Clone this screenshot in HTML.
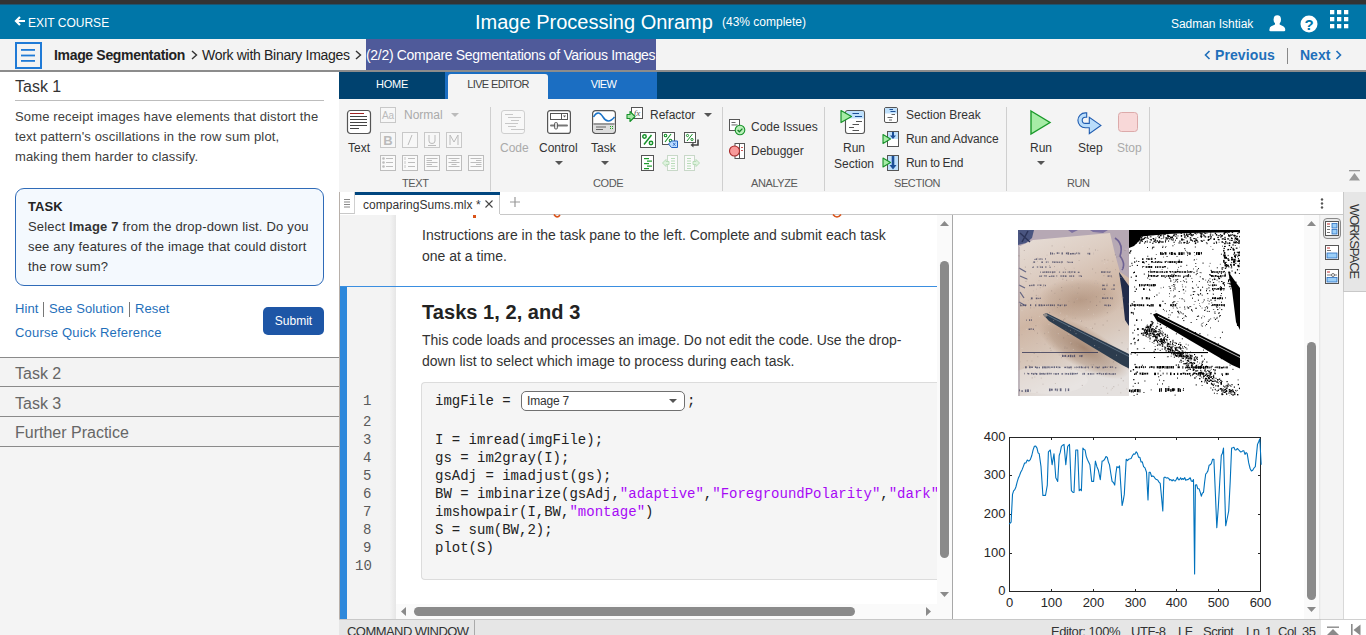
<!DOCTYPE html>
<html><head><meta charset="utf-8"><title>MATLAB Onramp</title><style>*{box-sizing:border-box;margin:0;padding:0}
html,body{width:1366px;height:635px;overflow:hidden;background:#f4f4f4;font-family:"Liberation Sans",sans-serif;color:#333}
.a{position:absolute;white-space:nowrap}
svg.a{overflow:visible}
</style></head><body>
<div class="a" style="left:0px;top:0px;width:1366px;height:4px;background:#333"></div>
<div class="a" style="left:0px;top:4px;width:1366px;height:1px;background:#1d5470"></div>
<div class="a" style="left:0px;top:5px;width:1366px;height:34px;background:#0076a8"></div>
<svg class="a" style="left:15px;top:16px;" width="11" height="10" viewBox="0 0 11 10"><path d="M5 1 L1 5 L5 9 M1.5 5 H10" stroke="#fff" stroke-width="2.2" fill="none"/></svg>
<div class="a" style="left:28px;top:16px;font-size:12px;line-height:15px;color:#fff;font-weight:normal;">EXIT COURSE</div>
<div class="a" style="left:475px;top:10px;font-size:20px;line-height:25px;color:#fff;font-weight:normal;">Image Processing Onramp</div>
<div class="a" style="left:722px;top:15px;font-size:12px;line-height:15px;color:#fff;font-weight:normal;">(43% complete)</div>
<div class="a" style="left:1171px;top:17px;font-size:12px;line-height:15px;color:#fff;font-weight:normal;letter-spacing:-0.03px;">Sadman Ishtiak</div>
<svg class="a" style="left:1269px;top:15px;" width="17" height="17" viewBox="0 0 17 17"><ellipse cx="8.3" cy="4.6" rx="3.7" ry="4.4" fill="#fff"/><path d="M0.3 15 Q0.3 11.5 4 10.5 L6 9.5 H10.6 L12.6 10.5 Q16.3 11.5 16.3 15 Q16.3 16.2 15 16.2 H1.6 Q0.3 16.2 0.3 15Z" fill="#fff"/><rect x="6" y="7" width="4.6" height="3.5" fill="#fff"/></svg>
<svg class="a" style="left:1300px;top:15px;" width="18" height="18" viewBox="0 0 18 18"><circle cx="9" cy="9" r="8.5" fill="#fff"/><text x="9" y="14.5" text-anchor="middle" font-family="Liberation Sans" font-weight="bold" font-size="15" fill="#0076a8">?</text></svg>
<svg class="a" style="left:1330px;top:10px;" width="19" height="19" viewBox="0 0 19 19"><rect x="0" y="0" width="4.3" height="4.3" fill="#fff"/><rect x="7" y="0" width="4.3" height="4.3" fill="#fff"/><rect x="14" y="0" width="4.3" height="4.3" fill="#fff"/><rect x="0" y="7" width="4.3" height="4.3" fill="#fff"/><rect x="7" y="7" width="4.3" height="4.3" fill="#fff"/><rect x="14" y="7" width="4.3" height="4.3" fill="#fff"/><rect x="0" y="14" width="4.3" height="4.3" fill="#fff"/><rect x="7" y="14" width="4.3" height="4.3" fill="#fff"/><rect x="14" y="14" width="4.3" height="4.3" fill="#fff"/></svg>
<div class="a" style="left:0px;top:39px;width:1366px;height:31px;background:#f3f3f3"></div>
<div class="a" style="left:0px;top:70px;width:1366px;height:2px;background:#8c8c8c"></div>
<div class="a" style="left:15px;top:42px;width:27px;height:27px;border:2px solid #1f7ad6;background:#fff0"></div>
<svg class="a" style="left:21px;top:49px;" width="15" height="13" viewBox="0 0 15 13"><rect x="0" y="0" width="14" height="1.8" fill="#1f7ad6"/><rect x="0" y="5.6" width="14" height="1.8" fill="#1f7ad6"/><rect x="0" y="11" width="14" height="1.8" fill="#1f7ad6"/></svg>
<div class="a" style="left:54px;top:46px;font-size:14px;line-height:18px;color:#222;font-weight:bold;letter-spacing:-0.33px;">Image Segmentation</div>
<svg class="a" style="left:191px;top:50px;" width="7" height="10" viewBox="0 0 7 10"><path d="M1 1 L5.5 5 L1 9" stroke="#333" stroke-width="1.4" fill="none"/></svg>
<div class="a" style="left:202px;top:46px;font-size:14px;line-height:18px;color:#222;font-weight:normal;letter-spacing:-0.3px;">Work with Binary Images</div>
<svg class="a" style="left:355px;top:50px;" width="7" height="10" viewBox="0 0 7 10"><path d="M1 1 L5.5 5 L1 9" stroke="#333" stroke-width="1.4" fill="none"/></svg>
<div class="a" style="left:366px;top:39px;width:290px;height:31px;background:#4f5a9a"></div>
<div class="a" style="left:366px;top:46px;font-size:14px;line-height:18px;color:#fff;font-weight:normal;letter-spacing:-0.31px;">(2/2) Compare Segmentations of Various Images</div>
<svg class="a" style="left:1204px;top:50px;" width="7" height="10" viewBox="0 0 7 10"><path d="M5.5 1 L1.5 5 L5.5 9" stroke="#1f6fba" stroke-width="1.6" fill="none"/></svg>
<div class="a" style="left:1215px;top:46px;font-size:14px;line-height:18px;color:#1f6fba;font-weight:bold;letter-spacing:0.1px;">Previous</div>
<div class="a" style="left:1287px;top:48px;width:1px;height:16px;background:#888"></div>
<div class="a" style="left:1300px;top:46px;font-size:14px;line-height:18px;color:#1f6fba;font-weight:bold;">Next</div>
<svg class="a" style="left:1335px;top:50px;" width="7" height="10" viewBox="0 0 7 10"><path d="M1.5 1 L5.5 5 L1.5 9" stroke="#1f6fba" stroke-width="1.6" fill="none"/></svg>
<div class="a" style="left:0px;top:72px;width:339px;height:563px;background:#f4f4f4"></div>
<div class="a" style="left:0px;top:72px;width:339px;height:285px;background:#fff"></div>
<div class="a" style="left:15px;top:77px;font-size:16px;line-height:20px;color:#333;font-weight:normal;">Task 1</div>
<div class="a" style="left:15px;top:100px;width:309px;height:1px;background:#bdbdbd"></div>
<div class="a" style="left:15px;top:109px;font-size:13px;line-height:16px;color:#404040;font-weight:normal;letter-spacing:0.14px;">Some receipt images have elements that distort the</div>
<div class="a" style="left:15px;top:129px;font-size:13px;line-height:16px;color:#404040;font-weight:normal;letter-spacing:0.14px;">text pattern&#x27;s oscillations in the row sum plot,</div>
<div class="a" style="left:15px;top:149px;font-size:13px;line-height:16px;color:#404040;font-weight:normal;letter-spacing:0.14px;">making them harder to classify.</div>
<div class="a" style="left:15px;top:188px;width:309px;height:98px;border:1px solid #2f6bb8;border-radius:9px;background:#f4f9fe"></div>
<div class="a" style="left:28px;top:199px;font-size:13px;line-height:16px;color:#222;font-weight:bold;letter-spacing:0.1px;">TASK</div>
<div class="a" style="left:28px;top:219px;font-size:13px;line-height:16px;color:#333;font-weight:normal;letter-spacing:0.18px;">Select <b>Image 7</b> from the drop-down list. Do you</div>
<div class="a" style="left:28px;top:239px;font-size:13px;line-height:16px;color:#333;font-weight:normal;letter-spacing:0.17px;">see any features of the image that could distort</div>
<div class="a" style="left:28px;top:259px;font-size:13px;line-height:16px;color:#333;font-weight:normal;letter-spacing:0.17px;">the row sum?</div>
<div class="a" style="left:15px;top:301px;font-size:13px;line-height:16px;color:#1f6fba;font-weight:normal;letter-spacing:0.1px;">Hint</div>
<div class="a" style="left:43px;top:302px;width:1px;height:15px;background:#777"></div>
<div class="a" style="left:49px;top:301px;font-size:13px;line-height:16px;color:#1f6fba;font-weight:normal;letter-spacing:0.1px;">See Solution</div>
<div class="a" style="left:129px;top:302px;width:1px;height:15px;background:#777"></div>
<div class="a" style="left:135px;top:301px;font-size:13px;line-height:16px;color:#1f6fba;font-weight:normal;letter-spacing:0.1px;">Reset</div>
<div class="a" style="left:15px;top:325px;font-size:13px;line-height:16px;color:#1f6fba;font-weight:normal;letter-spacing:0.2px;">Course Quick Reference</div>
<div class="a" style="left:263px;top:307px;width:61px;height:28px;background:#1e56a6;border-radius:5px"></div>
<div class="a" style="left:263px;top:314px;font-size:12px;line-height:15px;color:#fff;font-weight:normal;width:61px;text-align:center;">Submit</div>
<div class="a" style="left:0px;top:357px;width:339px;height:30px;background:#f3f3f3;border-top:1px solid #8a8a8a"></div>
<div class="a" style="left:15px;top:364px;font-size:16px;line-height:20px;color:#666;font-weight:normal;">Task 2</div>
<div class="a" style="left:0px;top:386px;width:339px;height:30px;background:#f3f3f3;border-top:1px solid #8a8a8a"></div>
<div class="a" style="left:15px;top:394px;font-size:16px;line-height:20px;color:#666;font-weight:normal;">Task 3</div>
<div class="a" style="left:0px;top:416px;width:339px;height:30px;background:#f3f3f3;border-top:1px solid #8a8a8a"></div>
<div class="a" style="left:15px;top:423px;font-size:16px;line-height:20px;color:#666;font-weight:normal;">Further Practice</div>
<div class="a" style="left:0px;top:446px;width:339px;height:1px;background:#8a8a8a"></div>
<div class="a" style="left:339px;top:72px;width:1027px;height:27px;background:#00426f"></div>
<div class="a" style="left:445px;top:72px;width:212px;height:27px;background:#1b6ec2"></div>
<div class="a" style="left:448px;top:74px;width:100px;height:25px;background:#f4f4f4;border-radius:3px 3px 0 0"></div>
<div class="a" style="left:339px;top:77px;font-size:11px;line-height:14px;color:#fff;font-weight:normal;letter-spacing:-0.2px;width:106px;text-align:center;">HOME</div>
<div class="a" style="left:448px;top:77px;font-size:11px;line-height:14px;color:#404040;font-weight:normal;letter-spacing:-0.6px;width:100px;text-align:center;">LIVE EDITOR</div>
<div class="a" style="left:549px;top:77px;font-size:11px;line-height:14px;color:#fff;font-weight:normal;letter-spacing:-0.6px;width:109px;text-align:center;">VIEW</div>
<div class="a" style="left:339px;top:99px;width:1027px;height:93px;background:#f4f4f4"></div>
<div class="a" style="left:490px;top:107px;width:1px;height:84px;background:#cfcfcf"></div>
<div class="a" style="left:722px;top:107px;width:1px;height:84px;background:#cfcfcf"></div>
<div class="a" style="left:824px;top:107px;width:1px;height:84px;background:#cfcfcf"></div>
<div class="a" style="left:1006px;top:107px;width:1px;height:84px;background:#cfcfcf"></div>
<div class="a" style="left:1149px;top:107px;width:1px;height:84px;background:#cfcfcf"></div>
<div class="a" style="left:402px;top:176px;font-size:11px;line-height:14px;color:#5a5a5a;font-weight:normal;letter-spacing:-0.4px;">TEXT</div>
<div class="a" style="left:593px;top:176px;font-size:11px;line-height:14px;color:#5a5a5a;font-weight:normal;letter-spacing:-0.4px;">CODE</div>
<div class="a" style="left:751px;top:176px;font-size:11px;line-height:14px;color:#5a5a5a;font-weight:normal;letter-spacing:-0.4px;">ANALYZE</div>
<div class="a" style="left:894px;top:176px;font-size:11px;line-height:14px;color:#5a5a5a;font-weight:normal;letter-spacing:-0.4px;">SECTION</div>
<div class="a" style="left:1067px;top:176px;font-size:11px;line-height:14px;color:#5a5a5a;font-weight:normal;letter-spacing:-0.4px;">RUN</div>
<svg class="a" style="left:347px;top:110px;" width="24" height="24" viewBox="0 0 24 24"><rect x="0.5" y="0.5" width="23" height="23" rx="3" fill="#fff" stroke="#555" stroke-width="1.2"/><rect x="3" y="3" width="14" height="1" fill="#a02424"/><rect x="3" y="6" width="17" height="1" fill="#444"/><rect x="3" y="9" width="17" height="1" fill="#444"/><rect x="3" y="12" width="17" height="1" fill="#444"/><rect x="3" y="15" width="17" height="1" fill="#444"/><rect x="3" y="18" width="9" height="1" fill="#444"/></svg>
<div class="a" style="left:348px;top:141px;font-size:12px;line-height:15px;color:#333;font-weight:normal;">Text</div>
<svg class="a" style="left:380px;top:107px;" width="16" height="16" viewBox="0 0 16 16"><rect x="0.5" y="0.5" width="15" height="15" fill="#f7f7f7" stroke="#c8c8c8"/><text x="8" y="12" text-anchor="middle" font-family="Liberation Sans" font-size="10" fill="#bbb">Aa</text></svg>
<div class="a" style="left:404px;top:108px;font-size:12px;line-height:15px;color:#aaa;font-weight:normal;">Normal</div>
<svg class="a" style="left:451px;top:113px;" width="8" height="4" viewBox="0 0 8 4"><path d="M0 0 H8 L4 4Z" fill="#bbb"/></svg>
<svg class="a" style="left:380px;top:132px;" width="16" height="16" viewBox="0 0 16 16"><rect x="0.5" y="0.5" width="15" height="15" fill="#f7f7f7" stroke="#c8c8c8"/><text x="8" y="13" text-anchor="middle" font-family="Liberation Sans" font-weight="bold" font-size="13" fill="#bbb">B</text></svg>
<svg class="a" style="left:402px;top:132px;" width="16" height="16" viewBox="0 0 16 16"><rect x="0.5" y="0.5" width="15" height="15" fill="#f7f7f7" stroke="#c8c8c8"/><path d="M10 3 L6 13" stroke="#bbb" stroke-width="1"/></svg>
<svg class="a" style="left:424px;top:132px;" width="16" height="16" viewBox="0 0 16 16"><rect x="0.5" y="0.5" width="15" height="15" fill="#f7f7f7" stroke="#c8c8c8"/><path d="M5 3 V9 Q5 11.5 8 11.5 Q11 11.5 11 9 V3 M4 13.5 H12" stroke="#bbb" stroke-width="1" fill="none"/></svg>
<svg class="a" style="left:446px;top:132px;" width="16" height="16" viewBox="0 0 16 16"><rect x="0.5" y="0.5" width="15" height="15" fill="#f7f7f7" stroke="#c8c8c8"/><path d="M4 13 V3 L8 10 L12 3 V13" stroke="#bbb" stroke-width="1" fill="none"/></svg>
<svg class="a" style="left:380px;top:155px;" width="16" height="16" viewBox="0 0 16 16"><rect x="0.5" y="0.5" width="15" height="15" fill="#fafafa" stroke="#bdbdbd"/><circle cx="3.5" cy="3.5" r="1.3" fill="#bdbdbd"/><path d="M6 3.5 H13" stroke="#bdbdbd"/><circle cx="3.5" cy="7.5" r="1.3" fill="#bdbdbd"/><path d="M6 7.5 H13" stroke="#bdbdbd"/><circle cx="3.5" cy="11.5" r="1.3" fill="#bdbdbd"/><path d="M6 11.5 H13" stroke="#bdbdbd"/></svg>
<svg class="a" style="left:402px;top:155px;" width="16" height="16" viewBox="0 0 16 16"><rect x="0.5" y="0.5" width="15" height="15" fill="#fafafa" stroke="#bdbdbd"/><path d="M3 2.0 V5.0" stroke="#bdbdbd" stroke-width="0.8"/><path d="M6 3.5 H13" stroke="#bdbdbd"/><path d="M3 6.0 V9.0" stroke="#bdbdbd" stroke-width="0.8"/><path d="M6 7.5 H13" stroke="#bdbdbd"/><path d="M3 10.0 V13.0" stroke="#bdbdbd" stroke-width="0.8"/><path d="M6 11.5 H13" stroke="#bdbdbd"/></svg>
<svg class="a" style="left:424px;top:155px;" width="16" height="16" viewBox="0 0 16 16"><rect x="0.5" y="0.5" width="15" height="15" fill="#fafafa" stroke="#bdbdbd"/><path d="M2.5 3.5 H13.5" stroke="#bdbdbd"/><path d="M2.5 5.5 H8" stroke="#bdbdbd"/><path d="M2.5 7.5 H13.5" stroke="#bdbdbd"/><path d="M2.5 9.5 H8" stroke="#bdbdbd"/><path d="M2.5 11.5 H13.5" stroke="#bdbdbd"/></svg>
<svg class="a" style="left:446px;top:155px;" width="16" height="16" viewBox="0 0 16 16"><rect x="0.5" y="0.5" width="15" height="15" fill="#fafafa" stroke="#bdbdbd"/><path d="M2.5 3.5 H13.5" stroke="#bdbdbd"/><path d="M5.5 5.5 H10.5" stroke="#bdbdbd"/><path d="M2.5 7.5 H13.5" stroke="#bdbdbd"/><path d="M5.5 9.5 H10.5" stroke="#bdbdbd"/><path d="M2.5 11.5 H13.5" stroke="#bdbdbd"/></svg>
<svg class="a" style="left:468px;top:155px;" width="16" height="16" viewBox="0 0 16 16"><rect x="0.5" y="0.5" width="15" height="15" fill="#fafafa" stroke="#bdbdbd"/><path d="M2.5 3.5 H13.5" stroke="#bdbdbd"/><path d="M8 5.5 H13.5" stroke="#bdbdbd"/><path d="M2.5 7.5 H13.5" stroke="#bdbdbd"/><path d="M8 9.5 H13.5" stroke="#bdbdbd"/><path d="M2.5 11.5 H13.5" stroke="#bdbdbd"/></svg>
<svg class="a" style="left:501px;top:110px;" width="24" height="24" viewBox="0 0 24 24"><rect x="0.5" y="0.5" width="23" height="23" rx="2.5" fill="#f8f8f8" stroke="#cfcfcf"/><rect x="4" y="4" width="8" height="1" fill="#c8c8c8"/><rect x="7" y="7" width="13" height="1" fill="#c8c8c8"/><rect x="10" y="10" width="8" height="1" fill="#c8c8c8"/><rect x="4" y="13" width="13" height="1" fill="#c8c8c8"/><rect x="7" y="16" width="8" height="1" fill="#c8c8c8"/><rect x="10" y="19" width="13" height="1" fill="#c8c8c8"/></svg>
<div class="a" style="left:500px;top:141px;font-size:12px;line-height:15px;color:#aaa;font-weight:normal;">Code</div>
<svg class="a" style="left:547px;top:110px;" width="24" height="24" viewBox="0 0 24 24"><rect x="0.6" y="0.6" width="22.8" height="22.8" rx="2.5" fill="#fff" stroke="#555" stroke-width="1.2"/><rect x="3.5" y="3.5" width="17" height="6" fill="#fff" stroke="#555"/><path d="M14.5 3.5 V9.5" stroke="#555"/><path d="M16 5.5 H19 L17.5 7.5Z" fill="#555"/><rect x="3" y="14.5" width="18" height="2" rx="1" fill="#777"/><rect x="7.5" y="12.5" width="3" height="6.5" rx="1.2" fill="#ddd" stroke="#555" stroke-width="0.9"/></svg>
<div class="a" style="left:539px;top:141px;font-size:12px;line-height:15px;color:#333;font-weight:normal;">Control</div>
<svg class="a" style="left:555px;top:161px;" width="8" height="4" viewBox="0 0 8 4"><path d="M0 0 H8 L4 4Z" fill="#555"/></svg>
<svg class="a" style="left:592px;top:110px;" width="24" height="24" viewBox="0 0 24 24"><rect x="0.6" y="0.6" width="22.8" height="22.8" rx="3" fill="#fff" stroke="#555" stroke-width="1.2"/><path d="M1.5 15 H22.5 V20 Q22.5 22.5 20 22.5 H4 Q1.5 22.5 1.5 20Z" fill="#ddd"/><path d="M1.5 14 H22.5" stroke="#555" stroke-width="1.2"/><path d="M1.5 7 Q6 -1 11 7 T22.5 7" stroke="#1a73c8" stroke-width="1.5" fill="none"/><rect x="4" y="16.5" width="10" height="1" fill="#666"/><rect x="4" y="19" width="7" height="1" fill="#666"/><rect x="18" y="16" width="1" height="1" fill="#2a2"/><rect x="20" y="16" width="1" height="1" fill="#2a2"/><rect x="18" y="18" width="1" height="1" fill="#2a2"/><rect x="20" y="18" width="1" height="1" fill="#2a2"/></svg>
<div class="a" style="left:591px;top:141px;font-size:12px;line-height:15px;color:#333;font-weight:normal;">Task</div>
<svg class="a" style="left:601px;top:161px;" width="8" height="4" viewBox="0 0 8 4"><path d="M0 0 H8 L4 4Z" fill="#555"/></svg>
<svg class="a" style="left:626px;top:106px;" width="19" height="17" viewBox="0 0 19 17"><rect x="5.5" y="1.5" width="11" height="11" fill="#fff" stroke="#555"/><text x="11" y="9.5" text-anchor="middle" font-family="Liberation Serif" font-style="italic" font-size="9" fill="#555">fx</text><path d="M1 8.5 H4 V5.5 L9 10.5 L4 15.5 V12.5 H1Z" fill="#a8e6a8" stroke="#17922a" stroke-width="1.1" stroke-linejoin="round"/></svg>
<div class="a" style="left:650px;top:108px;font-size:12px;line-height:15px;color:#333;font-weight:normal;">Refactor</div>
<svg class="a" style="left:704px;top:113px;" width="8" height="4" viewBox="0 0 8 4"><path d="M0 0 H8 L4 4Z" fill="#555"/></svg>
<svg class="a" style="left:640px;top:132px;" width="16" height="16" viewBox="0 0 16 16"><rect x="0.5" y="0.5" width="15" height="15" fill="#fff" stroke="#555"/><circle cx="4.5" cy="4.5" r="1.7" fill="none" stroke="#17922a" stroke-width="1.5"/><circle cx="11" cy="11" r="1.7" fill="none" stroke="#17922a" stroke-width="1.5"/><path d="M11.5 3.0 L4.0 12.5" stroke="#17922a" stroke-width="1.5"/></svg>
<svg class="a" style="left:662px;top:132px;" width="16" height="16" viewBox="0 0 16 16"><rect x="0.5" y="0.5" width="12" height="12" fill="#fff" stroke="#555"/><circle cx="3.5" cy="3.5" r="1.3" fill="none" stroke="#17922a" stroke-width="1.1"/><circle cx="8.5" cy="8.5" r="1.3" fill="none" stroke="#17922a" stroke-width="1.1"/><path d="M9.0 2.0 L3.0 10.0" stroke="#17922a" stroke-width="1.1"/><path d="M6.5 12 L9.5 9 H15.5 V15.5 H9.5Z" fill="#bcdcff" stroke="#2060c0"/><path d="M11 10.8 L13.5 13.8 M13.5 10.8 L11 13.8" stroke="#2060c0" stroke-width="0.8"/></svg>
<svg class="a" style="left:684px;top:132px;" width="16" height="16" viewBox="0 0 16 16"><rect x="0.5" y="0.5" width="11" height="10" fill="#fff" stroke="#555"/><circle cx="3.5" cy="3.5" r="1.1" fill="none" stroke="#17922a" stroke-width="1"/><circle cx="8" cy="7.5" r="1.1" fill="none" stroke="#17922a" stroke-width="1"/><path d="M8.5 2.0 L3.0 9.0" stroke="#17922a" stroke-width="1"/><path d="M14 7.5 V13 H9" stroke="#444" stroke-width="1.6" fill="none"/><path d="M9.5 10.5 L6.5 13 L9.5 15.5Z" fill="#444"/></svg>
<svg class="a" style="left:641px;top:155px;" width="14" height="16" viewBox="0 0 14 16"><rect x="0.5" y="0.5" width="12" height="15" fill="#fff" stroke="#555"/><rect x="3" y="3.0" width="5" height="1.2" fill="#1a9a2a"/><rect x="6" y="5.5" width="5" height="1.2" fill="#1a9a2a"/><rect x="3" y="8.0" width="5" height="1.2" fill="#1a9a2a"/><rect x="6" y="10.5" width="5" height="1.2" fill="#1a9a2a"/><rect x="3" y="13.0" width="5" height="1.2" fill="#1a9a2a"/></svg>
<svg class="a" style="left:662px;top:155px;" width="16" height="16" viewBox="0 0 16 16"><rect x="5.5" y="0.5" width="10" height="15" fill="#fafafa" stroke="#c8d8c8"/><rect x="9" y="3.0" width="4" height="1" fill="#b8dcb8"/><rect x="9" y="5.5" width="4" height="1" fill="#b8dcb8"/><rect x="9" y="8.0" width="4" height="1" fill="#b8dcb8"/><rect x="9" y="10.5" width="4" height="1" fill="#b8dcb8"/><rect x="9" y="13.0" width="4" height="1" fill="#b8dcb8"/><path d="M0.5 8 L4 4.5 V6.5 H7 V9.5 H4 V11.5Z" fill="#dff3df" stroke="#b8dcb8"/></svg>
<svg class="a" style="left:684px;top:155px;" width="16" height="16" viewBox="0 0 16 16"><rect x="0.5" y="0.5" width="10" height="15" fill="#fafafa" stroke="#c8d8c8"/><rect x="3" y="3.0" width="4" height="1" fill="#b8dcb8"/><rect x="3" y="5.5" width="4" height="1" fill="#b8dcb8"/><rect x="3" y="8.0" width="4" height="1" fill="#b8dcb8"/><rect x="3" y="10.5" width="4" height="1" fill="#b8dcb8"/><rect x="3" y="13.0" width="4" height="1" fill="#b8dcb8"/><path d="M15.5 8 L12 4.5 V6.5 H9 V9.5 H12 V11.5Z" fill="#dff3df" stroke="#b8dcb8"/></svg>
<svg class="a" style="left:729px;top:119px;" width="16" height="16" viewBox="0 0 16 16"><rect x="0.5" y="0.5" width="10" height="11" fill="#fff" stroke="#555"/><rect x="2.5" y="3" width="4" height="0.9" fill="#555"/><rect x="2.5" y="5.5" width="6" height="0.9" fill="#555"/><circle cx="11" cy="11" r="4.8" fill="#b8efb8" stroke="#17922a" stroke-width="1.1"/><path d="M8.6 11 L10.4 12.8 L13.4 9.6" stroke="#17822a" stroke-width="1.3" fill="none"/></svg>
<div class="a" style="left:751px;top:120px;font-size:12px;line-height:15px;color:#333;font-weight:normal;">Code Issues</div>
<svg class="a" style="left:729px;top:143px;" width="16" height="16" viewBox="0 0 16 16"><rect x="6" y="0.5" width="9.5" height="15" fill="#fff" stroke="#555"/><path d="M10.5 0.5 V15.5" stroke="#555"/><circle cx="5.5" cy="8" r="5" fill="#f89a9a" stroke="#a82828" stroke-width="1.1"/><rect x="12" y="4" width="2" height="0.8" fill="#c03030"/><rect x="12" y="7" width="2" height="0.8" fill="#c03030"/></svg>
<div class="a" style="left:751px;top:144px;font-size:12px;line-height:15px;color:#333;font-weight:normal;">Debugger</div>
<svg class="a" style="left:840px;top:110px;" width="25" height="24" viewBox="0 0 25 24"><rect x="5.5" y="0.5" width="19" height="23" rx="2.5" fill="#fff" stroke="#555" stroke-width="1.1"/><path d="M6 3 Q6 1 8 1 H22 Q24 1 24 3 V8.5 H6Z" fill="#bfe0fb"/><path d="M12.5 3.5 H19 M15 6.5 H22" stroke="#1b4f98" stroke-width="1.2"/><path d="M16 11.5 H22 M12.5 14.5 H19 M9 17.5 H14 M12.5 20.5 H19" stroke="#555" stroke-width="1"/><path d="M1 0.5 L11.5 6.5 L1 12.5Z" fill="#a6eca6" stroke="#17922a" stroke-width="1.2" stroke-linejoin="round"/></svg>
<div class="a" style="left:843px;top:141px;font-size:12px;line-height:15px;color:#333;font-weight:normal;">Run</div>
<div class="a" style="left:834px;top:157px;font-size:12px;line-height:15px;color:#333;font-weight:normal;">Section</div>
<svg class="a" style="left:884px;top:107px;" width="14" height="16" viewBox="0 0 14 16"><rect x="0.5" y="0.5" width="13" height="15" rx="1.5" fill="#fff" stroke="#555"/><rect x="1" y="1" width="12" height="5.5" fill="#bfe0fb"/><path d="M5.5 2.5 H9 M6.5 4.5 H11.5" stroke="#1b4f98" stroke-width="1"/><path d="M7.5 7.5 H11 M3.5 10.5 H8.5 M5 13 H8" stroke="#555" stroke-width="0.9"/></svg>
<div class="a" style="left:906px;top:108px;font-size:12px;line-height:15px;color:#333;font-weight:normal;">Section Break</div>
<svg class="a" style="left:882px;top:131px;" width="17" height="16" viewBox="0 0 17 16"><rect x="5.5" y="0.5" width="11" height="15" fill="#fff" stroke="#555"/><rect x="6" y="1" width="10" height="7" fill="#bfe0fb"/><path d="M11 1 V5" stroke="#1b4f98" stroke-width="2"/><path d="M8 4.5 H14 L11 8Z" fill="#1b4f98"/><path d="M1 3.5 L8.5 8 L1 12.5Z" fill="#a6eca6" stroke="#17922a" stroke-width="1.1" stroke-linejoin="round"/></svg>
<div class="a" style="left:906px;top:132px;font-size:12px;line-height:15px;color:#333;font-weight:normal;letter-spacing:-0.15px;">Run and Advance</div>
<svg class="a" style="left:882px;top:155px;" width="17" height="16" viewBox="0 0 17 16"><rect x="5.5" y="0.5" width="11" height="15" fill="#bfe0fb" stroke="#555"/><path d="M11 1 V11" stroke="#1b4f98" stroke-width="2.6"/><path d="M7.5 10 H14.5 L11 14.5Z" fill="#1b4f98"/><path d="M1 3 L8.5 7.5 L1 12Z" fill="#a6eca6" stroke="#17922a" stroke-width="1.1" stroke-linejoin="round"/></svg>
<div class="a" style="left:906px;top:156px;font-size:12px;line-height:15px;color:#333;font-weight:normal;letter-spacing:-0.3px;">Run to End</div>
<svg class="a" style="left:1030px;top:110px;" width="21" height="25" viewBox="0 0 21 25"><path d="M1 1 L20 12.5 L1 24Z" fill="#a6eca6" stroke="#1a9a2a" stroke-width="1.4"/></svg>
<div class="a" style="left:1030px;top:141px;font-size:12px;line-height:15px;color:#333;font-weight:normal;">Run</div>
<svg class="a" style="left:1037px;top:161px;" width="8" height="4" viewBox="0 0 8 4"><path d="M0 0 H8 L4 4Z" fill="#555"/></svg>
<svg class="a" style="left:1077px;top:112px;" width="25" height="23" viewBox="0 0 25 23"><path d="M9.7 0.9 L8.3 0.9 A7.4 7.4 0 0 0 8.3 15.7 L12.3 15.7 L12.3 21.6 L23.9 13.4 L12.3 5.2 L12.3 11.4 L8.3 11.4 A3.1 3.1 0 0 1 8.3 5.2 L9.7 5.2 Z" fill="#b9ddfb" stroke="#1f5cb0" stroke-width="1.1" stroke-linejoin="miter"/></svg>
<div class="a" style="left:1078px;top:141px;font-size:12px;line-height:15px;color:#333;font-weight:normal;">Step</div>
<svg class="a" style="left:1118px;top:112px;" width="20" height="20" viewBox="0 0 20 20"><rect x="0.5" y="0.5" width="19" height="19" rx="3" fill="#f8d8d8" stroke="#dcaaaa"/></svg>
<div class="a" style="left:1117px;top:141px;font-size:12px;line-height:15px;color:#aaa;font-weight:normal;">Stop</div>
<svg class="a" style="left:1349px;top:170px;" width="11" height="11" viewBox="0 0 11 11"><rect x="0" y="0" width="11" height="1.3" fill="#999"/><path d="M0 10.5 L5.5 3 L11 10.5Z" fill="#999"/></svg>
<div class="a" style="left:339px;top:192px;width:1004px;height:22px;background:#fff"></div>
<div class="a" style="left:339px;top:192px;width:1px;height:443px;background:#b8b0aa"></div>
<div class="a" style="left:340px;top:192px;width:15px;height:22px;background:#fff;border-right:1px solid #d0d0d0;border-bottom:1px solid #c8c8c8"></div>
<svg class="a" style="left:344px;top:199px;" width="6" height="9" viewBox="0 0 6 9"><rect x="0" y="0" width="6" height="1" fill="#888"/><rect x="0" y="2.5" width="6" height="1" fill="#888"/><rect x="0" y="5" width="6" height="1" fill="#888"/><rect x="0" y="7.5" width="6" height="1" fill="#888"/></svg>
<div class="a" style="left:355px;top:192px;width:145px;height:23px;background:#fff;border-right:1px solid #c8c8c8"></div>
<div class="a" style="left:355px;top:192px;width:145px;height:3px;background:#00467f"></div>
<div class="a" style="left:363px;top:198px;font-size:12px;line-height:15px;color:#333;font-weight:normal;letter-spacing:0.05px;">comparingSums.mlx *</div>
<svg class="a" style="left:485px;top:200px;" width="8" height="8" viewBox="0 0 8 8"><path d="M0.5 0.5 L7.5 7.5 M7.5 0.5 L0.5 7.5" stroke="#444" stroke-width="1.1"/></svg>
<svg class="a" style="left:510px;top:197px;" width="10" height="10" viewBox="0 0 10 10"><path d="M5 0 V10 M0 5 H10" stroke="#999" stroke-width="1.2"/></svg>
<div class="a" style="left:500px;top:214px;width:843px;height:1px;background:#c8c8c8"></div>
<div class="a" style="left:340px;top:214px;width:160px;height:1px;background:#fff"></div>
<svg class="a" style="left:1320px;top:198px;" width="4" height="11" viewBox="0 0 4 11"><circle cx="2" cy="1.5" r="1.2" fill="#555"/><circle cx="2" cy="5.5" r="1.2" fill="#555"/><circle cx="2" cy="9.5" r="1.2" fill="#555"/></svg>
<div class="a" style="left:340px;top:215px;width:56px;height:404px;background:linear-gradient(to right,#f3f3f3 0,#f3f3f3 50px,#e6e6e6 56px)"></div>
<div class="a" style="left:396px;top:215px;width:541px;height:404px;background:#fff"></div>
<div class="a" style="left:340px;top:286px;width:597px;height:1px;background:#3a8ee0"></div>
<div class="a" style="left:340px;top:287px;width:7px;height:332px;background:#2d88db"></div>
<div class="a" style="left:473px;top:215px;width:3px;height:3px;background:#d95319"></div>
<svg class="a" style="left:553px;top:213px;" width="8" height="6" viewBox="0 0 8 6"><path d="M1 1.5 Q4 6 7 2" stroke="#d95319" stroke-width="1.6" fill="none"/></svg>
<svg class="a" style="left:832px;top:213px;" width="10" height="6" viewBox="0 0 10 6"><path d="M1 1.5 Q5 6.5 9 1.5" stroke="#d95319" stroke-width="1.6" fill="none"/></svg>
<div class="a" style="left:422px;top:226px;font-size:14px;line-height:18px;color:#333;font-weight:normal;">Instructions are in the task pane to the left. Complete and submit each task</div>
<div class="a" style="left:422px;top:247px;font-size:14px;line-height:18px;color:#333;font-weight:normal;">one at a time.</div>
<div class="a" style="left:422px;top:300px;font-size:20px;line-height:25px;color:#222;font-weight:bold;letter-spacing:0.05px;">Tasks 1, 2, and 3</div>
<div class="a" style="left:422px;top:331px;font-size:14px;line-height:18px;color:#333;font-weight:normal;letter-spacing:-0.01px;">This code loads and processes an image. Do not edit the code. Use the drop-</div>
<div class="a" style="left:422px;top:352px;font-size:14px;line-height:18px;color:#333;font-weight:normal;letter-spacing:0.02px;">down list to select which image to process during each task.</div>
<div class="a" style="left:421px;top:382px;width:530px;height:198px;background:#f5f5f5;border:1px solid #dcdcdc;border-radius:4px 0 0 4px;border-right:none"></div>
<div class="a" style="left:363px;top:392px;font-size:14px;line-height:18px;color:#5a5a5a;font-weight:normal;font-family:'Liberation Mono',monospace;">1</div>
<div class="a" style="left:363px;top:413px;font-size:14px;line-height:18px;color:#5a5a5a;font-weight:normal;font-family:'Liberation Mono',monospace;">2</div>
<div class="a" style="left:363px;top:431px;font-size:14px;line-height:18px;color:#5a5a5a;font-weight:normal;font-family:'Liberation Mono',monospace;">3</div>
<div class="a" style="left:363px;top:449px;font-size:14px;line-height:18px;color:#5a5a5a;font-weight:normal;font-family:'Liberation Mono',monospace;">4</div>
<div class="a" style="left:363px;top:467px;font-size:14px;line-height:18px;color:#5a5a5a;font-weight:normal;font-family:'Liberation Mono',monospace;">5</div>
<div class="a" style="left:363px;top:485px;font-size:14px;line-height:18px;color:#5a5a5a;font-weight:normal;font-family:'Liberation Mono',monospace;">6</div>
<div class="a" style="left:363px;top:503px;font-size:14px;line-height:18px;color:#5a5a5a;font-weight:normal;font-family:'Liberation Mono',monospace;">7</div>
<div class="a" style="left:363px;top:521px;font-size:14px;line-height:18px;color:#5a5a5a;font-weight:normal;font-family:'Liberation Mono',monospace;">8</div>
<div class="a" style="left:363px;top:539px;font-size:14px;line-height:18px;color:#5a5a5a;font-weight:normal;font-family:'Liberation Mono',monospace;">9</div>
<div class="a" style="left:355px;top:557px;font-size:14px;line-height:18px;color:#5a5a5a;font-weight:normal;font-family:'Liberation Mono',monospace;">10</div>
<div class="a" style="left:435px;top:392px;font-size:14px;line-height:18px;color:#222;font-weight:normal;font-family:'Liberation Mono',monospace;">imgFile =</div>
<div class="a" style="left:521px;top:391px;width:164px;height:20px;background:#fff;border:1px solid #707070;border-radius:5px"></div>
<div class="a" style="left:527px;top:394px;font-size:12px;line-height:15px;color:#333;font-weight:normal;letter-spacing:-0.2px;">Image 7</div>
<svg class="a" style="left:669px;top:399px;" width="8" height="4" viewBox="0 0 8 4"><path d="M0 0 H8 L4 4Z" fill="#555"/></svg>
<div class="a" style="left:687px;top:392px;font-size:14px;line-height:18px;color:#222;font-weight:normal;font-family:'Liberation Mono',monospace;">;</div>
<div class="a" style="left:435px;top:431px;font-size:14px;line-height:18px;color:#222;font-weight:normal;font-family:'Liberation Mono',monospace;">I = imread(imgFile);</div>
<div class="a" style="left:435px;top:449px;font-size:14px;line-height:18px;color:#222;font-weight:normal;font-family:'Liberation Mono',monospace;">gs = im2gray(I);</div>
<div class="a" style="left:435px;top:467px;font-size:14px;line-height:18px;color:#222;font-weight:normal;font-family:'Liberation Mono',monospace;">gsAdj = imadjust(gs);</div>
<div class="a" style="left:435px;top:485px;font-size:14px;line-height:18px;color:#222;font-weight:normal;font-family:'Liberation Mono',monospace;">BW = imbinarize(gsAdj,<span style="color:#a709f5">"adaptive"</span>,<span style="color:#a709f5">"ForegroundPolarity"</span>,<span style="color:#a709f5">"dark"</span>);</div>
<div class="a" style="left:435px;top:503px;font-size:14px;line-height:18px;color:#222;font-weight:normal;font-family:'Liberation Mono',monospace;">imshowpair(I,BW,<span style="color:#a709f5">"montage"</span>)</div>
<div class="a" style="left:435px;top:521px;font-size:14px;line-height:18px;color:#222;font-weight:normal;font-family:'Liberation Mono',monospace;">S = sum(BW,2);</div>
<div class="a" style="left:435px;top:539px;font-size:14px;line-height:18px;color:#222;font-weight:normal;font-family:'Liberation Mono',monospace;">plot(S)</div>
<div class="a" style="left:937px;top:215px;width:15px;height:404px;background:#fafafa"></div>
<div class="a" style="left:952px;top:215px;width:1px;height:404px;background:#a8a8a8"></div>
<svg class="a" style="left:940px;top:221px;" width="9" height="5" viewBox="0 0 9 5"><path d="M0 5 L4.5 0 L9 5Z" fill="#8a8a8a"/></svg>
<div class="a" style="left:940px;top:261px;width:9px;height:297px;background:#8a8a8a;border-radius:4.5px"></div>
<svg class="a" style="left:940px;top:592px;" width="9" height="5" viewBox="0 0 9 5"><path d="M0 0 L4.5 5 L9 0Z" fill="#8a8a8a"/></svg>
<div class="a" style="left:396px;top:604px;width:541px;height:15px;background:#fafafa"></div>
<svg class="a" style="left:401px;top:607px;" width="5" height="9" viewBox="0 0 5 9"><path d="M5 0 L0 4.5 L5 9Z" fill="#8a8a8a"/></svg>
<div class="a" style="left:414px;top:607px;width:441px;height:9px;background:#8a8a8a;border-radius:4.5px"></div>
<svg class="a" style="left:926px;top:607px;" width="5" height="9" viewBox="0 0 5 9"><path d="M0 0 L5 4.5 L0 9Z" fill="#8a8a8a"/></svg>
<div class="a" style="left:953px;top:215px;width:352px;height:404px;background:#fff"></div>
<div class="a" style="left:1304px;top:215px;width:15px;height:404px;background:#fafafa"></div>
<svg class="a" style="left:1307px;top:221px;" width="9" height="5" viewBox="0 0 9 5"><path d="M0 5 L4.5 0 L9 5Z" fill="#8a8a8a"/></svg>
<div class="a" style="left:1307px;top:342px;width:9px;height:258px;background:#8a8a8a;border-radius:4.5px"></div>
<svg class="a" style="left:1307px;top:607px;" width="9" height="5" viewBox="0 0 9 5"><path d="M0 0 L4.5 5 L9 0Z" fill="#8a8a8a"/></svg>
<div class="a" style="left:1319px;top:215px;width:25px;height:404px;background:linear-gradient(to right,#e4e4e4 0,#f4f4f4 2px);border-right:1px solid #c8c8c8"></div>
<div class="a" style="left:1323px;top:218px;width:18px;height:21px;border:1.5px solid #888;border-radius:4px;background:#e8e8e8"></div>
<svg class="a" style="left:1325px;top:221px;" width="14" height="15" viewBox="0 0 14 15"><rect x="0.5" y="0.5" width="13" height="14" fill="#fff" stroke="#555"/><rect x="2" y="2.5" width="3" height="1" fill="#c03030"/><rect x="2" y="5" width="3" height="0.8" fill="#555"/><rect x="2" y="8" width="3" height="0.8" fill="#555"/><rect x="2" y="11" width="3" height="0.8" fill="#555"/><rect x="7" y="2.5" width="5" height="4.5" fill="#9ccff8" stroke="#2a6fc0" stroke-width="0.8"/><rect x="7" y="8.5" width="5" height="4.5" fill="#9ccff8" stroke="#2a6fc0" stroke-width="0.8"/></svg>
<svg class="a" style="left:1325px;top:245px;" width="14" height="15" viewBox="0 0 14 15"><rect x="0.5" y="0.5" width="13" height="14" fill="#fff" stroke="#555"/><rect x="2" y="2.5" width="3" height="1" fill="#c03030"/><rect x="2" y="5" width="4" height="0.8" fill="#555"/><rect x="2" y="8" width="10" height="5" fill="#9ccff8" stroke="#2a6fc0" stroke-width="0.8"/></svg>
<svg class="a" style="left:1325px;top:269px;" width="14" height="15" viewBox="0 0 14 15"><rect x="0.5" y="0.5" width="13" height="14" fill="#fff" stroke="#555"/><rect x="2" y="2.5" width="3" height="1" fill="#c03030"/><path d="M2 6 H12" stroke="#555" stroke-width="0.8"/><circle cx="8" cy="6" r="1.5" fill="#fff" stroke="#555" stroke-width="0.8"/><rect x="2" y="8.5" width="10" height="4.5" fill="#9ccff8" stroke="#2a6fc0" stroke-width="0.8"/></svg>
<div class="a" style="left:1343px;top:192px;width:23px;height:100px;background:#e6e6e6;border-left:1px solid #c8c8c8;border-bottom:1px solid #c8c8c8"></div>
<div class="a" style="left:1343px;top:192px;width:23px;height:100px;"><div style="position:absolute;left:23px;top:12px;transform-origin:0 0;transform:rotate(90deg);font-size:13px;line-height:23px;color:#333;white-space:nowrap;letter-spacing:-1.05px">WORKSPACE</div></div>
<div class="a" style="left:1343px;top:292px;width:23px;height:327px;background:#fff;border-left:1px solid #d8d8d8"></div>
<div class="a" style="left:339px;top:619px;width:982px;height:16px;background:#e6e6e6;border-top:1px solid #c8c8c8"></div>
<div class="a" style="left:1321px;top:619px;width:45px;height:16px;background:#fff;border-top:1px solid #d0d0d0"></div>
<div class="a" style="left:347px;top:624px;font-size:13px;line-height:16px;color:#333;font-weight:normal;letter-spacing:-0.55px;">COMMAND WINDOW</div>
<div class="a" style="left:474px;top:620px;width:1px;height:15px;background:#aaa"></div>
<div class="a" style="left:1051px;top:624px;font-size:13px;line-height:16px;color:#333;font-weight:normal;letter-spacing:-0.45px;">Editor: 100%</div>
<div class="a" style="left:1131px;top:624px;font-size:13px;line-height:16px;color:#333;font-weight:normal;letter-spacing:-0.45px;">UTF-8</div>
<div class="a" style="left:1178px;top:624px;font-size:13px;line-height:16px;color:#333;font-weight:normal;letter-spacing:-0.45px;">LF</div>
<div class="a" style="left:1203px;top:624px;font-size:13px;line-height:16px;color:#333;font-weight:normal;letter-spacing:-0.45px;">Script</div>
<div class="a" style="left:1246px;top:624px;font-size:13px;line-height:16px;color:#333;font-weight:normal;letter-spacing:-0.45px;">Ln</div>
<div class="a" style="left:1265px;top:624px;font-size:13px;line-height:16px;color:#333;font-weight:normal;letter-spacing:-0.45px;">1</div>
<div class="a" style="left:1278px;top:624px;font-size:13px;line-height:16px;color:#333;font-weight:normal;letter-spacing:-0.45px;">Col</div>
<div class="a" style="left:1302px;top:624px;font-size:13px;line-height:16px;color:#333;font-weight:normal;letter-spacing:-0.45px;">35</div>
<svg class="a" style="left:1327px;top:626px;" width="12" height="9" viewBox="0 0 12 9"><rect x="0" y="0.5" width="12" height="1.4" fill="#8a8a8a"/><path d="M0 9 L6 3 L12 9Z" fill="#8a8a8a"/></svg>
<svg class="a" style="left:1351px;top:624px;" width="10" height="11" viewBox="0 0 10 11"><rect x="0" y="0" width="1.6" height="11" fill="#8a8a8a"/><path d="M9.5 0.5 L2.5 6 L9.5 11.5Z" fill="#8a8a8a"/></svg>
<svg class="a" style="left:1018px;top:230px;overflow:hidden" width="222" height="166" viewBox="0 0 222 166"><defs><linearGradient id="pg" x1="0" y1="0" x2="0.3" y2="1"><stop offset="0" stop-color="#e8e0da"/><stop offset="0.3" stop-color="#ddcdc2"/><stop offset="0.55" stop-color="#cfb6a4"/><stop offset="0.78" stop-color="#d8c8bc"/><stop offset="1" stop-color="#e4e0de"/></linearGradient><radialGradient id="sh"><stop offset="0" stop-color="#9c7c66" stop-opacity="0.85"/><stop offset="0.7" stop-color="#a88a74" stop-opacity="0.45"/><stop offset="1" stop-color="#b09078" stop-opacity="0"/></radialGradient><clipPath id="cl"><rect x="0" y="0" width="111" height="166"/></clipPath><clipPath id="cr"><rect x="111" y="0" width="111" height="166"/></clipPath></defs><g clip-path="url(#cl)"><rect x="0" y="0" width="111" height="166" fill="url(#pg)"/><ellipse cx="66" cy="118" rx="52" ry="20" fill="url(#sh)" transform="rotate(30 66 118)"/><ellipse cx="62" cy="70" rx="42" ry="22" fill="url(#sh)" opacity="0.55"/><ellipse cx="30" cy="150" rx="40" ry="14" fill="#ece8e6" opacity="0.5"/><path d="M0 0 H111 V48 L102 42 L97 24 L92 3 L15 10 L0 17Z" fill="#b6a8b4"/><path d="M0 0 H16 L14 8 L8 13 L0 15Z" fill="#4a5580"/><path d="M2 3 L12 12 M10 1 L4 12" stroke="#2c3458" stroke-width="1.5"/><path d="M50 0 H60 L54 3Z M72 0 H90 L85 3 L75 2Z" fill="#7e72a0"/><path d="M97 8 Q106 14 102 26 Q108 34 104 40" stroke="#6e6294" stroke-width="1.6" fill="none"/><path d="M101 42 L111 56 V96 L107 90 L104 62Z" fill="#222c4a"/><path d="M1 38 L8 42 M2 46 L9 49 M1 55 L7 58 M2 62 L6 68 M1 72 L8 76" stroke="#4a4f75" stroke-width="1.3" opacity="0.8"/><rect x="0" y="17" width="2" height="149" fill="#9a90a0" opacity="0.5"/><rect x="32.0" y="22.3" width="1.1" height="2.3" fill="#2e3152" opacity="0.7"/><rect x="33.7" y="22.6" width="1.3" height="1.9" fill="#2e3152" opacity="0.7"/><rect x="35.8" y="23.0" width="0.7" height="1.5" fill="#2e3152" opacity="0.7"/><rect x="38.7" y="22.3" width="1.4" height="1.6" fill="#2e3152" opacity="0.7"/><rect x="40.6" y="22.3" width="0.7" height="1.7" fill="#2e3152" opacity="0.7"/><rect x="43.5" y="22.4" width="1.4" height="2.1" fill="#2e3152" opacity="0.7"/><rect x="47.9" y="22.5" width="1.4" height="1.7" fill="#2e3152" opacity="0.7"/><rect x="49.6" y="22.4" width="1.5" height="2.3" fill="#2e3152" opacity="0.7"/><rect x="52.0" y="23.0" width="1.6" height="1.6" fill="#2e3152" opacity="0.7"/><rect x="54.1" y="22.9" width="1.8" height="1.5" fill="#2e3152" opacity="0.7"/><rect x="56.6" y="22.9" width="0.9" height="1.8" fill="#2e3152" opacity="0.7"/><rect x="58.3" y="22.4" width="0.7" height="1.5" fill="#2e3152" opacity="0.7"/><rect x="59.8" y="22.4" width="0.8" height="1.9" fill="#2e3152" opacity="0.7"/><rect x="61.3" y="22.7" width="0.8" height="1.6" fill="#2e3152" opacity="0.7"/><rect x="69.5" y="22.8" width="1.0" height="1.5" fill="#2e3152" opacity="0.7"/><rect x="70.9" y="22.8" width="1.3" height="1.9" fill="#2e3152" opacity="0.7"/><rect x="75.9" y="22.5" width="0.1" height="2.1" fill="#2e3152" opacity="0.7"/><rect x="16.4" y="28.9" width="1.1" height="1.0" fill="#2e3152" opacity="0.7"/><rect x="17.8" y="28.4" width="1.4" height="1.5" fill="#2e3152" opacity="0.7"/><rect x="20.7" y="28.4" width="0.9" height="1.5" fill="#2e3152" opacity="0.7"/><rect x="22.0" y="28.5" width="1.7" height="1.0" fill="#2e3152" opacity="0.7"/><rect x="24.2" y="28.5" width="0.7" height="1.2" fill="#2e3152" opacity="0.7"/><rect x="27.1" y="28.3" width="0.9" height="1.3" fill="#2e3152" opacity="0.7"/><rect x="15.3" y="31.4" width="1.8" height="1.4" fill="#2e3152" opacity="0.7"/><rect x="23.3" y="31.5" width="1.7" height="1.4" fill="#2e3152" opacity="0.7"/><rect x="27.8" y="31.5" width="1.3" height="1.2" fill="#2e3152" opacity="0.7"/><rect x="29.7" y="31.3" width="0.7" height="1.6" fill="#2e3152" opacity="0.7"/><rect x="34.1" y="31.4" width="1.5" height="1.3" fill="#2e3152" opacity="0.7"/><rect x="36.0" y="31.5" width="1.4" height="1.4" fill="#2e3152" opacity="0.7"/><rect x="37.8" y="31.3" width="0.6" height="1.4" fill="#2e3152" opacity="0.7"/><rect x="38.7" y="31.6" width="1.7" height="1.2" fill="#2e3152" opacity="0.7"/><rect x="40.9" y="31.6" width="1.4" height="1.2" fill="#2e3152" opacity="0.7"/><rect x="43.1" y="31.4" width="1.7" height="1.3" fill="#2e3152" opacity="0.7"/><rect x="48.9" y="31.4" width="0.8" height="1.1" fill="#2e3152" opacity="0.7"/><rect x="50.2" y="31.7" width="1.4" height="1.2" fill="#2e3152" opacity="0.7"/><rect x="52.4" y="31.8" width="1.1" height="1.0" fill="#2e3152" opacity="0.7"/><rect x="53.8" y="31.7" width="1.2" height="1.2" fill="#2e3152" opacity="0.7"/><rect x="14.0" y="36.8" width="0.8" height="1.0" fill="#2e3152" opacity="0.7"/><rect x="15.1" y="36.4" width="0.8" height="1.4" fill="#2e3152" opacity="0.7"/><rect x="18.8" y="36.4" width="1.4" height="1.3" fill="#2e3152" opacity="0.7"/><rect x="21.9" y="36.4" width="0.9" height="1.4" fill="#2e3152" opacity="0.7"/><rect x="23.5" y="36.4" width="1.5" height="1.5" fill="#2e3152" opacity="0.7"/><rect x="27.3" y="36.3" width="1.1" height="1.5" fill="#2e3152" opacity="0.7"/><rect x="31.5" y="36.7" width="1.2" height="1.1" fill="#2e3152" opacity="0.7"/><rect x="22.1" y="41.5" width="0.7" height="1.3" fill="#2e3152" opacity="0.7"/><rect x="24.3" y="41.6" width="1.6" height="1.2" fill="#2e3152" opacity="0.7"/><rect x="26.1" y="41.4" width="0.8" height="1.4" fill="#2e3152" opacity="0.7"/><rect x="27.6" y="41.3" width="1.7" height="1.6" fill="#2e3152" opacity="0.7"/><rect x="29.7" y="41.4" width="1.2" height="1.4" fill="#2e3152" opacity="0.7"/><rect x="31.5" y="41.5" width="1.6" height="1.2" fill="#2e3152" opacity="0.7"/><rect x="33.9" y="41.4" width="1.7" height="1.5" fill="#2e3152" opacity="0.7"/><rect x="36.1" y="41.4" width="1.3" height="1.3" fill="#2e3152" opacity="0.7"/><rect x="40.9" y="41.6" width="1.2" height="1.0" fill="#2e3152" opacity="0.7"/><rect x="44.7" y="41.6" width="1.2" height="1.2" fill="#2e3152" opacity="0.7"/><rect x="46.7" y="41.6" width="1.2" height="1.1" fill="#2e3152" opacity="0.7"/><rect x="49.7" y="41.4" width="0.8" height="1.4" fill="#2e3152" opacity="0.7"/><rect x="51.0" y="41.3" width="1.3" height="1.4" fill="#2e3152" opacity="0.7"/><rect x="52.9" y="41.4" width="0.9" height="1.3" fill="#2e3152" opacity="0.7"/><rect x="54.2" y="41.4" width="1.1" height="1.1" fill="#2e3152" opacity="0.7"/><rect x="56.0" y="41.4" width="1.4" height="1.5" fill="#2e3152" opacity="0.7"/><rect x="59.8" y="41.7" width="1.7" height="1.2" fill="#2e3152" opacity="0.7"/><rect x="21.2" y="45.6" width="1.5" height="1.2" fill="#2e3152" opacity="0.7"/><rect x="23.0" y="45.4" width="0.8" height="1.5" fill="#2e3152" opacity="0.7"/><rect x="25.9" y="45.4" width="1.4" height="1.0" fill="#2e3152" opacity="0.7"/><rect x="27.5" y="45.3" width="1.3" height="1.3" fill="#2e3152" opacity="0.7"/><rect x="30.8" y="45.9" width="1.7" height="1.0" fill="#2e3152" opacity="0.7"/><rect x="33.1" y="45.5" width="1.5" height="1.3" fill="#2e3152" opacity="0.7"/><rect x="35.1" y="45.5" width="1.3" height="1.4" fill="#2e3152" opacity="0.7"/><rect x="38.4" y="45.3" width="0.8" height="1.3" fill="#2e3152" opacity="0.7"/><rect x="42.4" y="45.4" width="1.4" height="1.3" fill="#2e3152" opacity="0.7"/><rect x="44.6" y="45.3" width="1.6" height="1.5" fill="#2e3152" opacity="0.7"/><rect x="46.9" y="45.4" width="1.6" height="1.5" fill="#2e3152" opacity="0.7"/><rect x="51.2" y="45.5" width="1.5" height="1.2" fill="#2e3152" opacity="0.7"/><rect x="52.9" y="45.4" width="1.0" height="1.4" fill="#2e3152" opacity="0.7"/><rect x="54.8" y="45.4" width="1.4" height="1.4" fill="#2e3152" opacity="0.7"/><rect x="60.8" y="45.3" width="0.6" height="1.4" fill="#2e3152" opacity="0.7"/><rect x="61.9" y="45.3" width="0.7" height="1.2" fill="#2e3152" opacity="0.7"/><rect x="62.9" y="45.6" width="1.1" height="1.3" fill="#2e3152" opacity="0.7"/><rect x="83.0" y="41.3" width="1.8" height="1.5" fill="#2e3152" opacity="0.7"/><rect x="85.4" y="41.3" width="1.5" height="1.6" fill="#2e3152" opacity="0.7"/><rect x="87.5" y="41.3" width="0.8" height="1.4" fill="#2e3152" opacity="0.7"/><rect x="89.1" y="41.4" width="1.1" height="1.3" fill="#2e3152" opacity="0.7"/><rect x="90.6" y="41.6" width="1.4" height="1.1" fill="#2e3152" opacity="0.7"/><rect x="92.4" y="41.4" width="0.6" height="1.0" fill="#2e3152" opacity="0.7"/><rect x="89.6" y="45.4" width="1.3" height="1.4" fill="#2e3152" opacity="0.7"/><rect x="91.3" y="45.5" width="0.7" height="1.0" fill="#2e3152" opacity="0.7"/><rect x="92.6" y="45.4" width="1.1" height="1.3" fill="#2e3152" opacity="0.7"/><rect x="11.0" y="54.9" width="1.5" height="1.3" fill="#2e3152" opacity="0.7"/><rect x="13.2" y="54.7" width="1.3" height="1.4" fill="#2e3152" opacity="0.7"/><rect x="15.2" y="54.3" width="1.3" height="1.8" fill="#2e3152" opacity="0.7"/><rect x="19.5" y="54.5" width="0.6" height="1.4" fill="#2e3152" opacity="0.7"/><rect x="20.7" y="54.4" width="0.7" height="1.3" fill="#2e3152" opacity="0.7"/><rect x="22.1" y="54.5" width="1.3" height="1.5" fill="#2e3152" opacity="0.7"/><rect x="25.5" y="54.4" width="0.7" height="1.8" fill="#2e3152" opacity="0.7"/><rect x="27.0" y="54.8" width="0.9" height="1.4" fill="#2e3152" opacity="0.7"/><rect x="18.9" y="58.8" width="0.1" height="1.0" fill="#2e3152" opacity="0.7"/><rect x="84.0" y="54.6" width="0.7" height="1.6" fill="#2e3152" opacity="0.7"/><rect x="85.1" y="54.7" width="1.5" height="1.4" fill="#2e3152" opacity="0.7"/><rect x="88.5" y="54.7" width="0.9" height="1.5" fill="#2e3152" opacity="0.7"/><rect x="95.4" y="54.3" width="1.0" height="1.9" fill="#2e3152" opacity="0.7"/><rect x="96.7" y="54.5" width="0.3" height="1.5" fill="#2e3152" opacity="0.7"/><rect x="84.0" y="58.4" width="0.8" height="1.5" fill="#2e3152" opacity="0.7"/><rect x="85.6" y="58.4" width="1.3" height="1.4" fill="#2e3152" opacity="0.7"/><rect x="87.3" y="58.5" width="0.6" height="1.3" fill="#2e3152" opacity="0.7"/><rect x="93.5" y="58.7" width="0.7" height="1.1" fill="#2e3152" opacity="0.7"/><rect x="94.8" y="58.4" width="0.9" height="1.4" fill="#2e3152" opacity="0.7"/><rect x="96.4" y="58.3" width="0.6" height="1.6" fill="#2e3152" opacity="0.7"/><rect x="12.9" y="67.4" width="1.7" height="1.9" fill="#2e3152" opacity="0.7"/><rect x="17.8" y="67.6" width="1.7" height="1.6" fill="#2e3152" opacity="0.7"/><rect x="20.3" y="67.8" width="1.1" height="1.3" fill="#2e3152" opacity="0.7"/><rect x="22.3" y="67.6" width="0.7" height="1.4" fill="#2e3152" opacity="0.7"/><rect x="84.0" y="67.4" width="1.8" height="1.4" fill="#2e3152" opacity="0.7"/><rect x="86.4" y="67.6" width="1.5" height="1.2" fill="#2e3152" opacity="0.7"/><rect x="88.6" y="67.4" width="1.7" height="1.3" fill="#2e3152" opacity="0.7"/><rect x="92.1" y="67.4" width="0.9" height="1.4" fill="#2e3152" opacity="0.7"/><rect x="93.7" y="67.4" width="1.0" height="1.9" fill="#2e3152" opacity="0.7"/><rect x="2.0" y="74.3" width="0.9" height="2.0" fill="#2e3152" opacity="0.7"/><rect x="3.3" y="74.9" width="1.2" height="1.4" fill="#2e3152" opacity="0.7"/><rect x="5.2" y="74.5" width="0.9" height="1.6" fill="#2e3152" opacity="0.7"/><rect x="6.9" y="74.4" width="1.5" height="1.3" fill="#2e3152" opacity="0.7"/><rect x="12.0" y="74.3" width="1.2" height="1.8" fill="#2e3152" opacity="0.7"/><rect x="17.1" y="74.3" width="1.2" height="2.0" fill="#2e3152" opacity="0.7"/><rect x="20.5" y="74.3" width="1.7" height="1.9" fill="#2e3152" opacity="0.7"/><rect x="22.8" y="74.3" width="1.2" height="1.9" fill="#2e3152" opacity="0.7"/><rect x="24.4" y="74.6" width="0.7" height="1.6" fill="#2e3152" opacity="0.7"/><rect x="25.6" y="74.5" width="1.4" height="1.5" fill="#2e3152" opacity="0.7"/><rect x="27.9" y="74.6" width="1.6" height="1.2" fill="#2e3152" opacity="0.7"/><rect x="30.2" y="74.3" width="0.9" height="1.6" fill="#2e3152" opacity="0.7"/><rect x="31.9" y="74.4" width="1.6" height="1.7" fill="#2e3152" opacity="0.7"/><rect x="34.0" y="74.5" width="1.2" height="1.5" fill="#2e3152" opacity="0.7"/><rect x="35.9" y="74.4" width="0.9" height="1.8" fill="#2e3152" opacity="0.7"/><rect x="39.3" y="74.4" width="1.6" height="1.3" fill="#2e3152" opacity="0.7"/><rect x="41.6" y="74.7" width="1.4" height="1.5" fill="#2e3152" opacity="0.7"/><rect x="43.7" y="74.4" width="0.7" height="1.3" fill="#2e3152" opacity="0.7"/><rect x="46.1" y="74.5" width="1.2" height="1.8" fill="#2e3152" opacity="0.7"/><rect x="47.7" y="74.6" width="1.0" height="1.2" fill="#2e3152" opacity="0.7"/><rect x="86.4" y="74.5" width="1.3" height="1.5" fill="#2e3152" opacity="0.7"/><rect x="88.4" y="74.6" width="0.7" height="1.6" fill="#2e3152" opacity="0.7"/><rect x="89.9" y="74.5" width="1.3" height="1.8" fill="#2e3152" opacity="0.7"/><rect x="91.8" y="74.8" width="1.0" height="1.3" fill="#2e3152" opacity="0.7"/><rect x="8.0" y="89.6" width="0.8" height="1.1" fill="#2e3152" opacity="0.7"/><rect x="11.0" y="89.3" width="1.2" height="1.6" fill="#2e3152" opacity="0.7"/><rect x="13.0" y="89.4" width="1.0" height="1.3" fill="#2e3152" opacity="0.7"/><rect x="10.6" y="98.5" width="1.7" height="1.5" fill="#2e3152" opacity="0.7"/><rect x="12.6" y="98.4" width="1.3" height="1.1" fill="#2e3152" opacity="0.7"/><rect x="14.7" y="98.6" width="1.3" height="1.3" fill="#2e3152" opacity="0.7"/><rect x="44.0" y="124.8" width="1.1" height="2.2" fill="#2e3152" opacity="0.7"/><rect x="45.4" y="125.1" width="1.2" height="1.8" fill="#2e3152" opacity="0.7"/><rect x="46.9" y="124.9" width="1.2" height="2.0" fill="#2e3152" opacity="0.7"/><rect x="48.8" y="125.6" width="0.6" height="1.6" fill="#2e3152" opacity="0.7"/><rect x="50.0" y="125.0" width="1.2" height="2.0" fill="#2e3152" opacity="0.7"/><rect x="51.9" y="124.8" width="1.5" height="2.4" fill="#2e3152" opacity="0.7"/><rect x="54.2" y="125.2" width="1.1" height="2.0" fill="#2e3152" opacity="0.7"/><rect x="55.9" y="124.8" width="1.2" height="2.3" fill="#2e3152" opacity="0.7"/><rect x="61.3" y="125.2" width="1.3" height="1.6" fill="#2e3152" opacity="0.7"/><rect x="63.1" y="125.0" width="1.1" height="2.1" fill="#2e3152" opacity="0.7"/><rect x="64.6" y="124.9" width="0.4" height="1.7" fill="#2e3152" opacity="0.7"/><rect x="7.0" y="136.3" width="1.8" height="2.0" fill="#2e3152" opacity="0.7"/><rect x="11.0" y="136.3" width="1.7" height="1.9" fill="#2e3152" opacity="0.7"/><rect x="13.2" y="136.5" width="1.7" height="1.5" fill="#2e3152" opacity="0.7"/><rect x="16.9" y="136.3" width="1.1" height="1.7" fill="#2e3152" opacity="0.7"/><rect x="18.2" y="136.7" width="1.7" height="1.7" fill="#2e3152" opacity="0.7"/><rect x="20.7" y="136.8" width="1.2" height="1.5" fill="#2e3152" opacity="0.7"/><rect x="24.0" y="136.4" width="1.2" height="2.0" fill="#2e3152" opacity="0.7"/><rect x="25.5" y="136.3" width="1.4" height="2.0" fill="#2e3152" opacity="0.7"/><rect x="27.1" y="136.4" width="1.5" height="2.0" fill="#2e3152" opacity="0.7"/><rect x="29.3" y="136.3" width="0.8" height="2.0" fill="#2e3152" opacity="0.7"/><rect x="30.3" y="136.3" width="0.9" height="1.8" fill="#2e3152" opacity="0.7"/><rect x="31.5" y="136.4" width="0.9" height="1.9" fill="#2e3152" opacity="0.7"/><rect x="33.1" y="136.5" width="1.7" height="1.4" fill="#2e3152" opacity="0.7"/><rect x="35.6" y="136.3" width="1.4" height="1.8" fill="#2e3152" opacity="0.7"/><rect x="37.9" y="136.3" width="1.1" height="1.7" fill="#2e3152" opacity="0.7"/><rect x="39.6" y="136.3" width="0.9" height="1.9" fill="#2e3152" opacity="0.7"/><rect x="41.0" y="136.6" width="1.5" height="1.5" fill="#2e3152" opacity="0.7"/><rect x="46.3" y="136.7" width="1.7" height="1.4" fill="#2e3152" opacity="0.7"/><rect x="48.7" y="136.4" width="1.0" height="1.9" fill="#2e3152" opacity="0.7"/><rect x="50.3" y="136.7" width="1.6" height="1.7" fill="#2e3152" opacity="0.7"/><rect x="52.2" y="136.4" width="1.5" height="1.8" fill="#2e3152" opacity="0.7"/><rect x="56.5" y="136.7" width="0.9" height="1.4" fill="#2e3152" opacity="0.7"/><rect x="58.0" y="136.4" width="0.6" height="1.8" fill="#2e3152" opacity="0.7"/><rect x="59.4" y="136.7" width="0.8" height="1.3" fill="#2e3152" opacity="0.7"/><rect x="60.7" y="136.3" width="1.1" height="1.9" fill="#2e3152" opacity="0.7"/><rect x="62.7" y="136.3" width="1.3" height="1.9" fill="#2e3152" opacity="0.7"/><rect x="64.3" y="136.7" width="1.0" height="1.5" fill="#2e3152" opacity="0.7"/><rect x="65.8" y="136.9" width="0.9" height="1.3" fill="#2e3152" opacity="0.7"/><rect x="67.1" y="136.5" width="0.9" height="1.8" fill="#2e3152" opacity="0.7"/><rect x="68.7" y="136.4" width="0.7" height="1.6" fill="#2e3152" opacity="0.7"/><rect x="70.3" y="136.5" width="0.7" height="1.9" fill="#2e3152" opacity="0.7"/><rect x="73.8" y="136.3" width="1.1" height="1.6" fill="#2e3152" opacity="0.7"/><rect x="77.6" y="136.4" width="0.9" height="1.7" fill="#2e3152" opacity="0.7"/><rect x="79.0" y="136.8" width="1.7" height="1.5" fill="#2e3152" opacity="0.7"/><rect x="81.3" y="136.3" width="0.6" height="1.8" fill="#2e3152" opacity="0.7"/><rect x="84.5" y="136.7" width="1.7" height="1.6" fill="#2e3152" opacity="0.7"/><rect x="86.6" y="136.4" width="1.5" height="1.5" fill="#2e3152" opacity="0.7"/><rect x="88.7" y="136.6" width="0.8" height="1.4" fill="#2e3152" opacity="0.7"/><rect x="91.8" y="136.3" width="1.6" height="1.6" fill="#2e3152" opacity="0.7"/><rect x="94.1" y="136.4" width="1.0" height="1.3" fill="#2e3152" opacity="0.7"/><rect x="97.3" y="137.0" width="0.9" height="1.4" fill="#2e3152" opacity="0.7"/><rect x="6.0" y="142.8" width="0.6" height="1.6" fill="#2e3152" opacity="0.7"/><rect x="9.0" y="142.8" width="0.7" height="1.4" fill="#2e3152" opacity="0.7"/><rect x="10.0" y="143.0" width="1.3" height="1.5" fill="#2e3152" opacity="0.7"/><rect x="13.0" y="142.9" width="1.5" height="1.4" fill="#2e3152" opacity="0.7"/><rect x="14.9" y="143.2" width="1.5" height="1.6" fill="#2e3152" opacity="0.7"/><rect x="16.7" y="142.8" width="1.0" height="1.4" fill="#2e3152" opacity="0.7"/><rect x="17.9" y="143.0" width="1.4" height="1.9" fill="#2e3152" opacity="0.7"/><rect x="21.4" y="142.8" width="1.4" height="2.0" fill="#2e3152" opacity="0.7"/><rect x="23.2" y="143.0" width="1.4" height="1.6" fill="#2e3152" opacity="0.7"/><rect x="24.8" y="142.9" width="1.1" height="1.7" fill="#2e3152" opacity="0.7"/><rect x="26.1" y="143.3" width="1.1" height="1.4" fill="#2e3152" opacity="0.7"/><rect x="27.6" y="142.9" width="0.7" height="1.6" fill="#2e3152" opacity="0.7"/><rect x="28.9" y="142.8" width="1.4" height="1.8" fill="#2e3152" opacity="0.7"/><rect x="30.8" y="142.8" width="1.0" height="1.6" fill="#2e3152" opacity="0.7"/><rect x="32.4" y="142.9" width="1.3" height="1.5" fill="#2e3152" opacity="0.7"/><rect x="35.5" y="143.1" width="0.9" height="1.4" fill="#2e3152" opacity="0.7"/><rect x="37.1" y="143.1" width="1.7" height="1.7" fill="#2e3152" opacity="0.7"/><rect x="39.6" y="143.0" width="1.4" height="1.6" fill="#2e3152" opacity="0.7"/><rect x="43.4" y="143.2" width="1.7" height="1.4" fill="#2e3152" opacity="0.7"/><rect x="46.8" y="142.9" width="0.8" height="1.8" fill="#2e3152" opacity="0.7"/><rect x="47.9" y="143.1" width="1.3" height="1.4" fill="#2e3152" opacity="0.7"/><rect x="49.8" y="143.1" width="1.3" height="1.7" fill="#2e3152" opacity="0.7"/><rect x="51.9" y="142.8" width="1.0" height="2.0" fill="#2e3152" opacity="0.7"/><rect x="53.6" y="142.8" width="1.4" height="2.0" fill="#2e3152" opacity="0.7"/><rect x="55.3" y="142.9" width="1.3" height="1.7" fill="#2e3152" opacity="0.7"/><rect x="57.1" y="143.0" width="1.5" height="1.4" fill="#2e3152" opacity="0.7"/><rect x="59.0" y="142.8" width="0.8" height="1.4" fill="#2e3152" opacity="0.7"/><rect x="64.4" y="143.1" width="0.7" height="1.7" fill="#2e3152" opacity="0.7"/><rect x="65.5" y="142.9" width="1.5" height="1.8" fill="#2e3152" opacity="0.7"/><rect x="69.7" y="143.0" width="1.3" height="1.8" fill="#2e3152" opacity="0.7"/><rect x="71.8" y="143.1" width="1.6" height="1.6" fill="#2e3152" opacity="0.7"/><rect x="73.7" y="143.1" width="0.8" height="1.7" fill="#2e3152" opacity="0.7"/><rect x="75.4" y="143.1" width="0.8" height="1.6" fill="#2e3152" opacity="0.7"/><rect x="78.6" y="143.0" width="1.5" height="1.3" fill="#2e3152" opacity="0.7"/><rect x="80.7" y="142.8" width="1.8" height="1.5" fill="#2e3152" opacity="0.7"/><rect x="83.1" y="143.3" width="1.2" height="1.5" fill="#2e3152" opacity="0.7"/><rect x="85.1" y="143.0" width="0.9" height="1.8" fill="#2e3152" opacity="0.7"/><rect x="86.9" y="143.1" width="1.1" height="1.7" fill="#2e3152" opacity="0.7"/><rect x="88.3" y="142.8" width="0.8" height="2.0" fill="#2e3152" opacity="0.7"/><rect x="89.6" y="143.3" width="0.7" height="1.3" fill="#2e3152" opacity="0.7"/><rect x="90.7" y="143.1" width="1.4" height="1.4" fill="#2e3152" opacity="0.7"/><rect x="92.5" y="143.5" width="0.9" height="1.3" fill="#2e3152" opacity="0.7"/><rect x="93.8" y="143.2" width="0.7" height="1.7" fill="#2e3152" opacity="0.7"/><rect x="94.8" y="143.2" width="1.6" height="1.6" fill="#2e3152" opacity="0.7"/><rect x="97.0" y="143.0" width="0.7" height="1.8" fill="#2e3152" opacity="0.7"/><rect x="1.0" y="159.4" width="0.8" height="1.9" fill="#2e3152" opacity="0.7"/><rect x="3.5" y="160.1" width="1.2" height="1.9" fill="#2e3152" opacity="0.7"/><rect x="6.9" y="159.5" width="1.5" height="2.6" fill="#2e3152" opacity="0.7"/><rect x="9.1" y="159.3" width="1.8" height="2.7" fill="#2e3152" opacity="0.7"/><rect x="12.7" y="159.6" width="0.3" height="2.1" fill="#2e3152" opacity="0.7"/><rect x="31.0" y="158.5" width="1.6" height="2.7" fill="#2e3152" opacity="0.7"/><rect x="33.0" y="158.7" width="1.7" height="2.0" fill="#2e3152" opacity="0.7"/><rect x="36.8" y="158.5" width="1.4" height="2.1" fill="#2e3152" opacity="0.7"/><rect x="38.7" y="158.6" width="1.1" height="2.6" fill="#2e3152" opacity="0.7"/><rect x="41.8" y="158.3" width="1.7" height="2.9" fill="#2e3152" opacity="0.7"/><rect x="47.2" y="158.3" width="0.9" height="3.1" fill="#2e3152" opacity="0.7"/><rect x="49.8" y="158.4" width="1.4" height="2.7" fill="#2e3152" opacity="0.7"/><rect x="4" y="122" width="76" height="0.9" fill="#2e3152" opacity="0.85"/><path d="M25 84.5 L28.5 83 L111 124 V138.5 L104 135 L31 91Z" fill="#2c3c4e"/><path d="M30 85.5 L111 126.5" stroke="#6f8496" stroke-width="0.9" opacity="0.8"/><path d="M25 84.5 L28.5 83 L30 86 L27 87Z" fill="#8f8a88"/><rect x="56.0" y="100.7" width="1" height="1" fill="#7f6f68" opacity="0.4"/><rect x="13.5" y="126.5" width="1" height="1" fill="#e8e0da" opacity="0.4"/><rect x="48.4" y="85.6" width="1" height="1" fill="#e8e0da" opacity="0.4"/><rect x="55.7" y="71.7" width="1" height="1" fill="#7f6f68" opacity="0.4"/><rect x="57.2" y="19.9" width="1" height="1" fill="#e8e0da" opacity="0.4"/><rect x="49.6" y="104.6" width="1" height="1" fill="#7f6f68" opacity="0.4"/><rect x="103.4" y="37.9" width="1" height="1" fill="#e8e0da" opacity="0.4"/><rect x="36.4" y="53.7" width="1" height="1" fill="#b8a8a0" opacity="0.4"/><rect x="20.9" y="85.8" width="1" height="1" fill="#e8e0da" opacity="0.4"/><rect x="5.8" y="161.2" width="1" height="1" fill="#e8e0da" opacity="0.4"/><rect x="12.3" y="43.2" width="1" height="1" fill="#a08e84" opacity="0.4"/><rect x="92.1" y="135.4" width="1" height="1" fill="#b8a8a0" opacity="0.4"/><rect x="110.3" y="24.8" width="1" height="1" fill="#7f6f68" opacity="0.4"/><rect x="79.0" y="52.9" width="1" height="1" fill="#b8a8a0" opacity="0.4"/><rect x="50.4" y="96.0" width="1" height="1" fill="#e8e0da" opacity="0.4"/><rect x="21.8" y="57.2" width="1" height="1" fill="#a08e84" opacity="0.4"/><rect x="8.2" y="98.8" width="1" height="1" fill="#e8e0da" opacity="0.4"/><rect x="97.3" y="25.9" width="1" height="1" fill="#e8e0da" opacity="0.4"/><rect x="94.9" y="131.4" width="1" height="1" fill="#7f6f68" opacity="0.4"/><rect x="88.4" y="37.9" width="1" height="1" fill="#b8a8a0" opacity="0.4"/><rect x="19.8" y="65.4" width="1" height="1" fill="#b8a8a0" opacity="0.4"/><rect x="106.0" y="48.2" width="1" height="1" fill="#b8a8a0" opacity="0.4"/><rect x="13.0" y="42.4" width="1" height="1" fill="#e8e0da" opacity="0.4"/><rect x="3.5" y="118.0" width="1" height="1" fill="#e8e0da" opacity="0.4"/><rect x="100.1" y="25.9" width="1" height="1" fill="#a08e84" opacity="0.4"/><rect x="59.1" y="62.8" width="1" height="1" fill="#a08e84" opacity="0.4"/><rect x="62.2" y="165.2" width="1" height="1" fill="#e8e0da" opacity="0.4"/><rect x="1.7" y="66.3" width="1" height="1" fill="#b8a8a0" opacity="0.4"/><rect x="93.8" y="157.8" width="1" height="1" fill="#a08e84" opacity="0.4"/><rect x="77.1" y="42.3" width="1" height="1" fill="#a08e84" opacity="0.4"/><rect x="19.0" y="102.7" width="1" height="1" fill="#7f6f68" opacity="0.4"/><rect x="14.3" y="32.5" width="1" height="1" fill="#b8a8a0" opacity="0.4"/><rect x="67.7" y="69.0" width="1" height="1" fill="#a08e84" opacity="0.4"/><rect x="0.9" y="25.4" width="1" height="1" fill="#a08e84" opacity="0.4"/><rect x="81.7" y="69.4" width="1" height="1" fill="#b8a8a0" opacity="0.4"/><rect x="85.4" y="45.2" width="1" height="1" fill="#7f6f68" opacity="0.4"/><rect x="70.1" y="79.1" width="1" height="1" fill="#e8e0da" opacity="0.4"/><rect x="31.0" y="35.2" width="1" height="1" fill="#7f6f68" opacity="0.4"/><rect x="104.5" y="67.3" width="1" height="1" fill="#e8e0da" opacity="0.4"/><rect x="26.1" y="102.5" width="1" height="1" fill="#b8a8a0" opacity="0.4"/><rect x="13.7" y="147.4" width="1" height="1" fill="#7f6f68" opacity="0.4"/><rect x="75.1" y="83.7" width="1" height="1" fill="#e8e0da" opacity="0.4"/><rect x="43.0" y="127.2" width="1" height="1" fill="#a08e84" opacity="0.4"/><rect x="49.8" y="24.7" width="1" height="1" fill="#e8e0da" opacity="0.4"/><rect x="37.0" y="103.2" width="1" height="1" fill="#b8a8a0" opacity="0.4"/><rect x="32.5" y="119.9" width="1" height="1" fill="#a08e84" opacity="0.4"/><rect x="1.7" y="71.6" width="1" height="1" fill="#b8a8a0" opacity="0.4"/><rect x="43.1" y="57.0" width="1" height="1" fill="#7f6f68" opacity="0.4"/><rect x="91.1" y="143.4" width="1" height="1" fill="#7f6f68" opacity="0.4"/><rect x="60.6" y="30.0" width="1" height="1" fill="#a08e84" opacity="0.4"/><rect x="9.8" y="69.9" width="1" height="1" fill="#b8a8a0" opacity="0.4"/><rect x="3.4" y="104.1" width="1" height="1" fill="#b8a8a0" opacity="0.4"/><rect x="109.9" y="138.2" width="1" height="1" fill="#7f6f68" opacity="0.4"/><rect x="74.1" y="38.5" width="1" height="1" fill="#7f6f68" opacity="0.4"/><rect x="40.2" y="85.2" width="1" height="1" fill="#b8a8a0" opacity="0.4"/><rect x="53.2" y="113.4" width="1" height="1" fill="#7f6f68" opacity="0.4"/><rect x="107.7" y="162.4" width="1" height="1" fill="#e8e0da" opacity="0.4"/><rect x="48.1" y="49.7" width="1" height="1" fill="#7f6f68" opacity="0.4"/><rect x="110.7" y="25.0" width="1" height="1" fill="#e8e0da" opacity="0.4"/><rect x="72.8" y="134.3" width="1" height="1" fill="#a08e84" opacity="0.4"/><rect x="57.5" y="103.2" width="1" height="1" fill="#e8e0da" opacity="0.4"/><rect x="41.1" y="36.6" width="1" height="1" fill="#e8e0da" opacity="0.4"/><rect x="10.6" y="135.0" width="1" height="1" fill="#7f6f68" opacity="0.4"/><rect x="18.5" y="113.0" width="1" height="1" fill="#b8a8a0" opacity="0.4"/><rect x="73.6" y="161.5" width="1" height="1" fill="#e8e0da" opacity="0.4"/><rect x="86.1" y="33.1" width="1" height="1" fill="#e8e0da" opacity="0.4"/><rect x="17.3" y="71.0" width="1" height="1" fill="#b8a8a0" opacity="0.4"/><rect x="104.8" y="150.3" width="1" height="1" fill="#7f6f68" opacity="0.4"/><rect x="12.1" y="77.4" width="1" height="1" fill="#7f6f68" opacity="0.4"/><rect x="86.2" y="29.2" width="1" height="1" fill="#7f6f68" opacity="0.4"/><rect x="7.5" y="50.9" width="1" height="1" fill="#7f6f68" opacity="0.4"/><rect x="56.6" y="61.6" width="1" height="1" fill="#b8a8a0" opacity="0.4"/><rect x="86.3" y="52.3" width="1" height="1" fill="#e8e0da" opacity="0.4"/><rect x="51.8" y="164.5" width="1" height="1" fill="#e8e0da" opacity="0.4"/><rect x="18.9" y="30.8" width="1" height="1" fill="#a08e84" opacity="0.4"/><rect x="94.4" y="30.8" width="1" height="1" fill="#a08e84" opacity="0.4"/><rect x="16.0" y="100.2" width="1" height="1" fill="#a08e84" opacity="0.4"/><rect x="45.1" y="107.4" width="1" height="1" fill="#7f6f68" opacity="0.4"/><rect x="45.9" y="16.6" width="1" height="1" fill="#a08e84" opacity="0.4"/><rect x="88.5" y="31.5" width="1" height="1" fill="#e8e0da" opacity="0.4"/><rect x="17.4" y="95.2" width="1" height="1" fill="#7f6f68" opacity="0.4"/><rect x="45.0" y="89.5" width="1" height="1" fill="#7f6f68" opacity="0.4"/><rect x="43.3" y="60.2" width="1" height="1" fill="#a08e84" opacity="0.4"/><rect x="29.0" y="31.9" width="1" height="1" fill="#e8e0da" opacity="0.4"/><rect x="36.5" y="88.8" width="1" height="1" fill="#a08e84" opacity="0.4"/><rect x="63.0" y="90.6" width="1" height="1" fill="#7f6f68" opacity="0.4"/><rect x="43.8" y="60.2" width="1" height="1" fill="#b8a8a0" opacity="0.4"/><rect x="24.4" y="27.8" width="1" height="1" fill="#e8e0da" opacity="0.4"/><rect x="42.7" y="113.0" width="1" height="1" fill="#b8a8a0" opacity="0.4"/><rect x="50.0" y="22.5" width="1" height="1" fill="#7f6f68" opacity="0.4"/><rect x="18.1" y="72.7" width="1" height="1" fill="#b8a8a0" opacity="0.4"/><rect x="44.4" y="48.6" width="1" height="1" fill="#7f6f68" opacity="0.4"/><rect x="79.2" y="19.9" width="1" height="1" fill="#b8a8a0" opacity="0.4"/><rect x="53.7" y="49.8" width="1" height="1" fill="#e8e0da" opacity="0.4"/><rect x="81.4" y="71.4" width="1" height="1" fill="#7f6f68" opacity="0.4"/><rect x="0.8" y="104.6" width="1" height="1" fill="#a08e84" opacity="0.4"/><rect x="40.6" y="105.3" width="1" height="1" fill="#b8a8a0" opacity="0.4"/><rect x="93.2" y="46.7" width="1" height="1" fill="#7f6f68" opacity="0.4"/><rect x="35.0" y="90.1" width="1" height="1" fill="#b8a8a0" opacity="0.4"/><rect x="5.9" y="29.0" width="1" height="1" fill="#b8a8a0" opacity="0.4"/><rect x="65.4" y="137.0" width="1" height="1" fill="#e8e0da" opacity="0.4"/><rect x="71.8" y="71.4" width="1" height="1" fill="#7f6f68" opacity="0.4"/><rect x="31.7" y="117.7" width="1" height="1" fill="#7f6f68" opacity="0.4"/><rect x="44.0" y="49.0" width="1" height="1" fill="#b8a8a0" opacity="0.4"/><rect x="36.4" y="62.9" width="1" height="1" fill="#a08e84" opacity="0.4"/><rect x="87.5" y="112.0" width="1" height="1" fill="#7f6f68" opacity="0.4"/><rect x="111.0" y="89.0" width="1" height="1" fill="#e8e0da" opacity="0.4"/><rect x="69.3" y="98.4" width="1" height="1" fill="#b8a8a0" opacity="0.4"/><rect x="70.9" y="18.4" width="1" height="1" fill="#a08e84" opacity="0.4"/><rect x="64.4" y="15.8" width="1" height="1" fill="#e8e0da" opacity="0.4"/><rect x="46.4" y="117.6" width="1" height="1" fill="#7f6f68" opacity="0.4"/><rect x="19.1" y="27.6" width="1" height="1" fill="#a08e84" opacity="0.4"/><rect x="41.9" y="82.6" width="1" height="1" fill="#e8e0da" opacity="0.4"/><rect x="88.9" y="82.2" width="1" height="1" fill="#7f6f68" opacity="0.4"/><rect x="92.7" y="159.4" width="1" height="1" fill="#b8a8a0" opacity="0.4"/><rect x="74.0" y="97.8" width="1" height="1" fill="#7f6f68" opacity="0.4"/><rect x="78.0" y="75.0" width="1" height="1" fill="#7f6f68" opacity="0.4"/><rect x="102.4" y="46.9" width="1" height="1" fill="#e8e0da" opacity="0.4"/><rect x="36.0" y="36.1" width="1" height="1" fill="#7f6f68" opacity="0.4"/><rect x="17.2" y="56.4" width="1" height="1" fill="#e8e0da" opacity="0.4"/><rect x="3.5" y="80.2" width="1" height="1" fill="#e8e0da" opacity="0.4"/><rect x="22.2" y="121.1" width="1" height="1" fill="#e8e0da" opacity="0.4"/><rect x="54.8" y="119.1" width="1" height="1" fill="#e8e0da" opacity="0.4"/><rect x="56.8" y="87.7" width="1" height="1" fill="#a08e84" opacity="0.4"/><rect x="85.8" y="63.9" width="1" height="1" fill="#7f6f68" opacity="0.4"/><rect x="38.4" y="39.7" width="1" height="1" fill="#b8a8a0" opacity="0.4"/><rect x="41.8" y="136.2" width="1" height="1" fill="#e8e0da" opacity="0.4"/><rect x="50.3" y="103.9" width="1" height="1" fill="#e8e0da" opacity="0.4"/><rect x="39.8" y="103.2" width="1" height="1" fill="#e8e0da" opacity="0.4"/><rect x="78.1" y="74.8" width="1" height="1" fill="#7f6f68" opacity="0.4"/><rect x="77.4" y="50.3" width="1" height="1" fill="#b8a8a0" opacity="0.4"/><rect x="38.9" y="77.0" width="1" height="1" fill="#7f6f68" opacity="0.4"/><rect x="28.5" y="24.7" width="1" height="1" fill="#b8a8a0" opacity="0.4"/><rect x="41.9" y="123.2" width="1" height="1" fill="#e8e0da" opacity="0.4"/><rect x="100.8" y="24.9" width="1" height="1" fill="#a08e84" opacity="0.4"/><rect x="108.3" y="152.4" width="1" height="1" fill="#e8e0da" opacity="0.4"/><rect x="42.9" y="32.7" width="1" height="1" fill="#a08e84" opacity="0.4"/><rect x="83.6" y="30.4" width="1" height="1" fill="#b8a8a0" opacity="0.4"/><rect x="55.6" y="37.7" width="1" height="1" fill="#b8a8a0" opacity="0.4"/><rect x="63.1" y="98.3" width="1" height="1" fill="#b8a8a0" opacity="0.4"/><rect x="54.3" y="82.5" width="1" height="1" fill="#b8a8a0" opacity="0.4"/><rect x="89.4" y="29.7" width="1" height="1" fill="#a08e84" opacity="0.4"/><rect x="24.3" y="45.1" width="1" height="1" fill="#b8a8a0" opacity="0.4"/><rect x="13.4" y="130.5" width="1" height="1" fill="#a08e84" opacity="0.4"/><rect x="99.8" y="154.5" width="1" height="1" fill="#b8a8a0" opacity="0.4"/><rect x="40.4" y="158.6" width="1" height="1" fill="#b8a8a0" opacity="0.4"/><rect x="67.5" y="140.4" width="1" height="1" fill="#b8a8a0" opacity="0.4"/><rect x="12.3" y="69.1" width="1" height="1" fill="#a08e84" opacity="0.4"/><rect x="59.6" y="53.3" width="1" height="1" fill="#b8a8a0" opacity="0.4"/><rect x="31.8" y="99.7" width="1" height="1" fill="#b8a8a0" opacity="0.4"/><rect x="53.8" y="56.2" width="1" height="1" fill="#b8a8a0" opacity="0.4"/><rect x="88.1" y="157.5" width="1" height="1" fill="#a08e84" opacity="0.4"/><rect x="97.0" y="39.2" width="1" height="1" fill="#a08e84" opacity="0.4"/><rect x="67.6" y="97.1" width="1" height="1" fill="#a08e84" opacity="0.4"/><rect x="59.3" y="114.7" width="1" height="1" fill="#b8a8a0" opacity="0.4"/><rect x="34.0" y="79.5" width="1" height="1" fill="#b8a8a0" opacity="0.4"/><rect x="72.4" y="96.9" width="1" height="1" fill="#e8e0da" opacity="0.4"/><rect x="50.3" y="70.9" width="1" height="1" fill="#a08e84" opacity="0.4"/><rect x="104.7" y="91.4" width="1" height="1" fill="#b8a8a0" opacity="0.4"/><rect x="98.3" y="26.4" width="1" height="1" fill="#7f6f68" opacity="0.4"/><rect x="63.8" y="154.9" width="1" height="1" fill="#7f6f68" opacity="0.4"/><rect x="33.6" y="15.4" width="1" height="1" fill="#7f6f68" opacity="0.4"/><rect x="21.7" y="70.5" width="1" height="1" fill="#b8a8a0" opacity="0.4"/><rect x="96.8" y="24.3" width="1" height="1" fill="#7f6f68" opacity="0.4"/><rect x="15.6" y="77.4" width="1" height="1" fill="#a08e84" opacity="0.4"/><rect x="109.1" y="118.5" width="1" height="1" fill="#7f6f68" opacity="0.4"/><rect x="48.5" y="117.6" width="1" height="1" fill="#7f6f68" opacity="0.4"/><rect x="58.5" y="68.5" width="1" height="1" fill="#e8e0da" opacity="0.4"/><rect x="102.7" y="147.8" width="1" height="1" fill="#7f6f68" opacity="0.4"/><rect x="46.3" y="88.4" width="1" height="1" fill="#7f6f68" opacity="0.4"/><rect x="77.0" y="19.5" width="1" height="1" fill="#7f6f68" opacity="0.4"/><rect x="15.0" y="60.3" width="1" height="1" fill="#b8a8a0" opacity="0.4"/><rect x="24.4" y="56.1" width="1" height="1" fill="#a08e84" opacity="0.4"/><rect x="108.3" y="158.4" width="1" height="1" fill="#a08e84" opacity="0.4"/><rect x="95.3" y="156.2" width="1" height="1" fill="#7f6f68" opacity="0.4"/><rect x="67.6" y="135.1" width="1" height="1" fill="#b8a8a0" opacity="0.4"/><rect x="103.6" y="28.0" width="1" height="1" fill="#a08e84" opacity="0.4"/><rect x="106.5" y="19.8" width="1" height="1" fill="#7f6f68" opacity="0.4"/><rect x="33.1" y="60.4" width="1" height="1" fill="#7f6f68" opacity="0.4"/><rect x="46.0" y="37.5" width="1" height="1" fill="#a08e84" opacity="0.4"/><rect x="76.4" y="93.5" width="1" height="1" fill="#7f6f68" opacity="0.4"/><rect x="0.1" y="25.3" width="1" height="1" fill="#a08e84" opacity="0.4"/><rect x="108.3" y="140.8" width="1" height="1" fill="#e8e0da" opacity="0.4"/><rect x="38.9" y="48.1" width="1" height="1" fill="#e8e0da" opacity="0.4"/><rect x="1.7" y="131.3" width="1" height="1" fill="#b8a8a0" opacity="0.4"/><rect x="5.3" y="70.8" width="1" height="1" fill="#b8a8a0" opacity="0.4"/><rect x="57.8" y="68.1" width="1" height="1" fill="#a08e84" opacity="0.4"/><rect x="103.3" y="77.5" width="1" height="1" fill="#a08e84" opacity="0.4"/><rect x="16.6" y="53.3" width="1" height="1" fill="#e8e0da" opacity="0.4"/><rect x="24.5" y="153.7" width="1" height="1" fill="#a08e84" opacity="0.4"/><rect x="26.4" y="113.8" width="1" height="1" fill="#b8a8a0" opacity="0.4"/><rect x="66.1" y="101.7" width="1" height="1" fill="#7f6f68" opacity="0.4"/><rect x="20.5" y="50.1" width="1" height="1" fill="#b8a8a0" opacity="0.4"/><rect x="56.6" y="126.6" width="1" height="1" fill="#a08e84" opacity="0.4"/><rect x="74.8" y="134.3" width="1" height="1" fill="#7f6f68" opacity="0.4"/><rect x="8.7" y="130.3" width="1" height="1" fill="#a08e84" opacity="0.4"/><rect x="49.0" y="21.8" width="1" height="1" fill="#a08e84" opacity="0.4"/><rect x="41.2" y="68.8" width="1" height="1" fill="#7f6f68" opacity="0.4"/><rect x="109.9" y="73.5" width="1" height="1" fill="#a08e84" opacity="0.4"/><rect x="46.5" y="116.2" width="1" height="1" fill="#a08e84" opacity="0.4"/><rect x="37.5" y="134.4" width="1" height="1" fill="#e8e0da" opacity="0.4"/><rect x="100.6" y="99.9" width="1" height="1" fill="#7f6f68" opacity="0.4"/><rect x="52.8" y="138.6" width="1" height="1" fill="#7f6f68" opacity="0.4"/><rect x="5.8" y="20.0" width="1" height="1" fill="#7f6f68" opacity="0.4"/><rect x="47.2" y="38.9" width="1" height="1" fill="#7f6f68" opacity="0.4"/><rect x="22.8" y="147.6" width="1" height="1" fill="#a08e84" opacity="0.4"/><rect x="103.4" y="66.6" width="1" height="1" fill="#a08e84" opacity="0.4"/><rect x="15.7" y="122.9" width="1" height="1" fill="#7f6f68" opacity="0.4"/><rect x="21.4" y="35.5" width="1" height="1" fill="#a08e84" opacity="0.4"/><rect x="98.0" y="124.7" width="1" height="1" fill="#e8e0da" opacity="0.4"/><rect x="40.8" y="124.7" width="1" height="1" fill="#b8a8a0" opacity="0.4"/><rect x="16.3" y="146.5" width="1" height="1" fill="#a08e84" opacity="0.4"/><rect x="80.5" y="117.1" width="1" height="1" fill="#7f6f68" opacity="0.4"/><rect x="34.1" y="42.6" width="1" height="1" fill="#7f6f68" opacity="0.4"/><rect x="30.4" y="93.8" width="1" height="1" fill="#e8e0da" opacity="0.4"/><rect x="84.6" y="94.5" width="1" height="1" fill="#7f6f68" opacity="0.4"/><rect x="9.0" y="48.7" width="1" height="1" fill="#7f6f68" opacity="0.4"/><rect x="102.3" y="162.3" width="1" height="1" fill="#a08e84" opacity="0.4"/><rect x="17.8" y="64.9" width="1" height="1" fill="#7f6f68" opacity="0.4"/><rect x="32.7" y="134.7" width="1" height="1" fill="#e8e0da" opacity="0.4"/><rect x="38.9" y="165.6" width="1" height="1" fill="#e8e0da" opacity="0.4"/><rect x="51.6" y="43.8" width="1" height="1" fill="#e8e0da" opacity="0.4"/><rect x="108.5" y="18.7" width="1" height="1" fill="#e8e0da" opacity="0.4"/><rect x="60.3" y="57.5" width="1" height="1" fill="#7f6f68" opacity="0.4"/><rect x="19.2" y="126.2" width="1" height="1" fill="#a08e84" opacity="0.4"/><rect x="106.7" y="18.7" width="1" height="1" fill="#e8e0da" opacity="0.4"/><rect x="88.7" y="90.4" width="1" height="1" fill="#7f6f68" opacity="0.4"/><rect x="51.6" y="42.6" width="1" height="1" fill="#7f6f68" opacity="0.4"/><rect x="18.5" y="161.8" width="1" height="1" fill="#b8a8a0" opacity="0.4"/><rect x="28.9" y="108.4" width="1" height="1" fill="#b8a8a0" opacity="0.4"/><rect x="76.3" y="52.9" width="1" height="1" fill="#b8a8a0" opacity="0.4"/><rect x="18.5" y="36.7" width="1" height="1" fill="#e8e0da" opacity="0.4"/><rect x="47.7" y="103.6" width="1" height="1" fill="#b8a8a0" opacity="0.4"/><rect x="36.9" y="153.0" width="1" height="1" fill="#a08e84" opacity="0.4"/><rect x="75.2" y="108.9" width="1" height="1" fill="#a08e84" opacity="0.4"/><rect x="52.0" y="99.8" width="1" height="1" fill="#b8a8a0" opacity="0.4"/><rect x="84.9" y="156.0" width="1" height="1" fill="#b8a8a0" opacity="0.4"/><rect x="26.1" y="103.1" width="1" height="1" fill="#a08e84" opacity="0.4"/><rect x="77.9" y="66.3" width="1" height="1" fill="#7f6f68" opacity="0.4"/><rect x="70.4" y="15.5" width="1" height="1" fill="#e8e0da" opacity="0.4"/><rect x="62.1" y="90.1" width="1" height="1" fill="#e8e0da" opacity="0.4"/><rect x="76.1" y="115.1" width="1" height="1" fill="#e8e0da" opacity="0.4"/><rect x="29.9" y="101.7" width="1" height="1" fill="#e8e0da" opacity="0.4"/><rect x="6.3" y="63.2" width="1" height="1" fill="#e8e0da" opacity="0.4"/><rect x="6.9" y="36.6" width="1" height="1" fill="#7f6f68" opacity="0.4"/><rect x="31.1" y="81.9" width="1" height="1" fill="#7f6f68" opacity="0.4"/><rect x="31.1" y="22.6" width="1" height="1" fill="#e8e0da" opacity="0.4"/><rect x="88.6" y="53.5" width="1" height="1" fill="#7f6f68" opacity="0.4"/><rect x="47.3" y="98.8" width="1" height="1" fill="#7f6f68" opacity="0.4"/><rect x="54.4" y="87.8" width="1" height="1" fill="#b8a8a0" opacity="0.4"/><rect x="35.1" y="115.5" width="1" height="1" fill="#b8a8a0" opacity="0.4"/><rect x="102.8" y="112.6" width="1" height="1" fill="#e8e0da" opacity="0.4"/><rect x="89.2" y="162.8" width="1" height="1" fill="#a08e84" opacity="0.4"/><rect x="76.0" y="135.4" width="1" height="1" fill="#b8a8a0" opacity="0.4"/><rect x="89.9" y="136.0" width="1" height="1" fill="#a08e84" opacity="0.4"/><rect x="13.1" y="86.8" width="1" height="1" fill="#a08e84" opacity="0.4"/><rect x="4.9" y="137.1" width="1" height="1" fill="#b8a8a0" opacity="0.4"/><rect x="52.3" y="112.3" width="1" height="1" fill="#e8e0da" opacity="0.4"/><rect x="103.5" y="112.3" width="1" height="1" fill="#7f6f68" opacity="0.4"/><rect x="108.4" y="39.1" width="1" height="1" fill="#b8a8a0" opacity="0.4"/></g><g clip-path="url(#cr)"><rect x="111" y="0" width="111" height="166" fill="#fff"/><path d="M111 0 H222 V2 L200 2.5 L170 3 L150 4 L128 6 L111 8Z" fill="#000"/><path d="M111 4 L124 3 L122 10 L116 16 L111 18Z" fill="#000"/><g fill="#000"><rect x="203.3" y="11.6" width="1.0" height="0.9"/><rect x="176.3" y="10.3" width="1.7" height="1.3"/><rect x="122.8" y="10.0" width="0.8" height="1.6"/><rect x="183.3" y="10.6" width="1.6" height="1.3"/><rect x="199.7" y="9.0" width="1.2" height="1.1"/><rect x="144.2" y="2.3" width="0.9" height="1.5"/><rect x="132.5" y="9.2" width="1.5" height="1.4"/><rect x="159.5" y="5.5" width="1.0" height="0.9"/><rect x="171.9" y="9.5" width="1.6" height="1.0"/><rect x="198.1" y="12.0" width="1.0" height="1.7"/><rect x="169.2" y="12.6" width="1.5" height="1.0"/><rect x="137.3" y="7.7" width="1.2" height="0.7"/><rect x="192.1" y="7.9" width="1.2" height="1.4"/><rect x="134.5" y="4.2" width="1.3" height="0.9"/><rect x="141.8" y="2.8" width="0.8" height="1.1"/><rect x="160.5" y="12.4" width="1.3" height="1.1"/><rect x="149.2" y="4.6" width="1.2" height="1.7"/><rect x="122.5" y="6.8" width="1.4" height="1.5"/><rect x="163.2" y="9.1" width="1.6" height="1.6"/><rect x="134.6" y="8.0" width="1.7" height="1.2"/><rect x="128.8" y="10.4" width="0.8" height="0.9"/><rect x="162.8" y="5.0" width="1.4" height="1.4"/><rect x="141.0" y="10.4" width="1.3" height="1.4"/><rect x="153.9" y="6.8" width="0.8" height="1.2"/><rect x="200.7" y="11.8" width="0.8" height="0.8"/><rect x="136.3" y="9.6" width="1.1" height="0.8"/><rect x="151.0" y="8.3" width="1.4" height="1.1"/><rect x="172.1" y="9.5" width="1.3" height="0.7"/><rect x="177.8" y="3.4" width="0.8" height="1.2"/><rect x="112.6" y="2.8" width="1.1" height="1.2"/><rect x="120.9" y="12.5" width="1.6" height="1.2"/><rect x="166.3" y="5.5" width="1.7" height="0.8"/><rect x="139.6" y="4.4" width="1.6" height="1.2"/><rect x="149.6" y="6.4" width="1.6" height="1.0"/><rect x="185.4" y="9.8" width="1.1" height="1.1"/><rect x="152.1" y="7.0" width="1.0" height="1.3"/><rect x="149.6" y="5.3" width="1.5" height="1.2"/><rect x="155.5" y="11.7" width="1.2" height="1.1"/><rect x="195.4" y="12.7" width="1.5" height="1.1"/><rect x="174.1" y="10.2" width="1.0" height="1.4"/><rect x="200.3" y="9.2" width="1.4" height="1.1"/><rect x="172.4" y="4.5" width="1.5" height="1.2"/><rect x="203.1" y="5.8" width="1.4" height="0.7"/><rect x="150.1" y="10.4" width="1.0" height="1.3"/><rect x="131.8" y="6.4" width="1.7" height="0.9"/><rect x="196.8" y="2.7" width="1.3" height="1.5"/><rect x="189.7" y="6.3" width="1.3" height="1.4"/><rect x="182.6" y="10.2" width="1.3" height="1.0"/><rect x="177.3" y="8.2" width="1.2" height="1.7"/><rect x="123.8" y="10.6" width="1.0" height="1.4"/><rect x="200.3" y="5.0" width="1.3" height="1.2"/><rect x="157.5" y="3.8" width="1.3" height="1.6"/><rect x="173.3" y="5.2" width="1.5" height="1.1"/><rect x="124.6" y="8.7" width="1.2" height="1.2"/><rect x="204.2" y="8.3" width="1.7" height="1.1"/><rect x="182.3" y="2.8" width="1.0" height="1.4"/><rect x="175.9" y="11.1" width="1.1" height="1.0"/><rect x="144.7" y="7.9" width="0.7" height="1.1"/><rect x="172.8" y="3.6" width="1.0" height="1.6"/><rect x="198.8" y="4.7" width="0.9" height="0.8"/><rect x="119.1" y="10.7" width="1.4" height="1.0"/><rect x="157.0" y="9.6" width="0.7" height="1.5"/><rect x="191.8" y="4.3" width="1.4" height="1.4"/><rect x="142.7" y="11.7" width="0.9" height="1.2"/><rect x="140.5" y="6.9" width="1.5" height="1.3"/><rect x="168.3" y="12.9" width="0.9" height="0.9"/><rect x="169.3" y="3.7" width="1.7" height="1.0"/><rect x="152.4" y="6.7" width="1.5" height="1.6"/><rect x="174.6" y="3.9" width="1.1" height="1.4"/><rect x="131.3" y="11.7" width="1.6" height="0.9"/><rect x="145.2" y="4.5" width="1.4" height="0.7"/><rect x="176.4" y="2.7" width="1.5" height="1.2"/><rect x="165.8" y="3.0" width="0.7" height="1.1"/><rect x="203.6" y="8.6" width="1.6" height="0.8"/><rect x="120.6" y="2.2" width="1.4" height="0.9"/><rect x="136.6" y="9.3" width="1.4" height="1.0"/><rect x="154.9" y="5.2" width="1.3" height="1.1"/><rect x="144.8" y="4.7" width="1.0" height="1.0"/><rect x="112.5" y="5.4" width="1.3" height="1.0"/><rect x="121.6" y="11.3" width="1.2" height="1.2"/><rect x="140.3" y="11.8" width="1.5" height="1.3"/><rect x="173.0" y="9.6" width="1.2" height="1.1"/><rect x="147.7" y="7.5" width="1.2" height="1.2"/><rect x="161.1" y="10.7" width="1.6" height="0.9"/><rect x="113.1" y="5.3" width="0.7" height="1.5"/><rect x="169.3" y="5.1" width="0.9" height="1.6"/><rect x="189.6" y="9.5" width="1.4" height="1.4"/><rect x="153.7" y="6.4" width="1.3" height="1.6"/><rect x="204.2" y="12.1" width="1.5" height="0.8"/><rect x="134.2" y="12.7" width="1.2" height="1.2"/><rect x="140.1" y="11.5" width="1.2" height="1.7"/><rect x="118.1" y="12.9" width="0.7" height="0.8"/><rect x="147.6" y="9.0" width="0.8" height="1.3"/><rect x="199.3" y="6.8" width="1.5" height="1.3"/><rect x="165.7" y="3.9" width="1.2" height="1.6"/><rect x="174.4" y="4.4" width="1.1" height="1.2"/><rect x="142.7" y="8.4" width="1.3" height="0.7"/><rect x="131.7" y="9.2" width="0.9" height="0.8"/><rect x="182.6" y="5.7" width="1.7" height="1.3"/><rect x="120.5" y="9.0" width="1.0" height="1.5"/><rect x="179.1" y="10.3" width="0.8" height="0.7"/><rect x="186.0" y="3.5" width="0.9" height="0.7"/><rect x="126.4" y="7.2" width="1.7" height="1.0"/><rect x="135.4" y="11.1" width="0.9" height="1.3"/><rect x="168.8" y="12.3" width="0.7" height="1.3"/><rect x="147.0" y="11.1" width="1.0" height="1.4"/><rect x="128.4" y="7.4" width="1.7" height="0.9"/><rect x="137.2" y="12.1" width="1.4" height="0.8"/><rect x="128.5" y="4.6" width="1.0" height="1.5"/><rect x="176.8" y="12.8" width="1.4" height="1.3"/><rect x="147.0" y="9.9" width="1.2" height="0.8"/><rect x="157.2" y="6.2" width="1.2" height="0.7"/><rect x="113.6" y="12.8" width="1.1" height="1.0"/><rect x="124.9" y="8.5" width="1.6" height="0.9"/><rect x="158.0" y="7.5" width="1.5" height="1.3"/><rect x="133.5" y="4.1" width="1.4" height="0.8"/><rect x="192.3" y="2.4" width="0.9" height="1.2"/><rect x="190.3" y="8.8" width="1.4" height="1.5"/><rect x="178.9" y="2.6" width="1.5" height="0.8"/><rect x="126.3" y="2.4" width="0.7" height="1.6"/><rect x="146.8" y="3.0" width="0.7" height="1.5"/><rect x="167.5" y="12.1" width="0.7" height="0.8"/><rect x="137.9" y="4.1" width="0.8" height="0.9"/><rect x="171.2" y="3.8" width="0.9" height="1.2"/><rect x="146.3" y="3.6" width="1.3" height="1.2"/><rect x="147.5" y="7.2" width="0.7" height="1.3"/><rect x="129.2" y="5.7" width="0.7" height="1.6"/><rect x="166.2" y="6.3" width="1.2" height="1.6"/><rect x="123.4" y="6.2" width="1.4" height="1.1"/><rect x="177.4" y="12.0" width="0.7" height="1.0"/><rect x="138.5" y="10.3" width="1.5" height="1.4"/><rect x="197.9" y="4.0" width="1.1" height="1.6"/><rect x="183.0" y="3.2" width="1.7" height="1.4"/><rect x="192.4" y="6.0" width="1.3" height="1.7"/><rect x="195.4" y="8.3" width="1.6" height="1.7"/><rect x="189.9" y="9.2" width="1.7" height="0.8"/><rect x="148.9" y="8.2" width="0.8" height="1.5"/><rect x="116.8" y="8.9" width="1.0" height="1.0"/><rect x="168.0" y="4.1" width="1.1" height="1.6"/><rect x="203.8" y="4.9" width="1.1" height="1.4"/><rect x="128.8" y="11.3" width="0.9" height="1.3"/><rect x="142.9" y="2.0" width="0.7" height="0.7"/><rect x="141.9" y="5.0" width="1.7" height="1.3"/><rect x="117.1" y="9.9" width="0.9" height="1.2"/><rect x="178.9" y="11.4" width="1.6" height="1.1"/><rect x="140.9" y="6.4" width="1.0" height="1.4"/><rect x="154.5" y="9.5" width="0.9" height="1.5"/><rect x="201.9" y="4.2" width="1.3" height="0.9"/><rect x="114.3" y="6.6" width="0.9" height="1.4"/><rect x="164.8" y="9.4" width="1.7" height="0.8"/><rect x="120.2" y="2.4" width="1.2" height="1.5"/><rect x="175.3" y="8.0" width="1.6" height="1.1"/><rect x="121.6" y="9.1" width="0.7" height="0.9"/><rect x="113.8" y="3.8" width="0.8" height="1.2"/><rect x="123.0" y="8.6" width="1.5" height="1.0"/><rect x="122.3" y="9.4" width="1.4" height="1.6"/><rect x="163.1" y="8.4" width="1.6" height="1.4"/><rect x="202.6" y="5.2" width="1.5" height="1.3"/><rect x="155.0" y="2.1" width="1.2" height="1.0"/><rect x="167.5" y="7.6" width="1.2" height="0.8"/><rect x="123.4" y="8.7" width="1.4" height="1.7"/><rect x="185.5" y="5.2" width="1.2" height="1.2"/><rect x="186.6" y="6.3" width="1.6" height="1.2"/><rect x="148.4" y="7.3" width="1.1" height="1.7"/><rect x="115.4" y="6.4" width="0.8" height="1.4"/><rect x="125.2" y="3.6" width="1.1" height="1.3"/><rect x="182.8" y="6.9" width="1.0" height="1.1"/><rect x="194.5" y="4.3" width="0.7" height="1.6"/><rect x="156.4" y="3.5" width="0.8" height="1.6"/><rect x="181.4" y="2.7" width="1.4" height="0.9"/><rect x="152.9" y="8.7" width="0.8" height="1.6"/><rect x="142.5" y="3.6" width="1.5" height="0.8"/><rect x="114.5" y="9.2" width="1.2" height="1.6"/><rect x="185.3" y="4.3" width="0.7" height="1.3"/><rect x="155.2" y="5.3" width="1.6" height="0.9"/><rect x="171.5" y="2.8" width="1.6" height="1.6"/><rect x="169.1" y="5.5" width="1.4" height="1.6"/><rect x="185.7" y="2.4" width="1.2" height="0.8"/><rect x="162.4" y="12.5" width="1.6" height="0.9"/><rect x="162.9" y="5.5" width="0.9" height="1.4"/><rect x="182.4" y="5.7" width="1.1" height="1.4"/><rect x="179.4" y="7.1" width="0.8" height="0.8"/><rect x="126.9" y="11.1" width="1.2" height="1.3"/><rect x="145.3" y="6.1" width="0.9" height="1.7"/><rect x="167.9" y="3.4" width="1.4" height="1.3"/><rect x="168.6" y="10.5" width="1.3" height="1.6"/><rect x="202.2" y="6.5" width="1.3" height="1.1"/><rect x="149.6" y="6.0" width="1.3" height="1.1"/><rect x="144.1" y="11.3" width="1.5" height="1.4"/><rect x="190.3" y="6.2" width="1.3" height="1.0"/><rect x="140.6" y="3.1" width="1.5" height="1.6"/><rect x="139.5" y="6.2" width="0.8" height="0.8"/><rect x="171.0" y="11.8" width="0.8" height="1.0"/><rect x="182.4" y="4.5" width="1.6" height="1.1"/><rect x="155.5" y="4.2" width="1.0" height="1.1"/><rect x="137.2" y="10.0" width="0.7" height="1.3"/><rect x="186.4" y="5.6" width="0.9" height="0.8"/><rect x="118.3" y="10.7" width="1.3" height="0.7"/><rect x="153.6" y="8.6" width="1.0" height="0.7"/><rect x="150.6" y="5.9" width="1.7" height="1.1"/><rect x="197.7" y="11.5" width="1.3" height="0.8"/><rect x="186.9" y="3.0" width="1.3" height="0.8"/><rect x="119.7" y="6.5" width="0.9" height="1.7"/><rect x="165.3" y="11.9" width="1.7" height="1.5"/><rect x="171.7" y="7.2" width="1.5" height="1.4"/><rect x="125.9" y="7.8" width="1.1" height="1.2"/><rect x="178.0" y="9.6" width="1.3" height="1.5"/><rect x="188.6" y="3.0" width="0.8" height="0.7"/><rect x="126.1" y="12.5" width="1.0" height="1.1"/><rect x="154.7" y="8.2" width="1.0" height="1.5"/><rect x="142.2" y="11.3" width="1.5" height="0.7"/><rect x="162.5" y="3.0" width="1.6" height="0.8"/><rect x="136.1" y="10.5" width="1.3" height="1.4"/><rect x="149.8" y="7.7" width="0.9" height="1.2"/><rect x="135.2" y="9.4" width="0.8" height="0.8"/><rect x="129.6" y="7.9" width="1.3" height="0.7"/><rect x="203.8" y="11.2" width="1.1" height="0.9"/><rect x="188.6" y="12.7" width="0.9" height="1.5"/><rect x="187.9" y="12.3" width="0.9" height="0.8"/><rect x="126.5" y="4.5" width="1.6" height="1.6"/><rect x="213.1" y="4.6" width="1.2" height="1.1"/><rect x="216.0" y="25.9" width="1.7" height="1.3"/><rect x="212.8" y="16.8" width="1.2" height="1.3"/><rect x="216.6" y="25.6" width="1.2" height="1.5"/><rect x="207.5" y="1.6" width="1.3" height="1.2"/><rect x="205.6" y="2.9" width="1.3" height="1.9"/><rect x="219.2" y="1.1" width="1.2" height="1.2"/><rect x="210.3" y="4.9" width="1.5" height="1.8"/><rect x="211.5" y="6.3" width="0.9" height="0.8"/><rect x="218.0" y="8.3" width="1.7" height="1.7"/><rect x="206.4" y="6.8" width="1.2" height="1.7"/><rect x="217.5" y="10.9" width="1.3" height="1.2"/><rect x="213.0" y="28.6" width="1.1" height="1.8"/><rect x="220.6" y="21.6" width="2.0" height="1.9"/><rect x="207.9" y="35.7" width="1.0" height="1.8"/><rect x="207.1" y="10.9" width="1.3" height="1.8"/><rect x="216.6" y="7.3" width="1.9" height="1.8"/><rect x="213.7" y="1.8" width="1.1" height="1.2"/><rect x="212.1" y="33.9" width="1.5" height="1.8"/><rect x="206.2" y="8.8" width="1.7" height="1.2"/><rect x="208.9" y="2.3" width="0.9" height="1.3"/><rect x="214.3" y="14.4" width="1.5" height="1.1"/><rect x="205.3" y="24.3" width="1.2" height="1.4"/><rect x="211.4" y="9.7" width="0.9" height="1.2"/><rect x="210.1" y="4.1" width="0.8" height="1.4"/><rect x="205.3" y="31.6" width="1.2" height="1.3"/><rect x="213.9" y="0.9" width="0.9" height="1.7"/><rect x="214.5" y="17.8" width="1.2" height="1.7"/><rect x="213.6" y="28.5" width="1.8" height="1.9"/><rect x="217.3" y="24.3" width="1.4" height="1.4"/><rect x="214.8" y="18.9" width="1.8" height="1.8"/><rect x="205.9" y="27.1" width="1.5" height="1.5"/><rect x="220.4" y="1.8" width="1.4" height="1.3"/><rect x="221.1" y="5.9" width="1.5" height="1.0"/><rect x="217.8" y="17.6" width="1.7" height="1.2"/><rect x="220.0" y="0.3" width="1.1" height="1.7"/><rect x="219.9" y="28.0" width="1.1" height="0.9"/><rect x="217.1" y="26.3" width="0.9" height="1.9"/><rect x="214.0" y="1.2" width="1.4" height="1.2"/><rect x="206.8" y="31.9" width="1.9" height="0.9"/><rect x="212.6" y="9.8" width="1.6" height="0.9"/><rect x="210.7" y="14.8" width="1.4" height="1.3"/><rect x="215.1" y="33.8" width="1.9" height="1.9"/><rect x="219.1" y="8.2" width="1.1" height="1.4"/><rect x="215.9" y="21.8" width="1.2" height="2.0"/><rect x="210.3" y="0.7" width="0.9" height="1.1"/><rect x="217.4" y="30.3" width="0.9" height="1.1"/><rect x="209.1" y="28.3" width="1.9" height="1.1"/><rect x="206.7" y="34.8" width="2.0" height="1.7"/><rect x="213.0" y="26.9" width="1.7" height="1.4"/><rect x="209.6" y="18.9" width="1.6" height="1.2"/><rect x="215.9" y="5.3" width="2.0" height="1.1"/><rect x="208.8" y="34.6" width="1.9" height="1.9"/><rect x="219.3" y="30.5" width="1.8" height="1.5"/><rect x="206.3" y="26.3" width="1.8" height="1.8"/><rect x="205.7" y="2.2" width="1.7" height="1.4"/><rect x="220.2" y="35.7" width="1.3" height="1.6"/><rect x="216.3" y="25.0" width="1.2" height="1.6"/><rect x="206.2" y="32.4" width="1.7" height="1.8"/><rect x="212.9" y="7.4" width="1.3" height="1.6"/><rect x="214.3" y="3.9" width="0.8" height="1.3"/><rect x="209.2" y="8.2" width="1.1" height="1.3"/><rect x="216.8" y="32.9" width="1.6" height="0.8"/><rect x="219.7" y="21.9" width="1.7" height="1.5"/><rect x="211.0" y="12.2" width="0.9" height="1.6"/><rect x="205.9" y="24.5" width="1.9" height="1.6"/><rect x="215.3" y="29.1" width="2.0" height="1.8"/><rect x="221.8" y="16.5" width="0.8" height="1.5"/><rect x="215.9" y="31.1" width="1.5" height="1.2"/><rect x="205.1" y="29.9" width="1.5" height="2.0"/><rect x="215.1" y="30.7" width="1.7" height="2.0"/><rect x="212.9" y="32.3" width="1.3" height="0.8"/><rect x="210.5" y="12.6" width="2.0" height="1.3"/><rect x="209.7" y="24.9" width="0.9" height="1.2"/><rect x="211.7" y="4.5" width="1.5" height="1.3"/><rect x="218.6" y="12.2" width="2.0" height="1.0"/><rect x="214.0" y="8.1" width="0.8" height="1.2"/><rect x="220.2" y="10.5" width="1.4" height="1.4"/><rect x="209.5" y="19.3" width="0.9" height="1.2"/><rect x="209.8" y="29.4" width="1.7" height="1.6"/><rect x="215.1" y="31.2" width="1.7" height="0.9"/><rect x="207.2" y="26.9" width="1.8" height="2.0"/><rect x="218.2" y="5.7" width="1.5" height="1.5"/><rect x="215.3" y="4.8" width="2.0" height="1.4"/><rect x="209.6" y="35.3" width="1.3" height="0.9"/><rect x="216.4" y="9.3" width="1.1" height="1.2"/><rect x="215.3" y="11.5" width="1.6" height="1.9"/><rect x="221.8" y="32.0" width="1.9" height="1.1"/><rect x="219.0" y="3.2" width="1.5" height="0.9"/><rect x="206.7" y="34.2" width="1.0" height="1.7"/><rect x="214.0" y="0.0" width="1.8" height="0.9"/><rect x="220.1" y="29.5" width="1.4" height="1.3"/><rect x="205.5" y="25.2" width="0.8" height="1.4"/><rect x="220.7" y="24.4" width="0.9" height="1.7"/><rect x="216.9" y="11.9" width="1.7" height="1.5"/><rect x="212.0" y="18.9" width="1.1" height="1.1"/><rect x="220.1" y="12.6" width="1.7" height="1.2"/><rect x="208.2" y="0.1" width="2.0" height="1.7"/><rect x="221.7" y="21.2" width="0.9" height="1.0"/><rect x="205.8" y="22.0" width="1.5" height="1.9"/><rect x="210.0" y="8.4" width="1.1" height="1.0"/><rect x="205.5" y="17.8" width="1.3" height="1.2"/><rect x="221.2" y="11.3" width="1.8" height="1.4"/><rect x="206.7" y="1.1" width="1.5" height="1.8"/><rect x="205.9" y="25.3" width="1.1" height="1.6"/><rect x="219.2" y="26.2" width="1.1" height="1.0"/><rect x="221.4" y="33.0" width="1.9" height="1.4"/><rect x="205.9" y="13.3" width="1.9" height="0.9"/><rect x="210.0" y="1.5" width="1.9" height="1.2"/><rect x="206.4" y="12.8" width="1.0" height="1.3"/><rect x="215.5" y="23.7" width="0.9" height="1.4"/><rect x="206.0" y="15.9" width="1.8" height="1.1"/><rect x="219.0" y="8.8" width="1.3" height="1.8"/><rect x="205.1" y="19.9" width="1.4" height="1.7"/><rect x="221.1" y="25.0" width="1.1" height="1.0"/><rect x="213.2" y="10.1" width="1.5" height="0.9"/><rect x="216.8" y="15.0" width="0.9" height="0.9"/><rect x="220.9" y="30.6" width="1.9" height="1.3"/><rect x="221.7" y="6.1" width="1.7" height="1.9"/><rect x="208.5" y="0.2" width="1.0" height="0.9"/><rect x="218.7" y="21.8" width="1.4" height="0.9"/><rect x="215.9" y="4.9" width="1.0" height="1.5"/><rect x="215.9" y="28.8" width="1.8" height="1.0"/><rect x="210.2" y="5.2" width="1.4" height="0.8"/><rect x="219.7" y="24.5" width="1.8" height="1.4"/><rect x="220.5" y="30.1" width="1.8" height="1.8"/><rect x="208.7" y="12.4" width="0.9" height="1.7"/><rect x="213.0" y="35.5" width="1.1" height="1.3"/><rect x="219.7" y="34.9" width="1.7" height="1.9"/><rect x="220.7" y="9.8" width="1.5" height="0.9"/><rect x="117.1" y="159.0" width="1.2" height="0.9"/><rect x="116.1" y="27.7" width="1.1" height="0.9"/><rect x="114.8" y="139.0" width="1.3" height="1.4"/><rect x="115.1" y="83.3" width="0.8" height="1.4"/><rect x="116.1" y="78.4" width="0.9" height="1.1"/><rect x="111.6" y="35.8" width="0.9" height="1.1"/><rect x="112.2" y="140.4" width="1.2" height="1.4"/><rect x="116.0" y="41.6" width="1.0" height="1.4"/><rect x="116.3" y="113.6" width="1.2" height="0.8"/><rect x="112.8" y="81.9" width="1.4" height="1.5"/><rect x="116.3" y="56.4" width="0.8" height="1.2"/><rect x="114.7" y="155.8" width="0.9" height="0.9"/><rect x="111.1" y="22.2" width="1.4" height="1.4"/><rect x="112.4" y="20.3" width="1.2" height="1.0"/><rect x="116.5" y="152.9" width="1.3" height="1.0"/><rect x="116.5" y="60.9" width="1.3" height="1.0"/><rect x="118.8" y="118.4" width="1.4" height="1.0"/><rect x="119.6" y="104.2" width="1.0" height="1.3"/><rect x="113.8" y="34.8" width="0.8" height="1.2"/><rect x="113.2" y="32.8" width="1.3" height="0.9"/><rect x="117.8" y="58.4" width="1.1" height="1.5"/><rect x="118.5" y="141.5" width="1.5" height="1.2"/><rect x="119.4" y="110.1" width="1.2" height="1.0"/><rect x="114.4" y="102.3" width="1.0" height="1.2"/><rect x="118.8" y="124.6" width="1.0" height="0.8"/><rect x="114.3" y="82.2" width="1.4" height="1.2"/><rect x="115.7" y="107.7" width="1.2" height="1.3"/><rect x="116.0" y="99.8" width="1.0" height="0.9"/><rect x="115.0" y="149.2" width="1.5" height="1.0"/><rect x="116.2" y="94.7" width="1.1" height="0.9"/><rect x="118.1" y="30.6" width="1.0" height="1.0"/><rect x="112.8" y="46.6" width="0.9" height="1.2"/><rect x="112.5" y="113.1" width="1.2" height="1.2"/><rect x="115.3" y="108.6" width="1.0" height="1.1"/><rect x="117.2" y="49.9" width="1.3" height="1.2"/><rect x="119.8" y="109.2" width="1.2" height="1.3"/><rect x="113.6" y="73.1" width="1.1" height="1.3"/><rect x="117.5" y="45.4" width="1.5" height="1.5"/><rect x="115.5" y="165.3" width="1.2" height="1.1"/><rect x="111.8" y="20.6" width="1.2" height="1.3"/><rect x="116.5" y="133.9" width="1.1" height="1.3"/><rect x="116.4" y="111.9" width="1.2" height="1.3"/><rect x="116.0" y="31.4" width="1.3" height="1.3"/><rect x="114.9" y="161.5" width="1.1" height="0.9"/><rect x="115.6" y="71.0" width="0.9" height="1.4"/><rect x="112.6" y="123.4" width="0.9" height="1.2"/><rect x="120.0" y="31.1" width="1.4" height="0.8"/><rect x="119.8" y="152.5" width="1.1" height="1.2"/><rect x="115.1" y="42.2" width="1.0" height="1.1"/><rect x="118.8" y="34.9" width="1.2" height="1.1"/><rect x="169.2" y="98.0" width="1.0" height="0.8"/><rect x="201.4" y="77.5" width="0.8" height="0.9"/><rect x="194.4" y="18.9" width="1.0" height="0.9"/><rect x="148.0" y="30.9" width="0.7" height="0.9"/><rect x="158.8" y="77.7" width="0.8" height="1.0"/><rect x="162.9" y="98.3" width="1.1" height="0.7"/><rect x="203.2" y="71.9" width="0.8" height="0.8"/><rect x="182.0" y="60.3" width="1.0" height="0.8"/><rect x="193.8" y="42.0" width="1.1" height="0.9"/><rect x="157.1" y="75.2" width="0.9" height="0.9"/><rect x="169.8" y="114.7" width="1.0" height="0.7"/><rect x="204.0" y="15.6" width="0.6" height="1.1"/><rect x="147.0" y="17.1" width="0.7" height="0.9"/><rect x="192.5" y="16.1" width="0.7" height="0.6"/><rect x="129.3" y="47.4" width="0.9" height="1.2"/><rect x="176.9" y="104.6" width="1.0" height="1.1"/><rect x="178.9" y="39.4" width="0.8" height="0.9"/><rect x="133.8" y="112.0" width="0.9" height="0.7"/><rect x="164.3" y="99.4" width="0.8" height="1.0"/><rect x="132.3" y="39.6" width="0.7" height="0.9"/><rect x="180.0" y="38.1" width="1.0" height="1.0"/><rect x="185.1" y="119.5" width="0.8" height="1.2"/><rect x="161.4" y="68.0" width="0.7" height="0.7"/><rect x="176.6" y="24.9" width="0.6" height="0.7"/><rect x="168.4" y="34.8" width="0.8" height="1.1"/><rect x="160.7" y="29.6" width="1.0" height="1.2"/><rect x="174.8" y="61.2" width="0.9" height="1.0"/><rect x="192.1" y="97.3" width="0.7" height="1.1"/><rect x="133.3" y="27.6" width="0.9" height="0.7"/><rect x="169.9" y="44.1" width="1.2" height="0.9"/><rect x="190.2" y="114.1" width="0.9" height="1.1"/><rect x="164.4" y="56.3" width="0.7" height="1.0"/><rect x="198.7" y="86.9" width="0.8" height="0.9"/><rect x="153.5" y="55.5" width="1.1" height="0.6"/><rect x="163.5" y="68.3" width="0.7" height="1.0"/><rect x="145.3" y="56.8" width="0.7" height="1.0"/><rect x="159.5" y="86.5" width="0.9" height="1.1"/><rect x="169.1" y="25.1" width="0.9" height="0.8"/><rect x="148.8" y="114.5" width="0.9" height="1.0"/><rect x="137.5" y="80.7" width="0.7" height="0.7"/><rect x="135.2" y="16.6" width="1.1" height="1.2"/><rect x="154.4" y="15.3" width="1.0" height="1.0"/><rect x="128.6" y="95.3" width="0.6" height="0.7"/><rect x="187.3" y="95.3" width="0.7" height="0.9"/><rect x="189.0" y="78.0" width="0.9" height="0.7"/><rect x="130.4" y="33.9" width="0.9" height="1.0"/><rect x="161.8" y="81.4" width="0.9" height="1.0"/><rect x="157.9" y="103.3" width="0.9" height="1.1"/><rect x="203.9" y="101.7" width="1.1" height="1.0"/><rect x="169.2" y="40.2" width="0.7" height="1.0"/><rect x="144.9" y="78.9" width="0.9" height="1.0"/><rect x="159.3" y="39.4" width="0.8" height="1.0"/><rect x="195.9" y="47.8" width="0.8" height="0.9"/><rect x="159.3" y="81.0" width="1.1" height="1.1"/><rect x="189.7" y="90.9" width="1.2" height="0.9"/><rect x="160.7" y="83.1" width="0.8" height="1.1"/><rect x="158.4" y="73.0" width="0.9" height="0.8"/><rect x="125.8" y="43.5" width="0.9" height="1.2"/><rect x="136.0" y="109.7" width="1.2" height="1.1"/><rect x="147.4" y="16.0" width="1.1" height="0.6"/><rect x="148.9" y="113.5" width="1.0" height="1.1"/><rect x="191.7" y="32.9" width="0.9" height="0.7"/><rect x="155.3" y="66.6" width="1.1" height="0.8"/><rect x="178.3" y="28.9" width="0.8" height="0.6"/><rect x="171.5" y="76.1" width="1.0" height="0.9"/><rect x="199.9" y="90.6" width="0.9" height="1.1"/><rect x="139.4" y="45.0" width="0.9" height="1.0"/><rect x="201.4" y="86.0" width="0.6" height="1.2"/><rect x="162.4" y="35.8" width="1.1" height="1.0"/><rect x="193.4" y="72.4" width="0.8" height="0.9"/><rect x="162.3" y="51.3" width="0.9" height="0.7"/><rect x="145.2" y="26.6" width="0.6" height="0.9"/><rect x="184.0" y="56.7" width="1.1" height="1.0"/><rect x="177.7" y="44.3" width="1.1" height="0.8"/><rect x="192.6" y="39.9" width="1.2" height="1.0"/><rect x="139.3" y="91.5" width="0.7" height="0.8"/><rect x="155.3" y="49.5" width="0.8" height="0.7"/><rect x="157.0" y="23.9" width="1.1" height="0.8"/><rect x="182.0" y="59.4" width="1.2" height="1.1"/><rect x="181.4" y="103.1" width="1.1" height="1.2"/><rect x="158.0" y="76.8" width="0.6" height="0.8"/><rect x="151.2" y="80.0" width="0.6" height="1.1"/><rect x="131.0" y="58.8" width="0.9" height="1.1"/><rect x="175.6" y="29.7" width="1.0" height="0.7"/><rect x="174.4" y="57.8" width="1.2" height="0.9"/><rect x="146.7" y="46.9" width="1.2" height="0.8"/><rect x="144.4" y="70.7" width="1.0" height="1.2"/><rect x="131.4" y="48.9" width="1.0" height="0.9"/><rect x="180.3" y="85.5" width="0.7" height="0.6"/><rect x="139.2" y="46.2" width="0.7" height="0.8"/><rect x="134.1" y="16.8" width="0.9" height="1.1"/><rect x="137.8" y="24.0" width="1.0" height="0.6"/><rect x="136.2" y="66.0" width="0.8" height="1.1"/><rect x="165.5" y="69.5" width="0.8" height="0.6"/><rect x="190.7" y="55.3" width="1.1" height="0.7"/><rect x="159.6" y="71.2" width="0.7" height="0.6"/><rect x="199.8" y="113.5" width="1.2" height="0.9"/><rect x="183.6" y="77.7" width="0.9" height="0.7"/><rect x="176.4" y="61.0" width="1.0" height="0.6"/><rect x="148.5" y="26.0" width="1.1" height="0.9"/><rect x="147.9" y="96.8" width="0.9" height="0.8"/><rect x="156.4" y="14.2" width="0.6" height="0.6"/><rect x="201.9" y="107.1" width="0.9" height="1.2"/><rect x="168.2" y="86.2" width="0.7" height="0.9"/><rect x="173.9" y="57.4" width="1.0" height="0.8"/><rect x="177.4" y="36.1" width="0.9" height="0.9"/><rect x="167.1" y="19.8" width="0.7" height="1.0"/><rect x="138.3" y="64.5" width="1.2" height="1.0"/><rect x="183.7" y="95.7" width="1.2" height="0.8"/><rect x="156.7" y="94.0" width="0.6" height="0.9"/><rect x="146.7" y="73.0" width="1.0" height="1.1"/><rect x="165.6" y="87.3" width="0.6" height="1.0"/><rect x="199.4" y="79.2" width="0.9" height="0.9"/><rect x="157.9" y="33.0" width="0.7" height="1.1"/><rect x="166.3" y="18.1" width="1.0" height="1.1"/><rect x="177.1" y="33.1" width="1.2" height="0.7"/><rect x="165.7" y="62.8" width="0.7" height="0.8"/><rect x="139.9" y="31.8" width="0.6" height="1.0"/><rect x="178.3" y="40.7" width="1.2" height="0.9"/><rect x="161.5" y="112.3" width="1.0" height="0.9"/><rect x="184.8" y="92.5" width="0.8" height="0.6"/><rect x="183.6" y="93.3" width="1.0" height="0.7"/><rect x="184.5" y="32.6" width="1.1" height="1.0"/><rect x="175.9" y="22.0" width="0.8" height="1.0"/><rect x="133.9" y="18.1" width="0.8" height="1.1"/><rect x="175.4" y="38.4" width="0.6" height="1.1"/><rect x="192.4" y="88.3" width="0.7" height="1.1"/><rect x="125.8" y="32.3" width="0.8" height="1.2"/><rect x="127.8" y="31.0" width="1.0" height="1.1"/><rect x="146.4" y="22.1" width="1.1" height="1.2"/><rect x="197.7" y="74.0" width="0.7" height="1.0"/><rect x="177.0" y="102.1" width="1.1" height="0.9"/><rect x="203.1" y="63.0" width="0.9" height="1.0"/><rect x="188.1" y="76.3" width="1.2" height="0.8"/><rect x="196.7" y="107.1" width="0.8" height="0.6"/><rect x="173.1" y="79.7" width="1.2" height="0.9"/><rect x="182.9" y="94.5" width="0.7" height="1.0"/><rect x="160.1" y="36.9" width="0.8" height="0.8"/><rect x="183.8" y="72.5" width="0.8" height="0.6"/><rect x="188.0" y="93.9" width="1.1" height="1.1"/><rect x="130.1" y="43.8" width="0.9" height="0.8"/><rect x="190.9" y="35.7" width="0.6" height="0.9"/><rect x="129.0" y="17.0" width="1.0" height="1.0"/><rect x="168.4" y="21.5" width="0.9" height="0.9"/><rect x="149.4" y="37.7" width="0.7" height="0.9"/><rect x="154.3" y="76.1" width="1.0" height="0.8"/><rect x="173.6" y="41.4" width="1.0" height="0.7"/><rect x="172.6" y="92.0" width="1.1" height="0.9"/><rect x="198.0" y="118.5" width="1.1" height="0.8"/><rect x="146.3" y="80.4" width="0.7" height="0.7"/><rect x="132.6" y="83.0" width="0.8" height="1.2"/><rect x="189.5" y="70.3" width="0.8" height="0.8"/><rect x="129.2" y="25.8" width="1.1" height="0.8"/><rect x="125.7" y="117.9" width="0.8" height="1.1"/><rect x="161.2" y="116.7" width="0.6" height="0.9"/><rect x="176.8" y="16.6" width="1.2" height="0.8"/><rect x="179.2" y="22.4" width="0.6" height="0.7"/><rect x="188.1" y="113.9" width="1.1" height="0.9"/><rect x="132.3" y="96.4" width="0.9" height="1.1"/><rect x="175.7" y="74.0" width="0.7" height="0.7"/><rect x="131.5" y="59.8" width="0.8" height="1.2"/><rect x="128.9" y="94.5" width="0.7" height="0.7"/><rect x="198.8" y="37.3" width="1.0" height="1.0"/><rect x="156.9" y="51.1" width="0.7" height="1.0"/><rect x="154.8" y="77.7" width="1.1" height="0.6"/><rect x="158.9" y="51.4" width="1.2" height="1.0"/><rect x="140.8" y="62.6" width="0.6" height="0.9"/><rect x="130.6" y="28.6" width="0.9" height="0.9"/><rect x="142.0" y="75.8" width="0.8" height="1.0"/><rect x="129.2" y="103.2" width="0.9" height="0.7"/><rect x="148.3" y="80.6" width="0.7" height="1.1"/><rect x="142.7" y="57.5" width="0.6" height="0.9"/><rect x="201.9" y="33.8" width="0.7" height="0.9"/><rect x="176.2" y="29.2" width="0.7" height="1.0"/><rect x="144.2" y="16.9" width="1.0" height="1.1"/><rect x="189.5" y="104.6" width="0.7" height="0.8"/><rect x="173.0" y="79.3" width="1.0" height="0.9"/><rect x="143.7" y="39.3" width="0.7" height="0.6"/><rect x="171.5" y="23.1" width="1.1" height="1.2"/><rect x="136.7" y="116.4" width="1.0" height="0.6"/><rect x="155.7" y="52.3" width="0.8" height="0.6"/><rect x="144.5" y="15.8" width="0.9" height="0.9"/><rect x="143.5" y="112.0" width="1.1" height="0.9"/><rect x="189.1" y="51.5" width="1.1" height="1.1"/><rect x="153.2" y="92.5" width="0.8" height="0.7"/><rect x="158.5" y="26.0" width="1.0" height="0.8"/><rect x="164.8" y="99.7" width="1.0" height="1.1"/><rect x="183.1" y="87.4" width="1.0" height="1.0"/><rect x="198.5" y="77.0" width="1.0" height="0.9"/><rect x="167.7" y="113.8" width="0.8" height="0.7"/><rect x="165.1" y="47.0" width="1.0" height="1.0"/><rect x="125.2" y="36.1" width="1.0" height="0.8"/><rect x="179.4" y="63.8" width="0.7" height="1.0"/><rect x="202.9" y="23.7" width="1.0" height="1.0"/><rect x="174.0" y="67.6" width="0.9" height="1.2"/><rect x="194.8" y="60.1" width="1.1" height="1.0"/><rect x="189.4" y="119.8" width="0.6" height="0.7"/><rect x="143.6" y="100.8" width="1.2" height="0.7"/><rect x="163.8" y="108.3" width="1.0" height="1.0"/><rect x="196.5" y="111.9" width="0.7" height="1.2"/><rect x="166.0" y="70.7" width="1.1" height="0.8"/><rect x="166.8" y="85.3" width="1.2" height="1.3"/><rect x="155.2" y="71.3" width="1.1" height="1.3"/><rect x="189.9" y="54.0" width="0.7" height="0.7"/><rect x="164.2" y="68.5" width="0.8" height="0.7"/><rect x="154.8" y="74.3" width="1.2" height="0.7"/><rect x="178.3" y="89.0" width="0.9" height="1.0"/><rect x="194.6" y="41.2" width="1.2" height="1.1"/><rect x="190.5" y="57.2" width="0.9" height="1.3"/><rect x="153.4" y="44.1" width="1.0" height="1.3"/><rect x="158.2" y="49.4" width="0.9" height="1.2"/><rect x="181.0" y="73.0" width="0.6" height="0.7"/><rect x="182.2" y="76.2" width="0.7" height="0.7"/><rect x="167.3" y="60.7" width="0.8" height="0.7"/><rect x="154.1" y="72.3" width="1.3" height="1.0"/><rect x="200.6" y="46.3" width="1.0" height="0.9"/><rect x="196.6" y="69.9" width="1.0" height="1.2"/><rect x="202.6" y="46.9" width="0.9" height="0.7"/><rect x="180.8" y="51.2" width="1.1" height="0.8"/><rect x="150.4" y="84.4" width="0.7" height="0.8"/><rect x="178.6" y="42.9" width="1.1" height="1.1"/><rect x="156.5" y="71.0" width="0.7" height="1.0"/><rect x="155.1" y="54.1" width="0.9" height="1.0"/><rect x="186.0" y="86.3" width="0.8" height="0.8"/><rect x="161.5" y="76.9" width="0.9" height="0.7"/><rect x="160.6" y="61.0" width="1.2" height="0.9"/><rect x="194.7" y="63.6" width="1.0" height="0.8"/><rect x="172.5" y="76.2" width="0.7" height="0.9"/><rect x="163.9" y="54.5" width="0.8" height="0.7"/><rect x="181.7" y="42.0" width="0.8" height="0.8"/><rect x="160.0" y="81.7" width="1.1" height="1.2"/><rect x="157.3" y="49.4" width="0.8" height="1.0"/><rect x="195.9" y="81.7" width="1.2" height="0.6"/><rect x="151.5" y="56.8" width="0.9" height="0.6"/><rect x="169.3" y="46.4" width="1.2" height="0.7"/><rect x="167.5" y="48.7" width="1.2" height="0.7"/><rect x="174.2" y="51.0" width="0.8" height="1.3"/><rect x="189.3" y="76.8" width="0.8" height="1.3"/><rect x="203.1" y="71.8" width="0.8" height="0.6"/><rect x="180.0" y="64.3" width="1.2" height="1.3"/><rect x="194.9" y="52.1" width="1.3" height="1.0"/><rect x="152.1" y="50.4" width="1.3" height="1.2"/><rect x="190.7" y="73.1" width="0.6" height="1.3"/><rect x="166.4" y="78.6" width="1.0" height="0.9"/><rect x="178.9" y="85.9" width="1.2" height="0.9"/><rect x="196.9" y="48.8" width="0.8" height="0.8"/><rect x="152.6" y="60.0" width="0.6" height="1.3"/><rect x="195.0" y="64.0" width="0.6" height="0.8"/><rect x="192.5" y="54.7" width="0.7" height="0.9"/><rect x="181.8" y="46.3" width="0.9" height="1.0"/><rect x="191.0" y="60.4" width="1.3" height="0.8"/><rect x="191.3" y="44.0" width="1.2" height="1.0"/><rect x="159.5" y="80.7" width="1.2" height="0.7"/><rect x="198.5" y="87.9" width="0.8" height="1.2"/><rect x="189.6" y="68.3" width="0.9" height="0.8"/><rect x="194.9" y="79.1" width="1.3" height="0.6"/><rect x="181.4" y="75.3" width="0.8" height="0.6"/><rect x="199.1" y="79.0" width="1.1" height="0.8"/><rect x="174.1" y="80.6" width="0.7" height="1.1"/><rect x="188.9" y="63.1" width="1.3" height="1.0"/><rect x="198.6" y="49.7" width="0.9" height="0.8"/><rect x="177.4" y="77.7" width="1.3" height="1.2"/><rect x="196.9" y="88.8" width="1.1" height="1.1"/><rect x="155.0" y="60.4" width="0.9" height="0.7"/><rect x="199.6" y="58.6" width="0.8" height="0.7"/><rect x="179.5" y="56.8" width="1.3" height="1.0"/><rect x="173.6" y="47.9" width="0.6" height="1.1"/><rect x="183.7" y="64.7" width="1.0" height="0.9"/><rect x="199.8" y="42.8" width="0.8" height="1.2"/><rect x="167.3" y="56.6" width="0.9" height="0.8"/><rect x="191.8" y="44.8" width="1.0" height="1.1"/><rect x="168.9" y="76.5" width="0.8" height="1.0"/><rect x="155.6" y="55.9" width="1.0" height="1.0"/><rect x="175.5" y="41.9" width="1.0" height="1.2"/><rect x="164.9" y="50.4" width="1.0" height="0.8"/><rect x="155.6" y="43.7" width="1.0" height="1.2"/><rect x="192.4" y="69.5" width="1.2" height="1.2"/><rect x="164.8" y="59.1" width="1.3" height="1.3"/><rect x="185.2" y="71.5" width="0.8" height="0.7"/><rect x="168.1" y="51.5" width="1.0" height="1.1"/><rect x="184.6" y="85.6" width="0.6" height="0.7"/><rect x="155.5" y="58.5" width="1.2" height="0.9"/><rect x="194.0" y="49.2" width="0.8" height="1.2"/><rect x="166.1" y="76.5" width="1.0" height="1.1"/><rect x="151.6" y="58.0" width="1.3" height="0.9"/><rect x="165.3" y="90.0" width="1.0" height="1.1"/><rect x="176.6" y="71.2" width="0.9" height="0.8"/><rect x="166.0" y="51.4" width="1.1" height="0.7"/><rect x="156.4" y="65.4" width="1.3" height="1.1"/><rect x="186.8" y="77.1" width="0.7" height="1.0"/><rect x="151.0" y="66.0" width="0.6" height="0.7"/><rect x="156.6" y="57.3" width="0.9" height="0.8"/><rect x="154.3" y="46.1" width="1.3" height="1.3"/><rect x="200.3" y="46.8" width="0.7" height="1.2"/><rect x="150.9" y="47.4" width="1.1" height="1.3"/><rect x="200.9" y="82.2" width="0.8" height="1.1"/><rect x="201.5" y="85.0" width="1.3" height="1.1"/><rect x="193.3" y="75.1" width="0.9" height="1.0"/><rect x="201.1" y="68.6" width="0.6" height="0.9"/><rect x="197.9" y="75.5" width="0.9" height="1.3"/><rect x="191.6" y="51.2" width="1.1" height="1.2"/><rect x="150.4" y="86.9" width="0.9" height="1.2"/><rect x="150.7" y="56.0" width="0.8" height="0.8"/><rect x="186.2" y="79.8" width="1.1" height="1.2"/><rect x="156.3" y="54.3" width="0.9" height="1.2"/><rect x="190.6" y="89.5" width="1.2" height="1.0"/><rect x="190.7" y="80.9" width="1.0" height="1.1"/><rect x="196.9" y="81.6" width="0.7" height="0.6"/><rect x="188.9" y="80.8" width="0.7" height="1.2"/><rect x="191.6" y="48.2" width="0.7" height="1.1"/><rect x="184.3" y="48.0" width="1.2" height="0.8"/><rect x="195.8" y="87.3" width="0.7" height="1.1"/><rect x="180.2" y="85.8" width="0.9" height="0.9"/><rect x="162.8" y="82.3" width="0.8" height="1.2"/><rect x="151.9" y="84.4" width="0.6" height="1.1"/><rect x="202.2" y="56.1" width="1.0" height="0.9"/><rect x="153.6" y="82.0" width="0.9" height="1.2"/><rect x="152.0" y="48.2" width="0.8" height="1.2"/><rect x="151.3" y="41.1" width="0.9" height="0.9"/><rect x="196.6" y="82.9" width="0.8" height="1.1"/><rect x="169.7" y="78.3" width="1.1" height="0.6"/><rect x="175.8" y="61.2" width="0.9" height="1.0"/><rect x="188.0" y="60.1" width="1.0" height="1.2"/><rect x="187.4" y="49.7" width="0.7" height="0.8"/><rect x="202.3" y="59.4" width="1.2" height="1.3"/><rect x="188.4" y="58.4" width="1.1" height="1.0"/><rect x="202.4" y="65.1" width="1.0" height="1.1"/><rect x="184.6" y="48.9" width="1.0" height="0.9"/><rect x="187.4" y="78.7" width="0.7" height="0.9"/><rect x="164.1" y="88.1" width="0.9" height="0.9"/><rect x="203.1" y="79.1" width="1.2" height="1.0"/><rect x="157.0" y="58.6" width="0.7" height="0.9"/><rect x="174.8" y="64.0" width="1.3" height="1.0"/><rect x="159.1" y="48.9" width="1.1" height="1.0"/><rect x="172.5" y="64.7" width="0.9" height="1.1"/><rect x="182.6" y="42.4" width="0.9" height="0.8"/><rect x="182.0" y="63.1" width="1.1" height="1.3"/><rect x="190.8" y="70.9" width="1.0" height="0.7"/><rect x="190.2" y="49.8" width="0.9" height="1.0"/><rect x="164.6" y="83.2" width="1.0" height="1.3"/><rect x="151.2" y="63.2" width="0.8" height="1.0"/><rect x="185.6" y="69.5" width="1.3" height="0.9"/><rect x="170.4" y="77.5" width="1.0" height="0.8"/><rect x="200.7" y="51.3" width="0.7" height="1.0"/><rect x="200.1" y="82.7" width="1.2" height="1.0"/><rect x="178.1" y="54.5" width="0.7" height="0.9"/><rect x="195.8" y="67.7" width="1.3" height="1.2"/><rect x="179.9" y="69.6" width="0.9" height="1.2"/><rect x="195.8" y="48.9" width="1.2" height="1.1"/><rect x="169.8" y="77.2" width="0.9" height="1.1"/><rect x="211.1" y="48.9" width="1.5" height="1.5"/><rect x="210.6" y="41.6" width="1.4" height="1.3"/><rect x="202.1" y="45.3" width="1.0" height="1.3"/><rect x="203.7" y="38.9" width="1.0" height="1.0"/><rect x="212.4" y="55.9" width="1.3" height="1.3"/><rect x="216.8" y="41.7" width="1.1" height="1.3"/><rect x="204.5" y="52.6" width="1.5" height="1.5"/><rect x="201.4" y="57.5" width="1.0" height="0.9"/><rect x="213.6" y="40.4" width="0.9" height="1.3"/><rect x="211.8" y="46.1" width="1.2" height="1.3"/><rect x="217.1" y="51.6" width="1.4" height="1.5"/><rect x="210.3" y="49.2" width="0.9" height="0.9"/><rect x="210.0" y="50.4" width="1.0" height="1.6"/><rect x="206.4" y="44.7" width="1.2" height="1.6"/><rect x="203.4" y="37.5" width="1.3" height="1.1"/><rect x="207.6" y="34.0" width="1.5" height="1.2"/><rect x="212.7" y="37.4" width="1.5" height="0.9"/><rect x="215.3" y="32.0" width="1.2" height="1.1"/><rect x="220.9" y="43.2" width="1.5" height="0.8"/><rect x="205.2" y="59.6" width="1.1" height="0.8"/><rect x="205.7" y="40.9" width="1.2" height="1.1"/><rect x="206.7" y="44.2" width="1.2" height="0.9"/><rect x="211.4" y="47.3" width="1.3" height="1.4"/><rect x="210.0" y="36.4" width="1.6" height="0.9"/><rect x="206.7" y="42.5" width="1.1" height="1.0"/><rect x="218.9" y="39.1" width="1.2" height="1.3"/><rect x="202.9" y="42.9" width="0.9" height="1.2"/><rect x="216.1" y="55.6" width="1.6" height="0.9"/><rect x="210.1" y="50.0" width="1.1" height="1.6"/><rect x="210.9" y="56.1" width="0.9" height="1.1"/><rect x="215.3" y="55.1" width="1.2" height="1.5"/><rect x="216.7" y="42.4" width="1.4" height="1.2"/><rect x="202.5" y="57.0" width="1.5" height="1.5"/><rect x="205.2" y="53.3" width="0.8" height="1.2"/><rect x="206.7" y="45.2" width="1.1" height="1.2"/><rect x="209.5" y="52.8" width="1.3" height="1.0"/><rect x="204.4" y="37.1" width="1.1" height="1.1"/><rect x="211.1" y="52.9" width="1.6" height="1.0"/><rect x="206.5" y="45.6" width="0.8" height="1.3"/><rect x="200.8" y="47.8" width="1.3" height="1.1"/><rect x="221.8" y="39.4" width="0.8" height="0.9"/><rect x="205.3" y="52.1" width="1.4" height="1.1"/><rect x="219.4" y="34.9" width="1.0" height="1.3"/><rect x="211.7" y="53.7" width="1.0" height="1.5"/><rect x="213.9" y="50.7" width="1.3" height="1.0"/><rect x="212.4" y="58.3" width="0.8" height="1.1"/><rect x="206.8" y="37.6" width="1.4" height="1.3"/><rect x="203.0" y="51.1" width="1.5" height="0.9"/><rect x="200.4" y="48.0" width="1.5" height="1.2"/><rect x="211.1" y="42.2" width="1.3" height="1.5"/><rect x="177.7" y="154.3" width="1.0" height="1.2"/><rect x="196.6" y="143.4" width="0.9" height="0.9"/><rect x="219.7" y="149.4" width="0.8" height="1.0"/><rect x="159.0" y="147.5" width="0.9" height="1.2"/><rect x="165.1" y="158.1" width="0.9" height="1.2"/><rect x="172.1" y="145.1" width="1.0" height="1.2"/><rect x="173.9" y="144.6" width="0.9" height="1.0"/><rect x="141.7" y="140.5" width="0.9" height="0.8"/><rect x="152.2" y="121.3" width="1.1" height="0.8"/><rect x="211.6" y="134.6" width="0.9" height="1.0"/><rect x="144.1" y="153.3" width="0.9" height="1.2"/><rect x="116.6" y="122.6" width="1.2" height="1.1"/><rect x="141.0" y="149.6" width="0.9" height="1.0"/><rect x="142.2" y="144.8" width="1.1" height="1.1"/><rect x="140.2" y="146.2" width="1.0" height="1.1"/><rect x="164.8" y="159.8" width="1.2" height="1.0"/><rect x="156.6" y="164.6" width="1.0" height="1.0"/><rect x="197.5" y="147.8" width="1.0" height="1.1"/><rect x="140.8" y="137.4" width="0.8" height="1.1"/><rect x="202.6" y="153.9" width="1.2" height="1.1"/><rect x="123.8" y="134.8" width="1.2" height="0.8"/><rect x="208.6" y="156.7" width="0.9" height="0.9"/><rect x="192.5" y="150.0" width="0.8" height="1.0"/><rect x="132.7" y="159.5" width="1.0" height="0.8"/><rect x="155.5" y="120.5" width="1.2" height="1.2"/><rect x="191.0" y="120.1" width="1.2" height="0.9"/><rect x="183.6" y="155.1" width="1.0" height="0.8"/><rect x="139.0" y="153.6" width="0.8" height="1.0"/><rect x="214.5" y="138.8" width="0.9" height="1.1"/><rect x="150.4" y="156.3" width="0.9" height="1.1"/><rect x="202.8" y="128.2" width="1.0" height="1.0"/><rect x="125.5" y="162.0" width="0.9" height="1.0"/><rect x="118.6" y="163.7" width="1.2" height="1.1"/><rect x="126.4" y="150.5" width="1.0" height="1.0"/><rect x="136.0" y="127.0" width="1.1" height="1.0"/><rect x="194.1" y="154.0" width="1.0" height="1.0"/><rect x="145.3" y="150.1" width="1.0" height="1.1"/><rect x="144.1" y="137.6" width="0.8" height="0.8"/><rect x="135.6" y="120.8" width="1.0" height="1.0"/><rect x="209.0" y="122.0" width="1.2" height="0.8"/><rect x="198.9" y="149.3" width="1.0" height="1.0"/><rect x="125.7" y="99.6" width="1.2" height="1.2"/><rect x="184.8" y="144.2" width="1.0" height="1.0"/><rect x="164.6" y="126.1" width="1.0" height="1.0"/><rect x="208.2" y="157.9" width="1.1" height="1.1"/><rect x="193.0" y="152.7" width="1.0" height="1.0"/><rect x="189.0" y="140.0" width="0.8" height="0.8"/><rect x="202.2" y="149.9" width="1.3" height="1.3"/><rect x="162.2" y="123.1" width="1.4" height="1.4"/><rect x="157.3" y="117.6" width="1.3" height="1.3"/><rect x="162.2" y="125.6" width="1.1" height="1.1"/><rect x="190.5" y="140.8" width="1.1" height="1.1"/><rect x="192.4" y="157.5" width="1.0" height="1.0"/><rect x="183.3" y="140.6" width="0.9" height="0.9"/><rect x="142.5" y="97.6" width="1.3" height="1.3"/><rect x="181.5" y="143.1" width="1.4" height="1.4"/><rect x="131.6" y="107.5" width="1.1" height="1.1"/><rect x="153.2" y="123.1" width="1.2" height="1.2"/><rect x="138.6" y="110.5" width="1.1" height="1.1"/><rect x="168.8" y="132.4" width="1.0" height="1.0"/><rect x="196.3" y="150.3" width="1.5" height="1.5"/><rect x="199.7" y="156.1" width="1.0" height="1.0"/><rect x="150.1" y="121.1" width="1.4" height="1.4"/><rect x="183.5" y="133.9" width="1.5" height="1.5"/><rect x="135.1" y="103.9" width="1.2" height="1.2"/><rect x="146.9" y="105.9" width="0.8" height="0.8"/><rect x="180.1" y="136.7" width="0.9" height="0.9"/><rect x="192.2" y="146.6" width="1.4" height="1.4"/><rect x="135.4" y="104.7" width="0.9" height="0.9"/><rect x="184.8" y="147.4" width="1.1" height="1.1"/><rect x="135.2" y="101.3" width="1.5" height="1.5"/><rect x="185.2" y="145.5" width="1.5" height="1.5"/><rect x="142.8" y="110.5" width="1.3" height="1.3"/><rect x="162.3" y="129.7" width="1.0" height="1.0"/><rect x="210.8" y="160.5" width="1.4" height="1.4"/><rect x="167.2" y="117.1" width="1.1" height="1.1"/><rect x="212.1" y="159.5" width="1.1" height="1.1"/><rect x="197.5" y="155.4" width="0.8" height="0.8"/><rect x="185.0" y="137.4" width="1.4" height="1.4"/><rect x="216.2" y="163.9" width="1.2" height="1.2"/><rect x="130.9" y="98.8" width="1.0" height="1.0"/><rect x="149.8" y="118.4" width="0.8" height="0.8"/><rect x="130.6" y="106.2" width="1.1" height="1.1"/><rect x="152.6" y="114.4" width="0.8" height="0.8"/><rect x="186.9" y="147.8" width="1.4" height="1.4"/><rect x="168.9" y="125.9" width="1.3" height="1.3"/><rect x="151.1" y="119.0" width="1.2" height="1.2"/><rect x="129.6" y="100.1" width="0.7" height="0.7"/><rect x="163.7" y="127.6" width="1.2" height="1.2"/><rect x="184.4" y="143.5" width="1.1" height="1.1"/><rect x="128.0" y="100.5" width="0.8" height="0.8"/><rect x="144.7" y="111.7" width="1.4" height="1.4"/><rect x="154.4" y="109.8" width="1.1" height="1.1"/><rect x="129.0" y="99.2" width="1.4" height="1.4"/><rect x="171.4" y="128.4" width="1.1" height="1.1"/><rect x="174.7" y="139.5" width="1.4" height="1.4"/><rect x="210.0" y="169.0" width="1.3" height="1.3"/><rect x="138.5" y="104.1" width="1.4" height="1.4"/><rect x="152.7" y="125.7" width="0.9" height="0.9"/><rect x="205.5" y="159.2" width="1.4" height="1.4"/><rect x="143.6" y="110.5" width="1.2" height="1.2"/><rect x="186.5" y="138.6" width="1.2" height="1.2"/><rect x="135.2" y="104.2" width="1.0" height="1.0"/><rect x="129.6" y="107.0" width="0.8" height="0.8"/><rect x="149.0" y="118.9" width="0.7" height="0.7"/><rect x="142.5" y="108.9" width="1.2" height="1.2"/><rect x="136.3" y="104.2" width="1.2" height="1.2"/><rect x="144.0" y="112.7" width="0.9" height="0.9"/><rect x="168.2" y="126.9" width="1.2" height="1.2"/><rect x="146.2" y="109.7" width="0.8" height="0.8"/><rect x="128.4" y="106.4" width="0.7" height="0.7"/><rect x="149.7" y="117.9" width="0.9" height="0.9"/><rect x="194.8" y="154.8" width="0.9" height="0.9"/><rect x="214.8" y="164.4" width="0.8" height="0.8"/><rect x="187.0" y="149.4" width="1.2" height="1.2"/><rect x="126.5" y="98.8" width="1.4" height="1.4"/><rect x="201.0" y="151.3" width="0.8" height="0.8"/><rect x="195.9" y="162.7" width="1.0" height="1.0"/><rect x="137.2" y="107.2" width="1.5" height="1.5"/><rect x="137.8" y="110.0" width="1.0" height="1.0"/><rect x="210.5" y="154.7" width="1.1" height="1.1"/><rect x="159.2" y="120.1" width="1.3" height="1.3"/><rect x="183.1" y="125.3" width="1.3" height="1.3"/><rect x="134.4" y="106.0" width="1.2" height="1.2"/><rect x="136.6" y="118.9" width="1.3" height="1.3"/><rect x="145.6" y="109.6" width="1.4" height="1.4"/><rect x="162.4" y="117.8" width="0.7" height="0.7"/><rect x="139.3" y="103.0" width="1.2" height="1.2"/><rect x="199.9" y="152.7" width="0.8" height="0.8"/><rect x="141.9" y="111.1" width="1.2" height="1.2"/><rect x="131.8" y="102.7" width="0.8" height="0.8"/><rect x="177.3" y="140.2" width="1.5" height="1.5"/><rect x="211.8" y="160.4" width="0.9" height="0.9"/><rect x="144.0" y="109.3" width="1.3" height="1.3"/><rect x="181.4" y="136.4" width="1.1" height="1.1"/><rect x="180.5" y="142.2" width="1.5" height="1.5"/><rect x="186.4" y="140.1" width="0.7" height="0.7"/><rect x="141.0" y="106.3" width="0.8" height="0.8"/><rect x="141.5" y="101.5" width="1.0" height="1.0"/><rect x="159.9" y="134.4" width="1.2" height="1.2"/><rect x="133.9" y="98.3" width="1.1" height="1.1"/><rect x="143.9" y="114.1" width="0.9" height="0.9"/><rect x="137.4" y="101.8" width="0.9" height="0.9"/><rect x="127.2" y="102.9" width="0.9" height="0.9"/><rect x="140.8" y="114.7" width="0.8" height="0.8"/><rect x="204.1" y="144.4" width="0.7" height="0.7"/><rect x="142.9" y="112.7" width="1.5" height="1.5"/><rect x="141.0" y="103.3" width="1.3" height="1.3"/><rect x="212.9" y="164.1" width="0.9" height="0.9"/><rect x="182.3" y="136.8" width="0.8" height="0.8"/><rect x="182.2" y="137.3" width="1.0" height="1.0"/><rect x="154.4" y="115.7" width="1.1" height="1.1"/><rect x="171.5" y="138.6" width="1.4" height="1.4"/><rect x="190.7" y="147.7" width="1.2" height="1.2"/><rect x="211.1" y="165.7" width="0.7" height="0.7"/><rect x="217.8" y="160.9" width="0.7" height="0.7"/><rect x="169.2" y="135.5" width="0.7" height="0.7"/><rect x="136.0" y="103.6" width="1.0" height="1.0"/><rect x="139.4" y="118.6" width="0.9" height="0.9"/><rect x="188.3" y="131.5" width="1.1" height="1.1"/><rect x="164.5" y="122.8" width="1.3" height="1.3"/><rect x="187.1" y="150.6" width="0.8" height="0.8"/><rect x="130.7" y="104.6" width="1.2" height="1.2"/><rect x="196.7" y="137.2" width="0.8" height="0.8"/><rect x="135.4" y="110.6" width="1.3" height="1.3"/><rect x="135.8" y="105.8" width="0.9" height="0.9"/><rect x="162.1" y="114.1" width="1.3" height="1.3"/><rect x="131.9" y="94.6" width="1.3" height="1.3"/><rect x="127.8" y="103.7" width="1.3" height="1.3"/><rect x="184.5" y="130.5" width="1.1" height="1.1"/><rect x="152.5" y="117.8" width="1.0" height="1.0"/><rect x="158.2" y="116.8" width="1.3" height="1.3"/><rect x="141.5" y="99.8" width="1.1" height="1.1"/><rect x="186.0" y="128.7" width="1.0" height="1.0"/><rect x="151.1" y="118.8" width="1.3" height="1.3"/><rect x="127.7" y="102.6" width="0.8" height="0.8"/><rect x="198.9" y="155.4" width="0.9" height="0.9"/><rect x="143.5" y="103.5" width="1.3" height="1.3"/><rect x="125.6" y="102.0" width="1.1" height="1.1"/><rect x="199.7" y="151.9" width="0.8" height="0.8"/><rect x="213.9" y="159.2" width="0.9" height="0.9"/><rect x="136.5" y="106.0" width="1.1" height="1.1"/><rect x="141.7" y="108.9" width="1.4" height="1.4"/><rect x="157.0" y="122.2" width="0.8" height="0.8"/><rect x="208.3" y="169.6" width="0.9" height="0.9"/><rect x="162.1" y="124.5" width="1.3" height="1.3"/><rect x="170.0" y="129.8" width="0.9" height="0.9"/><rect x="162.8" y="122.6" width="0.8" height="0.8"/><rect x="134.2" y="103.1" width="1.5" height="1.5"/><rect x="171.4" y="132.3" width="1.2" height="1.2"/><rect x="163.4" y="123.5" width="0.9" height="0.9"/><rect x="124.5" y="104.3" width="1.4" height="1.4"/><rect x="161.4" y="123.0" width="1.0" height="1.0"/><rect x="166.8" y="122.0" width="1.1" height="1.1"/><rect x="129.7" y="96.8" width="1.1" height="1.1"/><rect x="206.9" y="158.7" width="1.4" height="1.4"/><rect x="158.7" y="119.4" width="1.0" height="1.0"/><rect x="127.3" y="105.2" width="1.3" height="1.3"/><rect x="206.9" y="161.3" width="1.1" height="1.1"/><rect x="155.8" y="126.6" width="1.1" height="1.1"/><rect x="208.2" y="163.4" width="1.0" height="1.0"/><rect x="207.5" y="155.4" width="1.0" height="1.0"/><rect x="154.3" y="114.0" width="1.2" height="1.2"/><rect x="163.4" y="130.9" width="0.7" height="0.7"/><rect x="164.6" y="121.7" width="0.9" height="0.9"/><rect x="213.4" y="154.1" width="1.2" height="1.2"/><rect x="194.6" y="150.7" width="1.1" height="1.1"/><rect x="202.1" y="158.1" width="1.4" height="1.4"/><rect x="198.8" y="151.6" width="1.1" height="1.1"/><rect x="193.1" y="146.8" width="0.9" height="0.9"/><rect x="124.5" y="102.7" width="1.2" height="1.2"/><rect x="134.4" y="92.1" width="1.2" height="1.2"/><rect x="213.2" y="162.3" width="1.1" height="1.1"/><rect x="203.3" y="150.9" width="1.1" height="1.1"/><rect x="138.6" y="108.3" width="1.1" height="1.1"/><rect x="207.3" y="162.2" width="0.9" height="0.9"/><rect x="185.3" y="145.6" width="1.0" height="1.0"/><rect x="129.5" y="98.3" width="1.1" height="1.1"/><rect x="141.9" y="109.0" width="1.2" height="1.2"/><rect x="175.7" y="142.5" width="1.4" height="1.4"/><rect x="207.9" y="166.8" width="0.8" height="0.8"/><rect x="139.1" y="112.4" width="0.8" height="0.8"/><rect x="139.9" y="109.8" width="1.1" height="1.1"/><rect x="192.8" y="138.8" width="0.8" height="0.8"/><rect x="161.4" y="123.2" width="0.9" height="0.9"/><rect x="146.2" y="116.5" width="1.2" height="1.2"/><rect x="151.0" y="109.0" width="0.7" height="0.7"/><rect x="202.4" y="158.2" width="1.4" height="1.4"/><rect x="153.3" y="117.0" width="1.2" height="1.2"/><rect x="149.5" y="112.9" width="1.5" height="1.5"/><rect x="170.2" y="127.4" width="1.5" height="1.5"/><rect x="154.0" y="113.1" width="1.0" height="1.0"/><rect x="153.8" y="120.0" width="1.5" height="1.5"/><rect x="162.6" y="129.8" width="1.1" height="1.1"/><rect x="175.8" y="127.3" width="1.4" height="1.4"/><rect x="188.4" y="149.3" width="0.8" height="0.8"/><rect x="177.8" y="146.3" width="0.9" height="0.9"/><rect x="129.5" y="96.7" width="1.4" height="1.4"/><rect x="184.6" y="137.0" width="1.1" height="1.1"/><rect x="195.1" y="144.8" width="1.1" height="1.1"/><rect x="175.2" y="138.4" width="0.8" height="0.8"/><rect x="186.7" y="144.6" width="1.4" height="1.4"/><rect x="214.4" y="159.6" width="1.1" height="1.1"/><rect x="175.5" y="129.3" width="1.3" height="1.3"/><rect x="171.8" y="124.9" width="1.4" height="1.4"/><rect x="195.3" y="151.1" width="0.9" height="0.9"/><rect x="127.5" y="98.4" width="0.8" height="0.8"/><rect x="161.8" y="124.0" width="1.1" height="1.1"/><rect x="202.8" y="152.1" width="0.8" height="0.8"/><rect x="167.7" y="133.6" width="0.8" height="0.8"/><rect x="145.6" y="109.8" width="0.9" height="0.9"/><rect x="219.7" y="153.9" width="1.3" height="1.3"/><rect x="219.0" y="164.0" width="1.4" height="1.4"/><rect x="131.6" y="95.4" width="1.2" height="1.2"/><rect x="144.5" y="104.9" width="1.0" height="1.0"/><rect x="133.0" y="100.6" width="1.0" height="1.0"/><rect x="138.1" y="103.9" width="1.1" height="1.1"/><rect x="136.9" y="100.2" width="1.3" height="1.3"/><rect x="128.8" y="102.7" width="1.3" height="1.3"/><rect x="138.3" y="101.5" width="0.8" height="0.8"/><rect x="192.9" y="153.1" width="1.5" height="1.5"/><rect x="166.7" y="125.2" width="0.9" height="0.9"/><rect x="214.9" y="165.7" width="0.7" height="0.7"/><rect x="138.0" y="107.1" width="0.9" height="0.9"/><rect x="148.4" y="121.7" width="0.9" height="0.9"/><rect x="132.9" y="101.6" width="0.9" height="0.9"/><rect x="165.4" y="133.0" width="1.4" height="1.4"/><rect x="137.2" y="106.3" width="1.4" height="1.4"/><rect x="132.4" y="95.5" width="0.8" height="0.8"/><rect x="161.8" y="125.1" width="0.7" height="0.7"/><rect x="147.7" y="109.0" width="1.0" height="1.0"/><rect x="173.4" y="134.8" width="1.3" height="1.3"/><rect x="212.1" y="154.9" width="0.8" height="0.8"/><rect x="199.2" y="149.3" width="0.7" height="0.7"/><rect x="193.5" y="135.8" width="1.1" height="1.1"/><rect x="206.2" y="156.3" width="1.3" height="1.3"/><rect x="164.0" y="116.4" width="1.1" height="1.1"/><rect x="182.4" y="142.5" width="1.1" height="1.1"/><rect x="142.3" y="106.1" width="0.7" height="0.7"/><rect x="137.4" y="109.3" width="1.4" height="1.4"/><rect x="181.7" y="137.4" width="1.3" height="1.3"/><rect x="177.4" y="137.0" width="1.2" height="1.2"/><rect x="126.4" y="99.9" width="1.0" height="1.0"/><rect x="220.9" y="157.7" width="1.4" height="1.4"/><rect x="197.3" y="155.4" width="0.9" height="0.9"/><rect x="203.4" y="163.2" width="1.4" height="1.4"/><rect x="204.7" y="158.2" width="0.8" height="0.8"/><rect x="150.9" y="115.7" width="1.4" height="1.4"/><rect x="160.0" y="113.8" width="1.2" height="1.2"/><rect x="147.4" y="117.1" width="0.8" height="0.8"/><rect x="175.9" y="132.8" width="1.2" height="1.2"/><rect x="172.6" y="128.1" width="1.0" height="1.0"/><rect x="133.6" y="93.1" width="1.5" height="1.5"/><rect x="177.7" y="135.0" width="1.4" height="1.4"/><rect x="148.9" y="126.5" width="0.7" height="0.7"/><rect x="132.0" y="97.0" width="1.1" height="1.1"/><rect x="175.7" y="132.3" width="0.9" height="0.9"/><rect x="183.1" y="146.7" width="0.8" height="0.8"/><rect x="174.3" y="143.6" width="1.3" height="1.3"/><rect x="127.6" y="96.7" width="1.2" height="1.2"/><rect x="167.2" y="127.8" width="0.8" height="0.8"/><rect x="188.1" y="143.9" width="1.1" height="1.1"/><rect x="187.9" y="151.7" width="0.9" height="0.9"/><rect x="177.9" y="134.8" width="1.1" height="1.1"/><rect x="176.3" y="129.1" width="1.2" height="1.2"/><rect x="214.3" y="164.3" width="1.3" height="1.3"/><rect x="137.2" y="97.5" width="1.4" height="1.4"/><rect x="136.9" y="105.5" width="1.4" height="1.4"/><rect x="214.7" y="161.0" width="1.0" height="1.0"/><rect x="175.2" y="138.9" width="1.4" height="1.4"/><rect x="156.5" y="112.2" width="1.1" height="1.1"/><rect x="208.7" y="158.4" width="0.7" height="0.7"/><rect x="189.4" y="148.8" width="0.8" height="0.8"/><rect x="170.3" y="133.2" width="1.0" height="1.0"/><rect x="167.7" y="126.4" width="1.5" height="1.5"/><rect x="176.5" y="136.3" width="1.3" height="1.3"/><rect x="198.0" y="151.4" width="1.0" height="1.0"/><rect x="134.8" y="96.1" width="0.8" height="0.8"/><rect x="153.0" y="117.9" width="0.7" height="0.7"/><rect x="137.1" y="101.0" width="1.2" height="1.2"/><rect x="188.5" y="152.4" width="1.5" height="1.5"/><rect x="132.4" y="95.1" width="1.0" height="1.0"/><rect x="128.6" y="100.9" width="1.0" height="1.0"/><rect x="209.8" y="175.1" width="0.7" height="0.7"/><rect x="174.1" y="133.3" width="0.9" height="0.9"/><rect x="147.0" y="117.4" width="1.0" height="1.0"/><rect x="145.7" y="112.9" width="0.8" height="0.8"/><rect x="207.3" y="160.8" width="1.0" height="1.0"/><rect x="128.4" y="100.1" width="1.0" height="1.0"/><rect x="209.4" y="155.9" width="1.1" height="1.1"/><rect x="168.0" y="137.1" width="0.9" height="0.9"/><rect x="194.7" y="154.7" width="1.1" height="1.1"/><rect x="147.4" y="108.6" width="0.9" height="0.9"/><rect x="127.8" y="96.7" width="1.3" height="1.3"/><rect x="161.7" y="116.6" width="0.9" height="0.9"/><rect x="156.9" y="118.2" width="1.3" height="1.3"/><rect x="163.5" y="120.2" width="1.2" height="1.2"/><rect x="195.1" y="147.0" width="1.2" height="1.2"/><rect x="187.7" y="135.7" width="1.3" height="1.3"/><rect x="148.9" y="111.7" width="0.8" height="0.8"/><rect x="153.6" y="118.9" width="1.1" height="1.1"/><rect x="180.4" y="136.3" width="1.2" height="1.2"/><rect x="186.9" y="140.3" width="0.9" height="0.9"/><rect x="129.2" y="96.4" width="1.5" height="1.5"/><rect x="158.8" y="122.9" width="1.1" height="1.1"/><rect x="218.8" y="159.9" width="0.9" height="0.9"/><rect x="209.6" y="153.5" width="1.2" height="1.2"/><rect x="166.0" y="116.2" width="1.0" height="1.0"/><rect x="194.1" y="159.4" width="1.1" height="1.1"/><rect x="168.4" y="140.0" width="1.2" height="1.2"/><rect x="130.9" y="100.0" width="1.4" height="1.4"/><rect x="194.5" y="146.1" width="0.8" height="0.8"/><rect x="167.9" y="134.9" width="0.9" height="0.9"/><rect x="155.6" y="123.0" width="1.2" height="1.2"/><rect x="181.8" y="144.1" width="0.8" height="0.8"/><rect x="203.7" y="159.0" width="0.7" height="0.7"/><rect x="133.1" y="100.2" width="1.0" height="1.0"/><rect x="134.5" y="98.0" width="1.0" height="1.0"/><rect x="132.3" y="105.0" width="1.1" height="1.1"/><rect x="170.1" y="131.1" width="0.7" height="0.7"/><rect x="208.5" y="151.0" width="1.2" height="1.2"/><rect x="184.9" y="145.8" width="0.9" height="0.9"/><rect x="157.7" y="134.5" width="1.2" height="1.2"/><rect x="145.8" y="110.3" width="0.9" height="0.9"/><rect x="216.0" y="162.3" width="1.4" height="1.4"/><rect x="131.3" y="102.6" width="0.9" height="0.9"/><rect x="141.3" y="110.7" width="1.0" height="1.0"/><rect x="149.6" y="114.4" width="0.9" height="0.9"/><rect x="183.0" y="150.9" width="1.3" height="1.3"/><rect x="195.0" y="146.1" width="1.2" height="1.2"/><rect x="134.4" y="99.2" width="1.3" height="1.3"/><rect x="140.2" y="101.1" width="1.2" height="1.2"/><rect x="198.6" y="163.1" width="1.0" height="1.0"/><rect x="166.4" y="126.4" width="0.8" height="0.8"/><rect x="151.4" y="118.6" width="1.4" height="1.4"/><rect x="167.9" y="124.7" width="1.5" height="1.5"/><rect x="132.7" y="90.9" width="1.0" height="1.0"/><rect x="140.5" y="99.0" width="1.2" height="1.2"/><rect x="177.0" y="126.2" width="1.1" height="1.1"/><rect x="161.4" y="117.4" width="1.5" height="1.5"/><rect x="179.7" y="134.6" width="0.7" height="0.7"/><rect x="160.1" y="123.0" width="1.0" height="1.0"/><rect x="138.6" y="107.5" width="0.9" height="0.9"/><rect x="181.5" y="145.1" width="1.4" height="1.4"/><rect x="154.5" y="120.1" width="1.0" height="1.0"/><rect x="122.9" y="102.8" width="1.4" height="1.4"/><rect x="164.7" y="120.7" width="0.8" height="0.8"/><rect x="200.0" y="155.2" width="1.0" height="1.0"/><rect x="202.6" y="152.6" width="1.4" height="1.4"/><rect x="144.5" y="113.8" width="0.9" height="0.9"/><rect x="147.2" y="105.5" width="1.1" height="1.1"/><rect x="191.1" y="146.2" width="1.0" height="1.0"/><rect x="179.1" y="140.2" width="1.1" height="1.1"/><rect x="145.3" y="108.1" width="1.5" height="1.5"/><rect x="139.0" y="110.9" width="1.0" height="1.0"/><rect x="138.3" y="95.8" width="1.4" height="1.4"/><rect x="152.1" y="116.7" width="1.2" height="1.2"/><rect x="186.0" y="151.5" width="0.9" height="0.9"/><rect x="176.4" y="129.8" width="1.3" height="1.3"/><rect x="186.7" y="150.2" width="0.9" height="0.9"/><rect x="183.4" y="133.2" width="0.7" height="0.7"/><rect x="133.2" y="94.6" width="1.1" height="1.1"/><rect x="141.7" y="119.9" width="1.0" height="1.0"/><rect x="190.9" y="147.8" width="0.9" height="0.9"/><rect x="215.8" y="156.5" width="1.2" height="1.2"/><rect x="208.0" y="163.5" width="1.2" height="1.2"/><rect x="168.4" y="135.9" width="0.8" height="0.8"/><rect x="168.3" y="128.0" width="1.0" height="1.0"/><rect x="211.5" y="162.7" width="1.1" height="1.1"/><rect x="203.7" y="159.4" width="1.3" height="1.3"/><rect x="149.6" y="126.2" width="1.0" height="1.0"/><rect x="161.6" y="122.9" width="1.2" height="1.2"/><rect x="181.8" y="142.2" width="1.0" height="1.0"/><rect x="140.4" y="113.5" width="1.2" height="1.2"/><rect x="134.1" y="102.4" width="1.3" height="1.3"/><rect x="164.7" y="130.8" width="1.0" height="1.0"/><rect x="129.2" y="102.7" width="0.9" height="0.9"/><rect x="143.3" y="110.1" width="1.0" height="1.0"/><rect x="182.6" y="136.4" width="0.9" height="0.9"/><rect x="190.2" y="144.9" width="1.5" height="1.5"/><rect x="199.3" y="151.5" width="0.7" height="0.7"/><rect x="180.3" y="138.0" width="1.0" height="1.0"/><rect x="169.1" y="136.3" width="0.7" height="0.7"/><rect x="146.1" y="111.1" width="0.9" height="0.9"/><rect x="134.8" y="106.2" width="0.9" height="0.9"/><rect x="139.4" y="93.2" width="0.8" height="0.8"/><rect x="143.7" y="118.6" width="1.0" height="1.0"/><rect x="168.2" y="127.2" width="0.7" height="0.7"/><rect x="140.5" y="105.0" width="1.5" height="1.5"/><rect x="160.5" y="123.9" width="1.1" height="1.1"/><rect x="204.1" y="145.0" width="0.9" height="0.9"/><rect x="170.3" y="134.6" width="0.9" height="0.9"/><rect x="217.2" y="159.9" width="1.0" height="1.0"/><rect x="177.9" y="136.7" width="1.5" height="1.5"/><rect x="157.7" y="112.8" width="1.3" height="1.3"/><rect x="189.8" y="140.5" width="1.0" height="1.0"/><rect x="151.9" y="111.1" width="1.2" height="1.2"/><rect x="189.5" y="143.1" width="0.9" height="0.9"/><rect x="137.5" y="99.9" width="0.9" height="0.9"/><rect x="160.4" y="121.1" width="0.9" height="0.9"/><rect x="130.4" y="100.5" width="1.5" height="1.5"/><rect x="131.5" y="108.4" width="1.1" height="1.1"/><rect x="149.7" y="113.3" width="1.3" height="1.3"/><rect x="153.2" y="117.5" width="1.2" height="1.2"/><rect x="151.4" y="113.9" width="1.1" height="1.1"/><rect x="166.9" y="129.4" width="0.8" height="0.8"/><rect x="128.1" y="100.6" width="1.4" height="1.4"/><rect x="145.0" y="108.8" width="1.3" height="1.3"/><rect x="147.2" y="111.6" width="1.1" height="1.1"/><rect x="138.5" y="106.3" width="1.4" height="1.4"/><rect x="205.0" y="155.6" width="1.0" height="1.0"/><rect x="153.4" y="119.5" width="0.7" height="0.7"/><rect x="154.3" y="111.4" width="1.3" height="1.3"/><rect x="157.0" y="118.7" width="1.4" height="1.4"/><rect x="139.8" y="104.1" width="1.3" height="1.3"/><rect x="196.4" y="139.4" width="1.4" height="1.4"/><rect x="141.7" y="93.8" width="1.4" height="1.4"/><rect x="156.5" y="117.1" width="1.1" height="1.1"/><rect x="186.0" y="140.5" width="0.9" height="0.9"/><rect x="183.7" y="131.4" width="1.3" height="1.3"/><rect x="139.8" y="104.1" width="1.2" height="1.2"/><rect x="142.9" y="108.2" width="1.0" height="1.0"/><rect x="170.2" y="130.6" width="1.2" height="1.2"/><rect x="172.2" y="121.6" width="0.8" height="0.8"/><rect x="125.6" y="104.8" width="0.9" height="0.9"/><rect x="179.0" y="128.8" width="1.0" height="1.0"/><rect x="193.8" y="148.0" width="1.3" height="1.3"/><rect x="182.1" y="139.8" width="1.0" height="1.0"/><rect x="187.7" y="144.3" width="0.8" height="0.8"/><rect x="140.9" y="111.2" width="0.9" height="0.9"/><rect x="133.1" y="98.4" width="0.8" height="0.8"/><rect x="152.4" y="119.8" width="0.9" height="0.9"/><rect x="129.7" y="98.5" width="0.8" height="0.8"/><rect x="184.9" y="137.2" width="1.3" height="1.3"/><rect x="132.9" y="100.8" width="0.8" height="0.8"/><rect x="189.8" y="147.0" width="1.4" height="1.4"/><rect x="159.7" y="117.2" width="1.1" height="1.1"/><rect x="182.8" y="142.1" width="1.4" height="1.4"/><rect x="172.6" y="131.9" width="1.4" height="1.4"/><rect x="127.0" y="102.0" width="1.0" height="1.0"/><rect x="169.8" y="136.7" width="0.9" height="0.9"/><rect x="143.8" y="115.3" width="1.5" height="1.5"/><rect x="129.2" y="103.2" width="1.2" height="1.2"/><rect x="170.3" y="125.7" width="1.1" height="1.1"/><rect x="148.8" y="115.4" width="1.5" height="1.5"/><rect x="203.4" y="161.2" width="0.9" height="0.9"/><rect x="168.0" y="132.6" width="1.0" height="1.0"/><rect x="146.0" y="118.5" width="1.0" height="1.0"/><rect x="131.1" y="98.2" width="1.4" height="1.4"/><rect x="140.7" y="103.4" width="1.1" height="1.1"/><rect x="145.7" y="106.8" width="1.2" height="1.2"/><rect x="156.8" y="123.3" width="1.4" height="1.4"/><rect x="203.6" y="163.9" width="1.3" height="1.3"/><rect x="186.3" y="143.3" width="0.9" height="0.9"/><rect x="208.0" y="160.0" width="0.9" height="0.9"/><rect x="143.8" y="105.5" width="0.8" height="0.8"/><rect x="132.5" y="94.3" width="0.7" height="0.7"/><rect x="148.2" y="109.3" width="1.4" height="1.4"/><rect x="193.8" y="150.8" width="1.2" height="1.2"/><rect x="160.3" y="126.7" width="0.9" height="0.9"/><rect x="127.6" y="101.3" width="1.4" height="1.4"/><rect x="141.7" y="114.3" width="1.2" height="1.2"/><rect x="181.6" y="137.2" width="1.2" height="1.2"/><rect x="212.5" y="156.1" width="0.9" height="0.9"/><rect x="156.3" y="121.4" width="1.1" height="1.1"/><rect x="147.5" y="120.2" width="1.2" height="1.2"/><rect x="187.4" y="141.2" width="1.2" height="1.2"/><rect x="168.8" y="129.9" width="1.5" height="1.5"/><rect x="195.0" y="139.1" width="1.1" height="1.1"/><rect x="142.1" y="101.7" width="1.0" height="1.0"/><rect x="142.6" y="109.3" width="1.1" height="1.1"/><rect x="157.8" y="122.5" width="1.3" height="1.3"/><rect x="207.9" y="160.5" width="1.4" height="1.4"/><rect x="130.8" y="99.2" width="0.7" height="0.7"/><rect x="131.5" y="110.9" width="0.7" height="0.7"/><rect x="136.1" y="99.0" width="1.0" height="1.0"/><rect x="172.7" y="128.0" width="1.5" height="1.5"/><rect x="128.4" y="101.9" width="1.3" height="1.3"/><rect x="192.1" y="145.4" width="0.9" height="0.9"/><rect x="172.6" y="127.5" width="1.2" height="1.2"/><rect x="178.1" y="128.2" width="1.1" height="1.1"/><rect x="175.2" y="139.3" width="0.9" height="0.9"/><rect x="205.2" y="160.3" width="1.2" height="1.2"/><rect x="151.8" y="118.9" width="1.0" height="1.0"/><rect x="191.7" y="142.2" width="1.0" height="1.0"/><rect x="148.9" y="106.6" width="1.4" height="1.4"/><rect x="179.5" y="144.4" width="1.2" height="1.2"/><rect x="146.6" y="103.7" width="1.3" height="1.3"/><rect x="192.4" y="149.8" width="1.4" height="1.4"/><rect x="182.1" y="143.4" width="1.1" height="1.1"/><rect x="190.6" y="141.2" width="1.3" height="1.3"/><rect x="163.3" y="125.3" width="0.9" height="0.9"/><rect x="139.4" y="112.1" width="0.9" height="0.9"/><rect x="137.2" y="107.1" width="0.9" height="0.9"/><rect x="189.1" y="144.8" width="1.4" height="1.4"/><rect x="181.4" y="143.6" width="0.8" height="0.8"/><rect x="130.4" y="96.6" width="0.9" height="0.9"/><rect x="200.9" y="148.5" width="1.3" height="1.3"/><rect x="199.2" y="149.0" width="1.4" height="1.4"/><rect x="171.6" y="126.9" width="1.2" height="1.2"/><rect x="204.7" y="163.9" width="0.8" height="0.8"/><rect x="163.1" y="123.4" width="1.2" height="1.2"/><rect x="163.5" y="124.1" width="1.2" height="1.2"/><rect x="188.0" y="147.9" width="1.1" height="1.1"/><rect x="131.6" y="102.9" width="1.5" height="1.5"/><rect x="131.0" y="103.7" width="0.8" height="0.8"/><rect x="198.8" y="160.5" width="1.0" height="1.0"/><rect x="130.1" y="104.5" width="0.8" height="0.8"/><rect x="182.8" y="135.1" width="1.3" height="1.3"/><rect x="132.8" y="98.8" width="1.4" height="1.4"/><rect x="190.4" y="150.7" width="1.0" height="1.0"/><rect x="208.6" y="156.8" width="0.8" height="0.8"/><rect x="188.5" y="145.5" width="1.4" height="1.4"/><rect x="160.7" y="116.4" width="1.2" height="1.2"/><rect x="190.5" y="148.1" width="1.2" height="1.2"/><rect x="150.8" y="113.1" width="0.7" height="0.7"/><rect x="155.2" y="124.3" width="1.0" height="1.0"/><rect x="171.7" y="132.4" width="0.8" height="0.8"/><rect x="167.2" y="123.6" width="0.8" height="0.8"/><rect x="204.5" y="161.5" width="1.2" height="1.2"/><rect x="173.1" y="133.3" width="1.2" height="1.2"/><rect x="159.2" y="124.1" width="0.8" height="0.8"/><rect x="211.4" y="161.1" width="1.5" height="1.5"/><rect x="149.6" y="119.1" width="1.4" height="1.4"/><rect x="161.0" y="125.8" width="0.7" height="0.7"/><rect x="131.1" y="100.8" width="1.4" height="1.4"/><rect x="199.6" y="149.7" width="0.7" height="0.7"/><rect x="155.2" y="123.1" width="1.3" height="1.3"/><rect x="176.2" y="147.3" width="1.4" height="1.4"/><rect x="172.3" y="131.9" width="1.1" height="1.1"/><rect x="138.9" y="114.6" width="1.2" height="1.2"/><rect x="181.3" y="132.7" width="0.8" height="0.8"/><rect x="169.3" y="133.7" width="1.0" height="1.0"/><rect x="154.1" y="120.8" width="0.8" height="0.8"/><rect x="161.3" y="131.4" width="1.1" height="1.1"/><rect x="127.7" y="99.7" width="1.5" height="1.5"/><rect x="191.8" y="140.4" width="0.8" height="0.8"/><rect x="150.3" y="116.1" width="0.8" height="0.8"/><rect x="161.2" y="121.0" width="1.0" height="1.0"/><rect x="133.2" y="103.4" width="0.9" height="0.9"/><rect x="172.4" y="127.9" width="0.7" height="0.7"/><rect x="147.1" y="118.5" width="1.0" height="1.0"/><rect x="188.4" y="150.6" width="1.0" height="1.0"/><rect x="164.6" y="118.0" width="0.9" height="0.9"/><rect x="142.9" y="111.0" width="1.3" height="1.3"/><rect x="162.2" y="114.8" width="1.0" height="1.0"/><rect x="133.4" y="91.2" width="1.4" height="1.4"/><rect x="153.5" y="116.2" width="0.8" height="0.8"/><rect x="157.3" y="119.5" width="1.5" height="1.5"/><rect x="190.5" y="148.1" width="0.9" height="0.9"/><rect x="164.4" y="122.6" width="1.2" height="1.2"/><rect x="186.7" y="149.4" width="0.9" height="0.9"/><rect x="176.0" y="124.0" width="1.1" height="1.1"/><rect x="166.7" y="121.7" width="1.2" height="1.2"/><rect x="135.4" y="100.6" width="1.3" height="1.3"/><rect x="174.5" y="136.2" width="1.0" height="1.0"/><rect x="129.1" y="95.6" width="1.3" height="1.3"/><rect x="132.2" y="93.9" width="1.4" height="1.4"/><rect x="144.6" y="102.3" width="1.1" height="1.1"/><rect x="161.6" y="114.0" width="0.8" height="0.8"/><rect x="196.4" y="141.6" width="0.9" height="0.9"/><rect x="142.3" y="108.4" width="1.3" height="1.3"/><rect x="168.4" y="118.5" width="1.0" height="1.0"/><rect x="135.5" y="112.8" width="0.9" height="0.9"/><rect x="168.7" y="122.7" width="1.0" height="1.0"/><rect x="172.9" y="134.7" width="1.5" height="1.5"/><rect x="169.8" y="134.9" width="0.9" height="0.9"/><rect x="195.5" y="148.6" width="0.9" height="0.9"/><rect x="195.3" y="156.9" width="0.9" height="0.9"/><rect x="210.1" y="162.6" width="0.9" height="0.9"/><rect x="137.2" y="101.1" width="1.0" height="1.0"/><rect x="146.4" y="112.2" width="1.1" height="1.1"/><rect x="167.2" y="132.9" width="1.4" height="1.4"/><rect x="205.9" y="161.9" width="1.1" height="1.1"/><rect x="151.9" y="112.5" width="0.9" height="0.9"/><rect x="135.9" y="100.6" width="1.2" height="1.2"/><rect x="203.2" y="160.2" width="0.8" height="0.8"/><rect x="134.4" y="100.7" width="1.0" height="1.0"/><rect x="149.7" y="117.6" width="1.5" height="1.5"/><rect x="127.1" y="102.6" width="1.0" height="1.0"/><rect x="162.2" y="118.7" width="1.1" height="1.1"/><rect x="169.6" y="128.2" width="1.2" height="1.2"/><rect x="195.6" y="153.5" width="1.1" height="1.1"/><rect x="143.8" y="111.1" width="0.9" height="0.9"/><rect x="156.6" y="115.0" width="1.1" height="1.1"/><rect x="191.8" y="149.5" width="1.4" height="1.4"/><rect x="204.1" y="145.0" width="0.9" height="0.9"/><rect x="167.0" y="133.0" width="0.9" height="0.9"/><rect x="202.4" y="152.0" width="1.5" height="1.5"/><rect x="197.7" y="160.3" width="0.7" height="0.7"/><rect x="178.9" y="131.4" width="1.0" height="1.0"/><rect x="166.4" y="126.0" width="1.3" height="1.3"/><rect x="162.9" y="132.2" width="0.8" height="0.8"/><rect x="181.1" y="148.0" width="1.3" height="1.3"/><rect x="162.3" y="115.0" width="0.8" height="0.8"/><rect x="134.5" y="99.6" width="0.8" height="0.8"/><rect x="193.0" y="146.2" width="0.9" height="0.9"/><rect x="148.9" y="118.1" width="0.9" height="0.9"/><rect x="145.4" y="110.2" width="1.2" height="1.2"/><rect x="131.3" y="96.3" width="1.3" height="1.3"/><rect x="142.9" y="109.5" width="0.7" height="0.7"/><rect x="174.3" y="133.4" width="1.2" height="1.2"/><rect x="162.8" y="118.0" width="0.8" height="0.8"/><rect x="143.3" y="110.8" width="1.0" height="1.0"/><rect x="178.4" y="126.7" width="1.4" height="1.4"/><rect x="126.0" y="103.0" width="0.8" height="0.8"/><rect x="148.9" y="104.7" width="1.1" height="1.1"/><rect x="190.6" y="150.7" width="1.3" height="1.3"/><rect x="214.8" y="166.1" width="1.1" height="1.1"/><rect x="192.4" y="141.9" width="1.4" height="1.4"/><rect x="196.4" y="142.8" width="1.3" height="1.3"/><rect x="138.4" y="101.1" width="1.0" height="1.0"/><rect x="213.1" y="160.0" width="1.3" height="1.3"/><rect x="199.8" y="159.7" width="1.2" height="1.2"/><rect x="169.7" y="135.2" width="0.8" height="0.8"/><rect x="196.7" y="158.8" width="1.1" height="1.1"/><rect x="136.7" y="109.6" width="1.0" height="1.0"/><rect x="163.9" y="121.4" width="0.8" height="0.8"/><rect x="132.0" y="95.3" width="1.3" height="1.3"/><rect x="181.9" y="136.0" width="0.9" height="0.9"/><rect x="172.5" y="129.8" width="0.8" height="0.8"/><rect x="182.1" y="135.9" width="0.9" height="0.9"/><rect x="182.1" y="141.7" width="1.2" height="1.2"/><rect x="210.7" y="159.0" width="1.3" height="1.3"/><rect x="173.8" y="132.7" width="0.7" height="0.7"/><rect x="212.6" y="160.3" width="1.3" height="1.3"/><rect x="174.7" y="132.2" width="1.0" height="1.0"/><rect x="156.8" y="118.3" width="0.8" height="0.8"/><rect x="207.8" y="160.2" width="1.3" height="1.3"/><rect x="156.7" y="124.5" width="1.4" height="1.4"/><rect x="142.4" y="102.8" width="1.2" height="1.2"/><rect x="126.1" y="100.9" width="1.0" height="1.0"/><rect x="202.9" y="151.9" width="0.9" height="0.9"/><rect x="214.5" y="160.8" width="1.4" height="1.4"/><rect x="150.0" y="121.3" width="1.4" height="1.4"/><rect x="189.0" y="149.8" width="1.2" height="1.2"/><rect x="174.4" y="138.3" width="0.8" height="0.8"/><rect x="164.9" y="127.8" width="1.1" height="1.1"/><rect x="136.4" y="105.7" width="1.2" height="1.2"/><rect x="169.7" y="138.8" width="1.0" height="1.0"/><rect x="200.7" y="158.7" width="0.9" height="0.9"/><rect x="135.6" y="104.6" width="1.0" height="1.0"/><rect x="215.6" y="161.9" width="1.3" height="1.3"/><rect x="129.0" y="103.7" width="0.9" height="0.9"/><rect x="188.0" y="143.1" width="0.8" height="0.8"/><rect x="190.6" y="147.4" width="0.7" height="0.7"/><rect x="171.4" y="123.9" width="0.7" height="0.7"/><rect x="208.5" y="154.8" width="1.3" height="1.3"/><rect x="130.3" y="96.9" width="0.9" height="0.9"/><rect x="151.9" y="120.0" width="1.3" height="1.3"/></g><path d="M210 41 L219 54 L222 58 V100 L218 92 L214 60Z" fill="#000"/><path d="M218 80 H222 V96 H219Z" fill="#000"/><rect x="142.0" y="22.1" width="1.0" height="2.7" fill="#000" opacity="1"/><rect x="143.3" y="22.3" width="1.5" height="2.7" fill="#000" opacity="1"/><rect x="145.2" y="23.0" width="0.9" height="1.8" fill="#000" opacity="1"/><rect x="146.9" y="22.2" width="1.6" height="2.5" fill="#000" opacity="1"/><rect x="151.2" y="22.4" width="1.0" height="1.9" fill="#000" opacity="1"/><rect x="152.8" y="22.0" width="2.0" height="3.0" fill="#000" opacity="1"/><rect x="155.7" y="22.7" width="2.0" height="2.0" fill="#000" opacity="1"/><rect x="160.4" y="22.2" width="1.9" height="2.8" fill="#000" opacity="1"/><rect x="162.8" y="22.2" width="2.0" height="2.8" fill="#000" opacity="1"/><rect x="165.5" y="22.1" width="0.9" height="2.5" fill="#000" opacity="1"/><rect x="169.4" y="22.0" width="1.0" height="2.5" fill="#000" opacity="1"/><rect x="171.3" y="22.1" width="1.1" height="2.9" fill="#000" opacity="1"/><rect x="178.0" y="22.1" width="1.4" height="2.8" fill="#000" opacity="1"/><rect x="180.0" y="22.1" width="2.0" height="2.9" fill="#000" opacity="1"/><rect x="182.8" y="22.0" width="1.1" height="2.4" fill="#000" opacity="1"/><rect x="124.0" y="28.3" width="1.5" height="1.6" fill="#000" opacity="1"/><rect x="128.2" y="28.2" width="1.4" height="1.3" fill="#000" opacity="1"/><rect x="129.9" y="28.1" width="0.9" height="1.9" fill="#000" opacity="1"/><rect x="131.3" y="28.4" width="1.0" height="1.4" fill="#000" opacity="1"/><rect x="133.1" y="28.1" width="1.3" height="1.9" fill="#000" opacity="1"/><rect x="136.6" y="28.1" width="1.4" height="1.2" fill="#000" opacity="1"/><rect x="124.0" y="31.3" width="2.1" height="1.7" fill="#000" opacity="1"/><rect x="133.0" y="31.0" width="1.9" height="1.6" fill="#000" opacity="1"/><rect x="135.5" y="31.8" width="1.0" height="1.2" fill="#000" opacity="1"/><rect x="137.1" y="31.1" width="1.3" height="1.8" fill="#000" opacity="1"/><rect x="139.0" y="31.4" width="0.9" height="1.6" fill="#000" opacity="1"/><rect x="140.2" y="31.0" width="0.9" height="1.4" fill="#000" opacity="1"/><rect x="141.3" y="31.4" width="1.5" height="1.4" fill="#000" opacity="1"/><rect x="143.1" y="31.6" width="1.2" height="1.4" fill="#000" opacity="1"/><rect x="146.7" y="31.0" width="1.1" height="2.0" fill="#000" opacity="1"/><rect x="149.6" y="31.1" width="0.9" height="1.8" fill="#000" opacity="1"/><rect x="151.2" y="31.1" width="2.1" height="1.9" fill="#000" opacity="1"/><rect x="153.6" y="31.1" width="1.7" height="1.8" fill="#000" opacity="1"/><rect x="155.9" y="31.2" width="1.8" height="1.7" fill="#000" opacity="1"/><rect x="158.5" y="31.1" width="0.9" height="1.8" fill="#000" opacity="1"/><rect x="159.9" y="31.0" width="2.2" height="1.9" fill="#000" opacity="1"/><rect x="162.5" y="31.1" width="1.7" height="1.8" fill="#000" opacity="1"/><rect x="164.9" y="31.2" width="0.1" height="1.8" fill="#000" opacity="1"/><rect x="124.0" y="36.3" width="0.9" height="1.3" fill="#000" opacity="1"/><rect x="127.6" y="36.2" width="1.9" height="1.6" fill="#000" opacity="1"/><rect x="130.2" y="36.0" width="2.0" height="1.9" fill="#000" opacity="1"/><rect x="132.5" y="36.0" width="1.7" height="2.0" fill="#000" opacity="1"/><rect x="137.1" y="36.1" width="1.2" height="1.9" fill="#000" opacity="1"/><rect x="139.0" y="36.2" width="1.0" height="1.7" fill="#000" opacity="1"/><rect x="140.6" y="36.1" width="0.9" height="1.7" fill="#000" opacity="1"/><rect x="141.8" y="36.3" width="1.4" height="1.4" fill="#000" opacity="1"/><rect x="144.0" y="36.4" width="1.8" height="1.5" fill="#000" opacity="1"/><rect x="146.1" y="36.0" width="1.8" height="1.4" fill="#000" opacity="1"/><rect x="130.0" y="41.1" width="1.3" height="1.3" fill="#000" opacity="1"/><rect x="132.0" y="41.2" width="0.9" height="1.5" fill="#000" opacity="1"/><rect x="133.3" y="41.0" width="1.3" height="1.9" fill="#000" opacity="1"/><rect x="135.3" y="41.0" width="2.0" height="1.6" fill="#000" opacity="1"/><rect x="138.0" y="41.3" width="2.1" height="1.5" fill="#000" opacity="1"/><rect x="140.6" y="41.3" width="0.9" height="1.5" fill="#000" opacity="1"/><rect x="142.3" y="41.2" width="0.9" height="1.6" fill="#000" opacity="1"/><rect x="143.5" y="41.1" width="1.4" height="1.7" fill="#000" opacity="1"/><rect x="145.8" y="41.5" width="1.1" height="1.4" fill="#000" opacity="1"/><rect x="147.7" y="41.1" width="2.0" height="1.7" fill="#000" opacity="1"/><rect x="151.8" y="41.1" width="1.5" height="1.6" fill="#000" opacity="1"/><rect x="154.1" y="41.1" width="0.9" height="1.3" fill="#000" opacity="1"/><rect x="155.6" y="41.2" width="0.9" height="1.7" fill="#000" opacity="1"/><rect x="156.9" y="41.2" width="1.7" height="1.8" fill="#000" opacity="1"/><rect x="158.9" y="41.0" width="1.8" height="1.4" fill="#000" opacity="1"/><rect x="161.2" y="41.1" width="1.5" height="1.8" fill="#000" opacity="1"/><rect x="163.5" y="41.3" width="1.8" height="1.4" fill="#000" opacity="1"/><rect x="166.1" y="41.2" width="2.0" height="1.6" fill="#000" opacity="1"/><rect x="168.9" y="41.2" width="0.8" height="1.6" fill="#000" opacity="1"/><rect x="170.5" y="41.0" width="1.0" height="2.0" fill="#000" opacity="1"/><rect x="172.1" y="41.0" width="1.2" height="1.7" fill="#000" opacity="1"/><rect x="173.6" y="41.2" width="0.4" height="1.8" fill="#000" opacity="1"/><rect x="130.0" y="45.0" width="0.9" height="2.0" fill="#000" opacity="1"/><rect x="131.4" y="45.0" width="1.2" height="1.4" fill="#000" opacity="1"/><rect x="132.9" y="45.0" width="1.5" height="1.9" fill="#000" opacity="1"/><rect x="135.1" y="45.1" width="2.1" height="1.6" fill="#000" opacity="1"/><rect x="137.7" y="45.6" width="1.2" height="1.4" fill="#000" opacity="1"/><rect x="139.2" y="45.1" width="1.2" height="1.3" fill="#000" opacity="1"/><rect x="143.2" y="45.0" width="1.2" height="2.0" fill="#000" opacity="1"/><rect x="144.7" y="45.0" width="0.9" height="2.0" fill="#000" opacity="1"/><rect x="146.2" y="45.3" width="1.1" height="1.4" fill="#000" opacity="1"/><rect x="148.1" y="45.4" width="0.8" height="1.4" fill="#000" opacity="1"/><rect x="149.7" y="45.0" width="1.9" height="1.9" fill="#000" opacity="1"/><rect x="152.0" y="45.2" width="1.0" height="1.6" fill="#000" opacity="1"/><rect x="153.2" y="45.3" width="0.9" height="1.7" fill="#000" opacity="1"/><rect x="154.6" y="45.0" width="1.6" height="1.9" fill="#000" opacity="1"/><rect x="156.8" y="45.0" width="1.9" height="1.5" fill="#000" opacity="1"/><rect x="159.6" y="45.3" width="1.5" height="1.3" fill="#000" opacity="1"/><rect x="161.5" y="45.3" width="1.1" height="1.5" fill="#000" opacity="1"/><rect x="165.3" y="45.7" width="1.4" height="1.2" fill="#000" opacity="1"/><rect x="167.6" y="45.0" width="0.9" height="2.0" fill="#000" opacity="1"/><rect x="169.2" y="45.1" width="1.9" height="1.6" fill="#000" opacity="1"/><rect x="171.9" y="45.5" width="0.9" height="1.2" fill="#000" opacity="1"/><rect x="193.0" y="41.1" width="1.8" height="1.7" fill="#000" opacity="1"/><rect x="195.5" y="41.4" width="2.2" height="1.3" fill="#000" opacity="1"/><rect x="198.2" y="41.3" width="2.1" height="1.5" fill="#000" opacity="1"/><rect x="200.9" y="41.1" width="1.5" height="1.4" fill="#000" opacity="1"/><rect x="202.9" y="41.2" width="1.5" height="1.5" fill="#000" opacity="1"/><rect x="205.3" y="41.0" width="0.7" height="1.9" fill="#000" opacity="1"/><rect x="193.0" y="45.0" width="1.9" height="1.9" fill="#000" opacity="1"/><rect x="195.1" y="45.4" width="1.3" height="1.4" fill="#000" opacity="1"/><rect x="196.9" y="45.0" width="1.7" height="1.8" fill="#000" opacity="1"/><rect x="199.1" y="45.7" width="2.2" height="1.3" fill="#000" opacity="1"/><rect x="202.0" y="45.3" width="1.6" height="1.6" fill="#000" opacity="1"/><rect x="204.4" y="45.1" width="1.0" height="1.6" fill="#000" opacity="1"/><rect x="121.0" y="54.0" width="1.2" height="2.5" fill="#000" opacity="1"/><rect x="122.9" y="54.1" width="0.9" height="2.2" fill="#000" opacity="1"/><rect x="124.4" y="54.1" width="1.0" height="2.0" fill="#000" opacity="1"/><rect x="125.8" y="54.4" width="1.1" height="2.0" fill="#000" opacity="1"/><rect x="127.2" y="54.0" width="1.1" height="1.7" fill="#000" opacity="1"/><rect x="128.9" y="54.0" width="1.4" height="2.0" fill="#000" opacity="1"/><rect x="130.7" y="54.1" width="0.9" height="2.4" fill="#000" opacity="1"/><rect x="132.5" y="54.3" width="1.8" height="2.0" fill="#000" opacity="1"/><rect x="134.8" y="54.0" width="2.0" height="2.4" fill="#000" opacity="1"/><rect x="137.2" y="54.1" width="0.8" height="2.0" fill="#000" opacity="1"/><rect x="125.0" y="58.1" width="1.7" height="1.9" fill="#000" opacity="1"/><rect x="128.9" y="58.1" width="0.1" height="1.8" fill="#000" opacity="1"/><rect x="194.0" y="54.3" width="1.6" height="2.0" fill="#000" opacity="1"/><rect x="196.0" y="54.3" width="1.3" height="1.6" fill="#000" opacity="1"/><rect x="197.7" y="54.5" width="1.0" height="1.5" fill="#000" opacity="1"/><rect x="206.2" y="54.1" width="0.8" height="2.2" fill="#000" opacity="1"/><rect x="194.0" y="58.0" width="1.4" height="1.9" fill="#000" opacity="1"/><rect x="195.7" y="58.2" width="2.1" height="1.2" fill="#000" opacity="1"/><rect x="198.3" y="58.5" width="0.8" height="1.5" fill="#000" opacity="1"/><rect x="199.3" y="58.0" width="1.8" height="1.7" fill="#000" opacity="1"/><rect x="201.8" y="58.0" width="2.1" height="2.0" fill="#000" opacity="1"/><rect x="204.3" y="58.0" width="1.5" height="1.3" fill="#000" opacity="1"/><rect x="206.3" y="58.1" width="0.7" height="1.3" fill="#000" opacity="1"/><rect x="123.7" y="67.1" width="1.1" height="2.3" fill="#000" opacity="1"/><rect x="127.8" y="67.1" width="1.9" height="2.2" fill="#000" opacity="1"/><rect x="130.5" y="67.6" width="1.5" height="1.8" fill="#000" opacity="1"/><rect x="194.0" y="67.2" width="1.6" height="1.8" fill="#000" opacity="1"/><rect x="196.5" y="67.1" width="1.5" height="2.1" fill="#000" opacity="1"/><rect x="198.8" y="67.7" width="2.1" height="1.5" fill="#000" opacity="1"/><rect x="201.2" y="67.1" width="2.0" height="2.0" fill="#000" opacity="1"/><rect x="203.8" y="67.4" width="1.2" height="2.0" fill="#000" opacity="1"/><rect x="207.4" y="67.1" width="0.6" height="1.5" fill="#000" opacity="1"/><rect x="112.0" y="74.7" width="1.5" height="1.7" fill="#000" opacity="1"/><rect x="114.3" y="74.2" width="1.3" height="1.8" fill="#000" opacity="1"/><rect x="116.0" y="74.1" width="1.8" height="2.4" fill="#000" opacity="1"/><rect x="118.6" y="74.2" width="1.7" height="1.7" fill="#000" opacity="1"/><rect x="120.6" y="74.1" width="1.2" height="2.2" fill="#000" opacity="1"/><rect x="122.3" y="74.2" width="1.7" height="1.9" fill="#000" opacity="1"/><rect x="124.6" y="74.3" width="1.6" height="2.0" fill="#000" opacity="1"/><rect x="128.8" y="74.3" width="1.7" height="1.7" fill="#000" opacity="1"/><rect x="130.9" y="75.0" width="1.5" height="1.5" fill="#000" opacity="1"/><rect x="132.6" y="74.0" width="1.2" height="2.5" fill="#000" opacity="1"/><rect x="134.2" y="74.1" width="1.5" height="2.4" fill="#000" opacity="1"/><rect x="141.0" y="74.3" width="2.1" height="2.1" fill="#000" opacity="1"/><rect x="152.1" y="74.2" width="1.8" height="2.0" fill="#000" opacity="1"/><rect x="154.6" y="74.0" width="1.2" height="2.3" fill="#000" opacity="1"/><rect x="156.6" y="74.1" width="1.6" height="2.2" fill="#000" opacity="1"/><rect x="194.0" y="74.2" width="1.7" height="1.6" fill="#000" opacity="1"/><rect x="195.9" y="74.1" width="1.2" height="1.5" fill="#000" opacity="1"/><rect x="197.4" y="74.1" width="1.1" height="1.8" fill="#000" opacity="1"/><rect x="198.8" y="74.1" width="1.6" height="2.2" fill="#000" opacity="1"/><rect x="201.1" y="74.1" width="1.2" height="1.8" fill="#000" opacity="1"/><rect x="203.1" y="74.0" width="1.2" height="2.1" fill="#000" opacity="1"/><rect x="204.6" y="74.2" width="1.1" height="1.9" fill="#000" opacity="1"/><rect x="206.1" y="74.1" width="0.9" height="2.4" fill="#000" opacity="1"/><rect x="118.0" y="89.3" width="1.4" height="1.7" fill="#000" opacity="1"/><rect x="123.4" y="89.4" width="0.6" height="1.3" fill="#000" opacity="1"/><rect x="119.1" y="98.1" width="1.6" height="1.9" fill="#000" opacity="1"/><rect x="123.8" y="98.1" width="2.0" height="1.7" fill="#000" opacity="1"/><rect x="157.7" y="125.0" width="2.0" height="1.9" fill="#000" opacity="1"/><rect x="160.4" y="124.8" width="2.2" height="2.0" fill="#000" opacity="1"/><rect x="162.8" y="125.2" width="1.8" height="2.1" fill="#000" opacity="1"/><rect x="165.1" y="124.7" width="1.1" height="2.7" fill="#000" opacity="1"/><rect x="169.3" y="124.7" width="1.0" height="2.4" fill="#000" opacity="1"/><rect x="172.3" y="124.8" width="1.4" height="2.7" fill="#000" opacity="1"/><rect x="174.5" y="124.9" width="0.5" height="2.4" fill="#000" opacity="1"/><rect x="117.0" y="136.3" width="2.1" height="1.8" fill="#000" opacity="1"/><rect x="119.4" y="136.6" width="1.0" height="1.6" fill="#000" opacity="1"/><rect x="121.0" y="136.3" width="1.0" height="2.0" fill="#000" opacity="1"/><rect x="122.8" y="136.1" width="1.5" height="1.9" fill="#000" opacity="1"/><rect x="125.1" y="136.2" width="1.1" height="2.0" fill="#000" opacity="1"/><rect x="127.0" y="136.1" width="0.8" height="1.9" fill="#000" opacity="1"/><rect x="131.0" y="136.5" width="0.8" height="1.7" fill="#000" opacity="1"/><rect x="132.5" y="136.1" width="2.1" height="1.8" fill="#000" opacity="1"/><rect x="135.3" y="136.3" width="1.3" height="2.1" fill="#000" opacity="1"/><rect x="138.7" y="136.1" width="2.0" height="2.2" fill="#000" opacity="1"/><rect x="141.2" y="136.0" width="2.1" height="2.5" fill="#000" opacity="1"/><rect x="143.8" y="136.0" width="2.2" height="2.1" fill="#000" opacity="1"/><rect x="146.5" y="136.0" width="1.0" height="2.6" fill="#000" opacity="1"/><rect x="148.3" y="136.1" width="2.1" height="2.5" fill="#000" opacity="1"/><rect x="150.7" y="136.0" width="1.0" height="2.5" fill="#000" opacity="1"/><rect x="152.4" y="136.1" width="1.7" height="2.3" fill="#000" opacity="1"/><rect x="154.5" y="136.0" width="1.4" height="2.5" fill="#000" opacity="1"/><rect x="159.6" y="136.3" width="2.2" height="1.9" fill="#000" opacity="1"/><rect x="164.4" y="136.1" width="0.9" height="2.5" fill="#000" opacity="1"/><rect x="167.2" y="136.7" width="0.9" height="1.9" fill="#000" opacity="1"/><rect x="168.7" y="136.4" width="2.1" height="1.9" fill="#000" opacity="1"/><rect x="171.0" y="136.7" width="1.4" height="1.7" fill="#000" opacity="1"/><rect x="173.0" y="136.2" width="1.8" height="1.8" fill="#000" opacity="1"/><rect x="175.1" y="136.7" width="1.7" height="1.7" fill="#000" opacity="1"/><rect x="177.1" y="136.3" width="2.2" height="2.3" fill="#000" opacity="1"/><rect x="179.6" y="136.2" width="2.0" height="2.1" fill="#000" opacity="1"/><rect x="182.3" y="136.4" width="1.8" height="2.0" fill="#000" opacity="1"/><rect x="184.8" y="136.1" width="1.5" height="2.0" fill="#000" opacity="1"/><rect x="187.0" y="136.0" width="1.2" height="2.5" fill="#000" opacity="1"/><rect x="188.6" y="136.0" width="1.7" height="2.4" fill="#000" opacity="1"/><rect x="190.7" y="136.5" width="1.0" height="2.0" fill="#000" opacity="1"/><rect x="192.5" y="136.4" width="1.1" height="1.8" fill="#000" opacity="1"/><rect x="197.5" y="136.4" width="1.2" height="1.7" fill="#000" opacity="1"/><rect x="199.2" y="136.4" width="1.0" height="1.8" fill="#000" opacity="1"/><rect x="200.7" y="136.3" width="1.6" height="2.3" fill="#000" opacity="1"/><rect x="202.9" y="136.9" width="2.0" height="1.6" fill="#000" opacity="1"/><rect x="205.2" y="136.5" width="0.9" height="1.7" fill="#000" opacity="1"/><rect x="206.6" y="136.6" width="0.9" height="1.7" fill="#000" opacity="1"/><rect x="208.3" y="136.4" width="1.4" height="2.0" fill="#000" opacity="1"/><rect x="116.0" y="143.4" width="1.1" height="1.6" fill="#000" opacity="1"/><rect x="117.4" y="142.6" width="1.4" height="2.1" fill="#000" opacity="1"/><rect x="121.5" y="142.6" width="1.4" height="1.9" fill="#000" opacity="1"/><rect x="123.7" y="142.5" width="1.9" height="2.5" fill="#000" opacity="1"/><rect x="126.2" y="142.8" width="1.7" height="1.8" fill="#000" opacity="1"/><rect x="128.5" y="142.7" width="1.7" height="1.8" fill="#000" opacity="1"/><rect x="136.1" y="142.7" width="1.9" height="2.4" fill="#000" opacity="1"/><rect x="139.6" y="142.7" width="0.9" height="1.9" fill="#000" opacity="1"/><rect x="144.7" y="142.6" width="0.8" height="1.8" fill="#000" opacity="1"/><rect x="148.6" y="142.6" width="0.8" height="1.9" fill="#000" opacity="1"/><rect x="152.0" y="142.5" width="1.5" height="2.6" fill="#000" opacity="1"/><rect x="155.6" y="143.0" width="1.4" height="2.0" fill="#000" opacity="1"/><rect x="159.1" y="142.8" width="1.2" height="2.2" fill="#000" opacity="1"/><rect x="162.1" y="143.1" width="1.9" height="1.7" fill="#000" opacity="1"/><rect x="164.6" y="142.6" width="2.0" height="1.7" fill="#000" opacity="1"/><rect x="167.1" y="142.9" width="1.0" height="2.0" fill="#000" opacity="1"/><rect x="168.8" y="143.0" width="1.4" height="1.8" fill="#000" opacity="1"/><rect x="170.7" y="142.9" width="1.8" height="1.8" fill="#000" opacity="1"/><rect x="175.2" y="142.7" width="0.9" height="1.9" fill="#000" opacity="1"/><rect x="176.7" y="142.6" width="1.0" height="1.6" fill="#000" opacity="1"/><rect x="178.0" y="143.0" width="1.4" height="1.7" fill="#000" opacity="1"/><rect x="180.0" y="142.6" width="1.2" height="2.1" fill="#000" opacity="1"/><rect x="182.0" y="142.5" width="1.6" height="2.1" fill="#000" opacity="1"/><rect x="184.0" y="142.5" width="2.0" height="2.1" fill="#000" opacity="1"/><rect x="191.5" y="142.7" width="1.9" height="2.2" fill="#000" opacity="1"/><rect x="203.5" y="143.2" width="1.1" height="1.7" fill="#000" opacity="1"/><rect x="207.5" y="142.9" width="2.1" height="2.2" fill="#000" opacity="1"/><rect x="209.8" y="142.9" width="0.8" height="2.1" fill="#000" opacity="1"/><rect x="211.0" y="142.7" width="0.0" height="1.6" fill="#000" opacity="1"/><rect x="111.0" y="159.5" width="1.4" height="2.4" fill="#000" opacity="1"/><rect x="112.8" y="159.8" width="1.1" height="2.7" fill="#000" opacity="1"/><rect x="114.4" y="159.2" width="0.9" height="3.1" fill="#000" opacity="1"/><rect x="115.8" y="159.5" width="2.1" height="2.4" fill="#000" opacity="1"/><rect x="118.8" y="159.1" width="2.0" height="3.1" fill="#000" opacity="1"/><rect x="121.4" y="159.2" width="1.1" height="3.2" fill="#000" opacity="1"/><rect x="141.0" y="158.4" width="1.1" height="3.5" fill="#000" opacity="1"/><rect x="142.7" y="158.1" width="1.2" height="3.6" fill="#000" opacity="1"/><rect x="147.1" y="158.0" width="1.5" height="4.0" fill="#000" opacity="1"/><rect x="149.4" y="158.1" width="2.1" height="3.0" fill="#000" opacity="1"/><rect x="152.2" y="159.1" width="1.4" height="2.7" fill="#000" opacity="1"/><rect x="153.9" y="158.2" width="2.1" height="3.1" fill="#000" opacity="1"/><rect x="156.2" y="158.4" width="0.9" height="2.4" fill="#000" opacity="1"/><rect x="159.6" y="158.1" width="2.0" height="3.7" fill="#000" opacity="1"/><rect x="162.1" y="158.8" width="0.9" height="3.2" fill="#000" opacity="1"/><rect x="113" y="122" width="77" height="1.1" fill="#000"/><path d="M135 84.5 L138.5 83 L222 125 V138.5 L214 135 L139 91Z" fill="#000"/><path d="M140 86.3 L222 127.5" stroke="#fff" stroke-width="0.8" opacity="0.9"/></g></svg>
<svg class="a" style="left:940px;top:425px;" width="340" height="195" viewBox="0 0 340 195"><rect x="69.5" y="12.5" width="251" height="154" fill="#fff" stroke="#262626" stroke-width="1"/><path d="M69.5 166.5 v-2.5 M69.5 12.5 v2.5" stroke="#262626" stroke-width="1"/><text x="69.5" y="181.5" text-anchor="middle" font-family="Liberation Sans" font-size="13" fill="#262626">0</text><path d="M111.5 166.5 v-2.5 M111.5 12.5 v2.5" stroke="#262626" stroke-width="1"/><text x="111.5" y="181.5" text-anchor="middle" font-family="Liberation Sans" font-size="13" fill="#262626">100</text><path d="M153.5 166.5 v-2.5 M153.5 12.5 v2.5" stroke="#262626" stroke-width="1"/><text x="153.5" y="181.5" text-anchor="middle" font-family="Liberation Sans" font-size="13" fill="#262626">200</text><path d="M195.5 166.5 v-2.5 M195.5 12.5 v2.5" stroke="#262626" stroke-width="1"/><text x="195.5" y="181.5" text-anchor="middle" font-family="Liberation Sans" font-size="13" fill="#262626">300</text><path d="M236.5 166.5 v-2.5 M236.5 12.5 v2.5" stroke="#262626" stroke-width="1"/><text x="236.5" y="181.5" text-anchor="middle" font-family="Liberation Sans" font-size="13" fill="#262626">400</text><path d="M278.5 166.5 v-2.5 M278.5 12.5 v2.5" stroke="#262626" stroke-width="1"/><text x="278.5" y="181.5" text-anchor="middle" font-family="Liberation Sans" font-size="13" fill="#262626">500</text><path d="M320.5 166.5 v-2.5 M320.5 12.5 v2.5" stroke="#262626" stroke-width="1"/><text x="320.5" y="181.5" text-anchor="middle" font-family="Liberation Sans" font-size="13" fill="#262626">600</text><path d="M69.5 166.5 h2.5 M320.5 166.5 h-2.5" stroke="#262626" stroke-width="1"/><text x="65.5" y="170.0" text-anchor="end" font-family="Liberation Sans" font-size="13" fill="#262626">0</text><path d="M69.5 128.5 h2.5 M320.5 128.5 h-2.5" stroke="#262626" stroke-width="1"/><text x="65.5" y="132.0" text-anchor="end" font-family="Liberation Sans" font-size="13" fill="#262626">100</text><path d="M69.5 89.5 h2.5 M320.5 89.5 h-2.5" stroke="#262626" stroke-width="1"/><text x="65.5" y="93.0" text-anchor="end" font-family="Liberation Sans" font-size="13" fill="#262626">200</text><path d="M69.5 50.5 h2.5 M320.5 50.5 h-2.5" stroke="#262626" stroke-width="1"/><text x="65.5" y="54.0" text-anchor="end" font-family="Liberation Sans" font-size="13" fill="#262626">300</text><path d="M69.5 12.5 h2.5 M320.5 12.5 h-2.5" stroke="#262626" stroke-width="1"/><text x="65.5" y="16.0" text-anchor="end" font-family="Liberation Sans" font-size="13" fill="#262626">400</text><polyline points="69.2,99.0 71.1,97.1 72.5,69.4 73.6,65.9 74.8,64.6 75.9,62.0 77.2,56.8 78.5,52.7 79.6,50.4 80.7,47.2 82.0,44.9 83.3,41.6 84.6,38.0 85.9,37.9 87.3,35.0 88.8,36.1 90.3,34.6 91.8,30.5 93.1,24.9 94.4,21.3 95.7,21.1 97.0,23.1 98.1,27.9 99.2,28.7 101.0,41.6 102.9,70.5 104.2,70.4 105.5,70.5 107.3,60.1 108.4,26.8 110.3,25.0 112.1,39.8 114.0,28.7 115.8,52.7 117.7,56.4 119.2,30.5 120.3,27.2 121.4,21.3 122.7,20.2 124.0,19.4 125.8,39.8 127.7,21.3 129.5,19.4 131.4,65.7 132.7,67.2 134.0,67.5 135.8,25.0 137.7,25.0 139.2,65.7 140.3,64.3 141.4,65.7 142.9,23.1 144.0,24.6 145.1,25.0 146.2,31.1 147.3,34.2 148.6,37.1 149.9,39.8 151.7,56.4 153.6,56.4 155.4,36.1 156.9,41.7 158.4,45.3 160.3,54.6 162.1,36.1 163.4,35.8 164.7,34.2 166.0,31.5 167.3,32.4 168.4,37.1 169.5,39.8 170.8,48.5 172.1,56.4 173.4,57.5 174.7,60.1 175.8,49.0 176.9,41.6 178.2,42.7 179.5,40.9 180.8,60.6 182.1,80.5 183.2,75.8 184.3,69.4 186.2,34.2 187.5,35.7 188.7,34.2 190.0,33.8 191.2,33.4 192.5,30.5 193.7,28.9 194.9,29.3 196.2,26.8 197.4,28.4 198.6,32.3 199.9,32.4 201.1,37.0 202.3,36.9 203.6,41.6 205.0,42.9 206.5,47.2 208.0,74.9 209.1,47.2 210.3,47.3 211.6,51.5 212.8,50.9 214.0,51.8 215.3,53.8 216.5,54.6 217.7,55.0 219.0,57.1 220.2,58.3 221.5,71.7 222.8,86.0 223.9,52.7 225.1,52.1 226.4,53.1 227.6,52.7 228.7,53.4 229.8,55.1 230.9,54.6 232.1,55.9 233.2,54.6 234.2,55.7 235.3,56.0 236.3,54.5 237.4,52.2 238.4,54.7 239.5,54.8 240.6,52.7 241.6,54.6 242.7,53.5 243.7,54.4 244.8,52.6 245.8,55.4 246.9,54.6 248.0,54.6 249.1,53.7 250.2,52.8 251.3,56.0 252.4,56.5 253.5,54.6 254.6,148.9 255.4,60.1 256.6,59.7 257.8,63.8 259.1,63.8 260.2,67.2 261.3,71.2 262.4,68.0 263.5,67.5 264.6,57.4 265.7,49.0 266.8,47.8 267.9,45.9 269.1,40.3 270.2,39.8 271.4,38.4 272.6,34.2 273.9,34.2 275.4,69.3 276.8,102.7 278.3,82.3 279.8,55.7 281.3,30.5 282.4,28.3 283.5,23.1 284.6,63.9 285.7,100.8 287.2,93.5 288.7,86.0 290.2,56.6 291.6,23.1 292.7,22.8 293.9,22.3 295.0,24.9 296.1,25.0 297.2,23.5 298.3,24.5 299.4,25.7 300.5,26.9 301.6,26.8 302.7,25.8 303.8,25.7 305.0,29.4 306.1,27.5 307.2,28.7 308.7,37.9 310.1,43.5 311.4,46.0 312.7,45.3 314.0,43.0 315.3,41.6 316.4,30.4 317.5,19.4 318.7,16.7 319.8,13.9 321.2,39.8" fill="none" stroke="#0072bd" stroke-width="1.1" stroke-linejoin="round"/></svg>
</body></html>
